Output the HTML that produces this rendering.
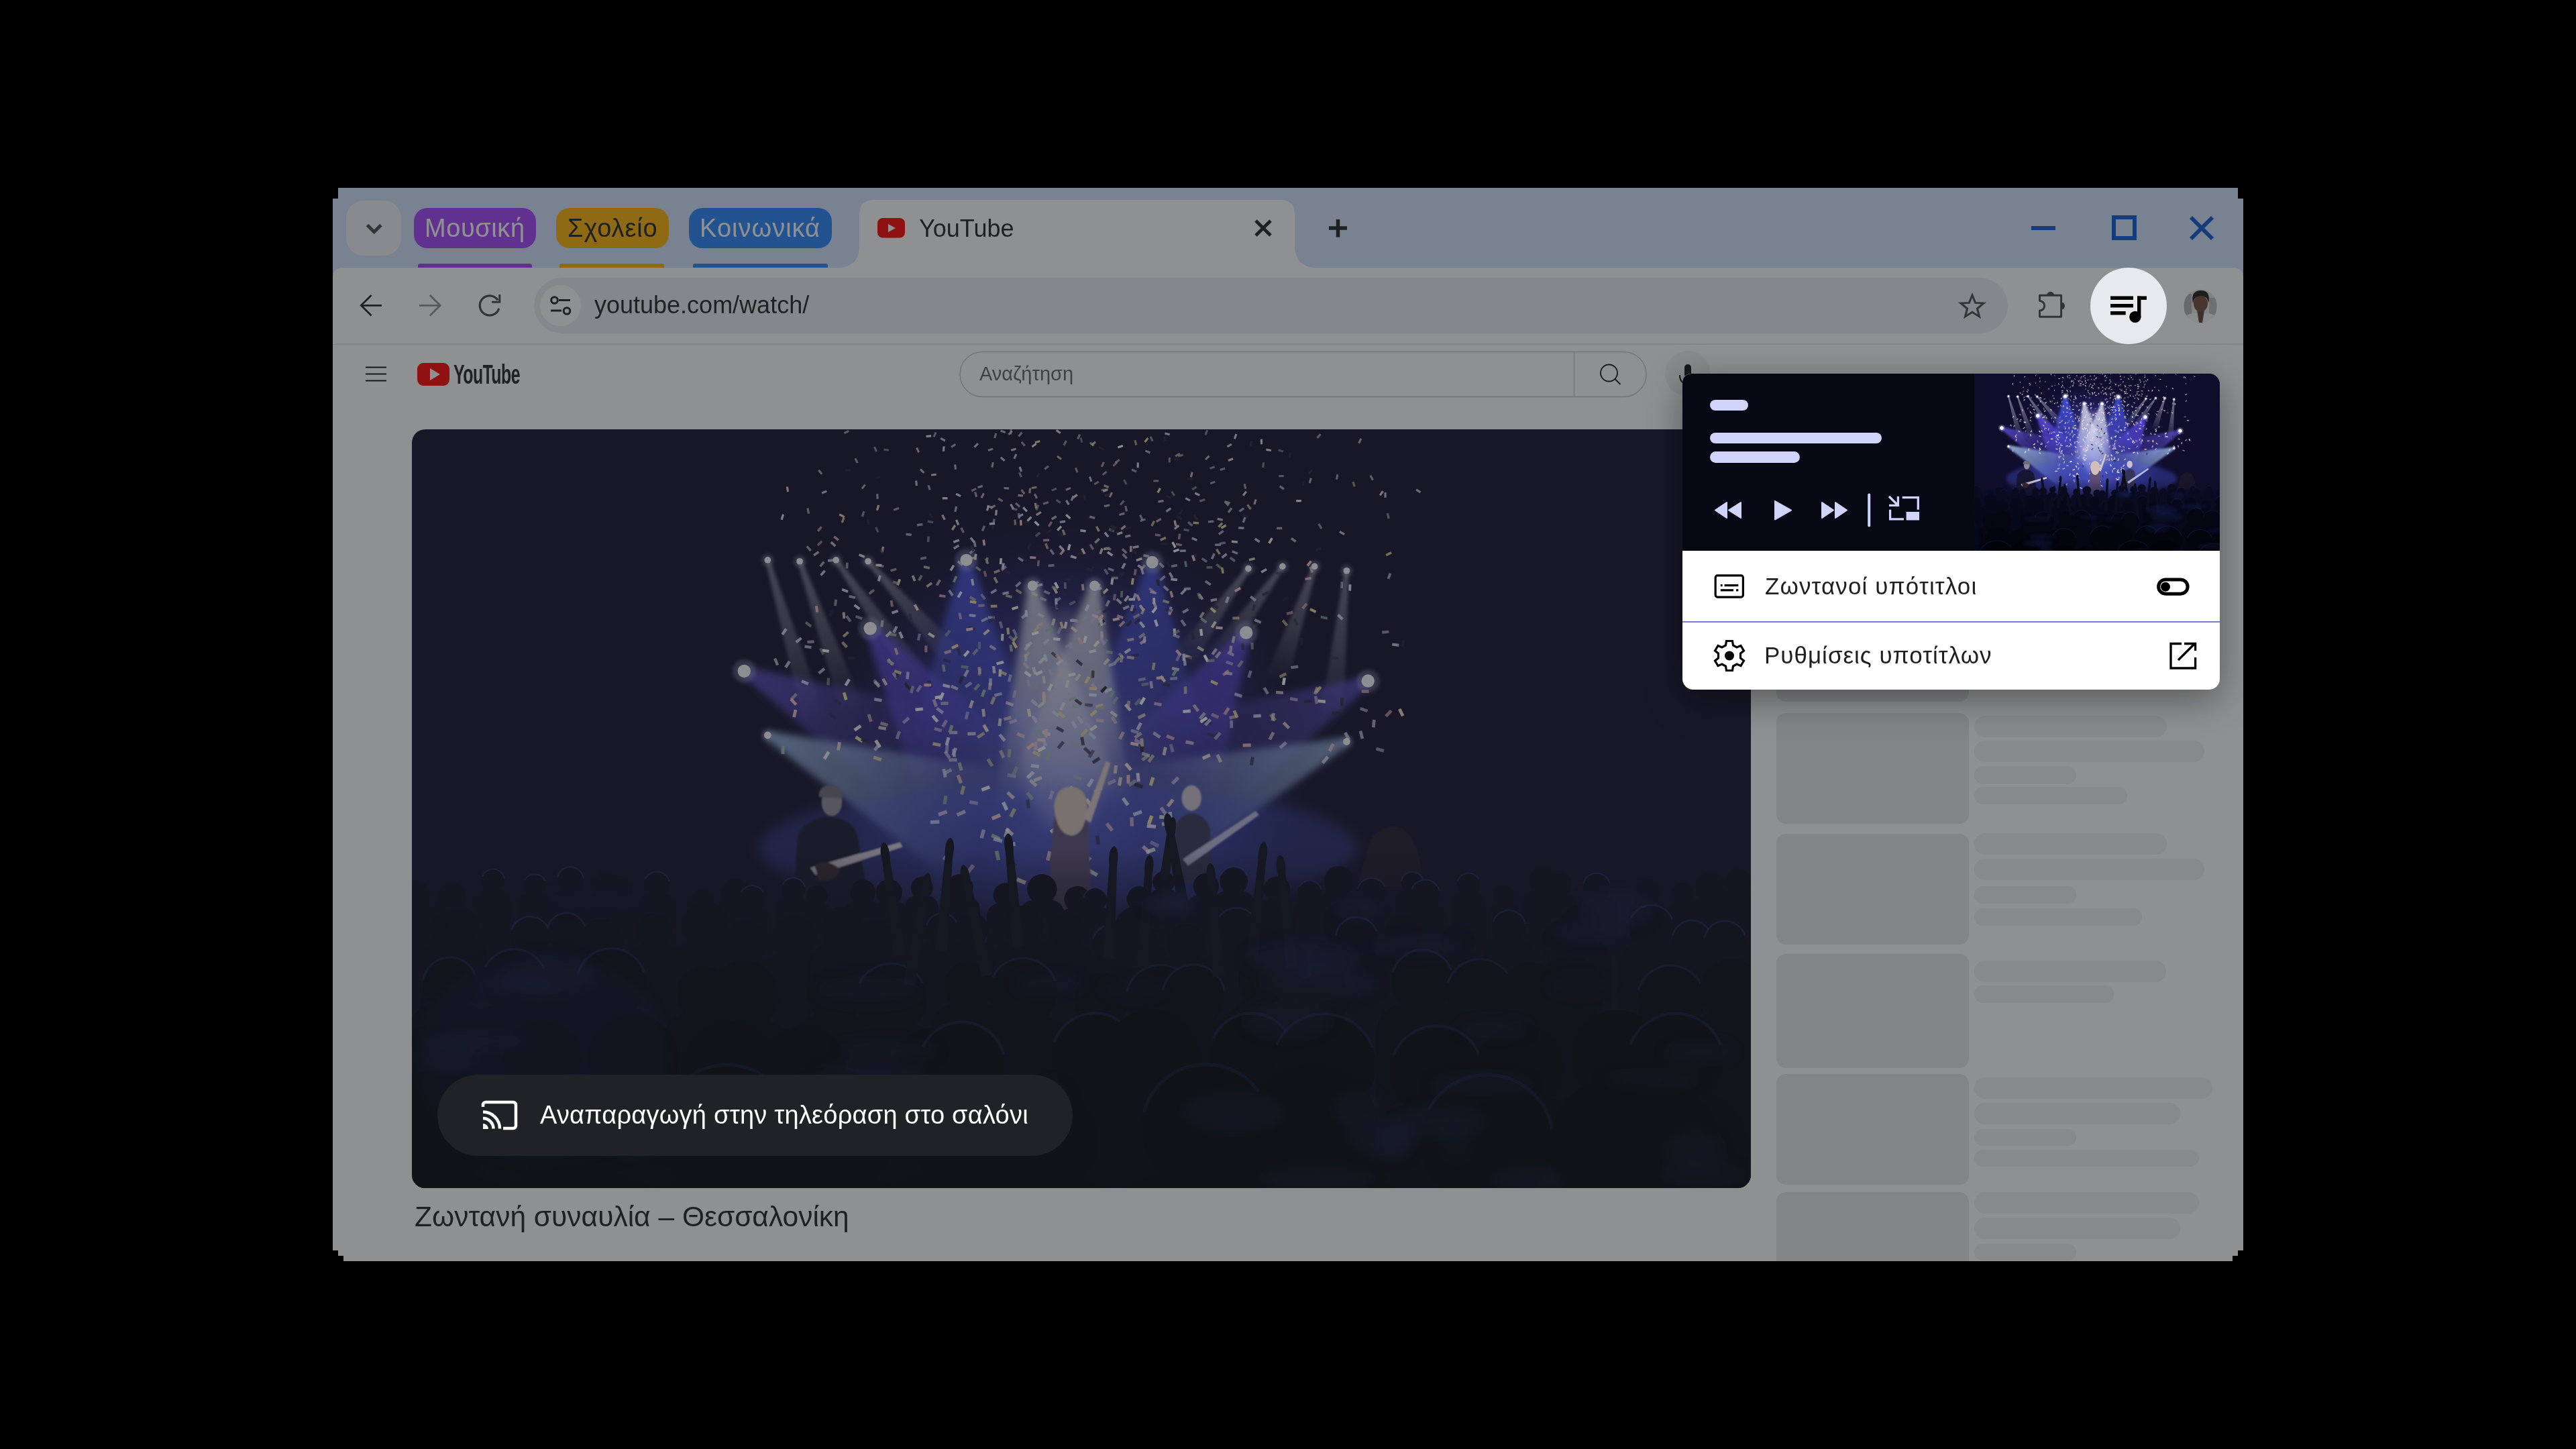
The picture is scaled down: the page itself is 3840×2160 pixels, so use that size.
<!DOCTYPE html>
<html><head><meta charset="utf-8">
<style>
html,body{margin:0;padding:0;}
body{width:3840px;height:2160px;background:#000;position:relative;overflow:hidden;font-family:"Liberation Sans", sans-serif;}
.a{position:absolute;}
.t{position:absolute;line-height:1;white-space:nowrap;font-family:"Liberation Sans", sans-serif;will-change:transform;}
svg{position:absolute;overflow:visible;}
</style></head><body>

<!-- window frame -->
<div class="a" style="left:496px;top:280px;width:2848px;height:1600px;background:#d3e3fd;"></div>

<!-- tab search button -->
<div class="a" style="left:516px;top:299px;width:82px;height:82px;border-radius:26px;background:#f0f2f7;"></div>
<svg style="left:0;top:0" width="3840" height="2160">
 <path d="M 547.5 335.5 L 557.7 345.7 L 567.9 335.5" fill="none" stroke="#474747" stroke-width="5"/>
</svg>

<!-- tab group chips -->
<div class="a" style="left:617px;top:310px;width:182px;height:60px;border-radius:20px;background:#a040fa;"></div>
<div class="a" style="left:623px;top:393px;width:170px;height:10px;border-radius:3px;background:#a040fa;"></div>
<div class="a" style="left:829px;top:310px;width:168px;height:60px;border-radius:20px;background:#ffb306;"></div>
<div class="a" style="left:834px;top:393px;width:156px;height:10px;border-radius:3px;background:#ffb306;"></div>
<div class="a" style="left:1027px;top:310px;width:213px;height:60px;border-radius:20px;background:#2683ff;"></div>
<div class="a" style="left:1033px;top:393px;width:201px;height:10px;border-radius:3px;background:#2683ff;"></div>
<div class="t" style="left:633px;top:320.8px;font-size:38px;color:#ffffff;letter-spacing:0.57px">Μουσική</div>
<div class="t" style="left:845.5px;top:320.8px;font-size:38px;color:#1f1f1f;letter-spacing:0.9px">Σχολείο</div>
<div class="t" style="left:1042.5px;top:320.8px;font-size:38px;color:#ffffff;letter-spacing:1.0px">Κοινωνικά</div>

<!-- active tab -->
<svg style="left:0;top:0" width="3840" height="2160">
 <path d="M 1248 399 Q 1281 399 1281 366 L 1281 320 Q 1281 298 1303 298 L 1908 298 Q 1930 298 1930 320 L 1930 366 Q 1930 399 1963 399 Z" fill="#ffffff"/>
 <rect x="1308" y="325" width="41" height="29.5" rx="8" fill="#ff0000"/>
 <path d="M 1324 334 L 1324 346 L 1335 340 Z" fill="#fff"/>
 <path d="M 1872 329 L 1894 351 M 1894 329 L 1872 351" stroke="#1f1f1f" stroke-width="5"/>
 <path d="M 1994.5 327 L 1994.5 353.5 M 1981 340 L 2008 340" stroke="#1f1f1f" stroke-width="5.5"/>
 <!-- window controls -->
 <rect x="3028" y="337" width="36" height="6" fill="#0b57d0"/>
 <rect x="3151" y="324" width="31" height="31" fill="none" stroke="#0b57d0" stroke-width="6"/>
 <path d="M 3266 324 L 3298 356 M 3298 324 L 3266 356" stroke="#0b57d0" stroke-width="6"/>
</svg>
<div class="t" style="left:1370.3px;top:322.5px;font-size:36px;color:#1f1f1f;">YouTube</div>

<!-- toolbar -->
<div class="a" style="left:496px;top:399px;width:2848px;height:114px;background:#ffffff;border-radius:14px 14px 0 0;"></div>
<div class="a" style="left:500px;top:512px;width:2844px;height:1.5px;background:#e6e6e8;"></div>
<div class="a" style="left:796px;top:414px;width:2197px;height:83px;border-radius:42px;background:#ebeef3;"></div>
<div class="a" style="left:805px;top:425px;width:61px;height:61px;border-radius:50%;background:#ffffff;"></div>
<svg style="left:0;top:0" width="3840" height="2160">
 <g fill="none" stroke="#474747" stroke-width="2.8" stroke-linecap="butt">
  <path d="M 569 455.3 L 538.5 455.3 M 553.6 440 L 538.3 455.3 L 553.6 470.5" stroke="#1f1f1f"/>
  <path d="M 625 455.3 L 655.7 455.3 M 640.9 440 L 656.2 455.3 L 640.9 470.5" stroke="#8f8f8f"/>
  <path d="M 743.8 459.7 A 14.6 14.6 0 1 1 742.0 447.4" stroke="#474747" stroke-width="3.2"/>
  <path d="M 744.8 439.1 L 744.8 450.3 L 733.1 450.3" stroke="#474747" stroke-width="3"/>
 </g>
 <g fill="none" stroke="#1f1f1f" stroke-width="3">
  <circle cx="826.5" cy="447.5" r="4.8"/><path d="M 833 447.5 L 850 447.5 M 821 463 L 837 463"/><circle cx="845" cy="463.5" r="4.8"/>
 </g>
 <path d="M 2940 440 L 2944.6 451.4 L 2957 452 L 2947.4 460 L 2950.6 472 L 2940 465.2 L 2929.4 472 L 2932.6 460 L 2923 452 L 2935.4 451.4 Z" fill="none" stroke="#474747" stroke-width="3" stroke-linejoin="miter"/>
 <path d="M 3040.5 440.3 L 3072.6 440.3 L 3072.6 472.2 L 3040.5 472.2 L 3040.5 463 A 7.25 7.25 0 0 0 3040.5 448.5 Z" fill="none" stroke="#474747" stroke-width="2.9" stroke-linejoin="round"/>
 <path d="M 3051.2 440.3 A 5.5 5.5 0 0 1 3062.2 440.3 Z M 3072.6 450.5 A 5.5 5.5 0 0 1 3072.6 461.5 Z" fill="#474747"/>
 <clipPath id="avc"><circle cx="3280" cy="456.5" r="25"/></clipPath>
 <g clip-path="url(#avc)">
  <rect x="3255" y="431" width="50" height="51" fill="#e2e2e4"/>
  <rect x="3256" y="438" width="11" height="34" fill="#b0b0b3"/>
  <rect x="3293" y="444" width="11" height="28" fill="#bcbcbe"/>
  <path d="M 3252 484 L 3256 472 Q 3266 466 3274 467 L 3287 467 Q 3295 466 3304 472 L 3308 484 Z" fill="#f4f4f4"/>
  <path d="M 3275 462 L 3286 462 L 3283 481 L 3278 481 Z" fill="#5e3e32"/>
  <ellipse cx="3280.5" cy="452.5" rx="10.5" ry="12.5" fill="#6e4838"/>
  <path d="M 3269 452 Q 3265 433 3281 433 Q 3296 433 3292 452 Q 3291 441 3281 441 Q 3271 441 3269 452 Z" fill="#1e1a1a"/>
 </g>
</svg>
<div class="t" style="left:885.5px;top:436.5px;font-size:36px;color:#1f1f1f;">youtube.com/watch/</div>

<!-- page -->
<div class="a" style="left:496px;top:514px;width:2848px;height:1366px;background:#ffffff;"></div>
<svg style="left:0;top:0" width="3840" height="2160">
 <path d="M 545 547.5 L 576 547.5 M 545 557.5 L 576 557.5 M 545 567.5 L 576 567.5" stroke="#0f0f0f" stroke-width="2.2"/>
 <rect x="622" y="541" width="48" height="34" rx="9" fill="#ff0000"/>
 <path d="M 641 549 L 641 567 L 656 558 Z" fill="#fff"/>
 <rect x="1431" y="524.5" width="1023" height="67" rx="33.5" fill="#ffffff" stroke="#c6c6c6" stroke-width="1.5"/>
 <path d="M 2346.5 525 L 2346.5 591" stroke="#c6c6c6" stroke-width="1.5"/>
 <circle cx="2398.5" cy="556" r="12.5" fill="none" stroke="#0f0f0f" stroke-width="1.8"/>
 <path d="M 2407.5 565 L 2415.5 573" stroke="#0f0f0f" stroke-width="1.8"/>
 <circle cx="2516" cy="557" r="34" fill="#f2f2f2"/>
 <rect x="2511" y="543" width="10" height="20" rx="5" fill="#0f0f0f"/>
 <path d="M 2504 559 Q 2504 572 2516 572 Q 2528 572 2528 559 M 2516 572 L 2516 579" fill="none" stroke="#0f0f0f" stroke-width="2"/>
</svg>
<div class="t" style="left:676px;top:538px;font-size:40px;font-weight:bold;color:#212121;transform-origin:0 0;transform:scaleX(0.625);letter-spacing:-1px;">YouTube</div>
<div class="t" style="left:1459.5px;top:543.0px;font-size:29px;color:#606060;">Αναζήτηση</div>

<!-- video -->
<svg style="left:614px;top:640px" width="1996" height="1131" viewBox="0 0 1996 1131">
 <defs><clipPath id="vclip"><rect x="0" y="0" width="1996" height="1131" rx="20"/></clipPath>
 <symbol id="scene" viewBox="0 0 1996 1131"><defs>
<radialGradient id="gA" cx="960" cy="640" r="900" gradientUnits="userSpaceOnUse">
 <stop offset="0" stop-color="#3c40c8" stop-opacity="0.7"/><stop offset="0.35" stop-color="#2a2288" stop-opacity="0.45"/><stop offset="0.65" stop-color="#150f40" stop-opacity="0.15"/><stop offset="1" stop-color="#0a0822" stop-opacity="0"/>
</radialGradient>
<radialGradient id="gB" cx="980" cy="700" r="560" gradientUnits="userSpaceOnUse">
 <stop offset="0" stop-color="#8fa0ff" stop-opacity="0.55"/><stop offset="0.5" stop-color="#5a66e0" stop-opacity="0.3"/><stop offset="1" stop-color="#4a4ad8" stop-opacity="0"/>
</radialGradient>
<linearGradient id="crowdFade" x1="0" y1="0" x2="0" y2="1">
 <stop offset="0" stop-color="#0a0b22" stop-opacity="0"/><stop offset="0.2" stop-color="#0a0b22" stop-opacity="0.6"/><stop offset="1" stop-color="#020308" stop-opacity="1"/>
</linearGradient>
<filter id="fb14" x="-50%" y="-50%" width="200%" height="200%"><feGaussianBlur stdDeviation="16"/></filter>
<filter id="fb8" x="-50%" y="-50%" width="200%" height="200%"><feGaussianBlur stdDeviation="8"/></filter>
<filter id="fb4" x="-50%" y="-50%" width="200%" height="200%"><feGaussianBlur stdDeviation="4"/></filter>
<filter id="fb2" x="-50%" y="-50%" width="200%" height="200%"><feGaussianBlur stdDeviation="2"/></filter>
</defs>
<g transform="translate(352 77) scale(0.63694)">
<rect x="-560" y="-130" width="3150" height="1800" fill="#100d2c"/>
<rect x="-560" y="-130" width="3150" height="1800" fill="url(#gA)"/>
<rect x="-560" y="-130" width="3150" height="1800" fill="url(#gB)"/>
<linearGradient id="bq0" gradientUnits="userSpaceOnUse" x1="280" y1="185" x2="390" y2="560"><stop offset="0" stop-color="#e4e8ff" stop-opacity="0.45"/><stop offset="0.55" stop-color="#e4e8ff" stop-opacity="0.25"/><stop offset="1" stop-color="#e4e8ff" stop-opacity="0"/></linearGradient>
<polygon points="275,186 364,568 416,552 285,184" fill="url(#bq0)" filter="url(#fb4)"/>
<linearGradient id="bq1" gradientUnits="userSpaceOnUse" x1="355" y1="188" x2="480" y2="540"><stop offset="0" stop-color="#e4e8ff" stop-opacity="0.45"/><stop offset="0.55" stop-color="#e4e8ff" stop-opacity="0.25"/><stop offset="1" stop-color="#e4e8ff" stop-opacity="0"/></linearGradient>
<polygon points="350,190 454,549 506,531 360,186" fill="url(#bq1)" filter="url(#fb4)"/>
<linearGradient id="bq2" gradientUnits="userSpaceOnUse" x1="440" y1="185" x2="640" y2="470"><stop offset="0" stop-color="#e4e8ff" stop-opacity="0.45"/><stop offset="0.55" stop-color="#e4e8ff" stop-opacity="0.25"/><stop offset="1" stop-color="#e4e8ff" stop-opacity="0"/></linearGradient>
<polygon points="436,188 617,486 663,454 444,182" fill="url(#bq2)" filter="url(#fb4)"/>
<linearGradient id="bq3" gradientUnits="userSpaceOnUse" x1="515" y1="188" x2="730" y2="430"><stop offset="0" stop-color="#e4e8ff" stop-opacity="0.45"/><stop offset="0.55" stop-color="#e4e8ff" stop-opacity="0.25"/><stop offset="1" stop-color="#e4e8ff" stop-opacity="0"/></linearGradient>
<polygon points="511,191 709,448 751,412 519,185" fill="url(#bq3)" filter="url(#fb4)"/>
<linearGradient id="bq4" gradientUnits="userSpaceOnUse" x1="1635" y1="210" x2="1600" y2="560"><stop offset="0" stop-color="#e4e8ff" stop-opacity="0.45"/><stop offset="0.55" stop-color="#e4e8ff" stop-opacity="0.25"/><stop offset="1" stop-color="#e4e8ff" stop-opacity="0"/></linearGradient>
<polygon points="1630,210 1573,557 1627,563 1640,210" fill="url(#bq4)" filter="url(#fb4)"/>
<linearGradient id="bq5" gradientUnits="userSpaceOnUse" x1="1560" y1="200" x2="1470" y2="470"><stop offset="0" stop-color="#e4e8ff" stop-opacity="0.45"/><stop offset="0.55" stop-color="#e4e8ff" stop-opacity="0.25"/><stop offset="1" stop-color="#e4e8ff" stop-opacity="0"/></linearGradient>
<polygon points="1555,198 1444,461 1496,479 1565,202" fill="url(#bq5)" filter="url(#fb4)"/>
<linearGradient id="bq6" gradientUnits="userSpaceOnUse" x1="1485" y1="200" x2="1320" y2="430"><stop offset="0" stop-color="#e4e8ff" stop-opacity="0.45"/><stop offset="0.55" stop-color="#e4e8ff" stop-opacity="0.25"/><stop offset="1" stop-color="#e4e8ff" stop-opacity="0"/></linearGradient>
<polygon points="1481,197 1298,414 1342,446 1489,203" fill="url(#bq6)" filter="url(#fb4)"/>
<linearGradient id="bq7" gradientUnits="userSpaceOnUse" x1="1405" y1="205" x2="1250" y2="420"><stop offset="0" stop-color="#e4e8ff" stop-opacity="0.45"/><stop offset="0.55" stop-color="#e4e8ff" stop-opacity="0.25"/><stop offset="1" stop-color="#e4e8ff" stop-opacity="0"/></linearGradient>
<polygon points="1401,202 1228,404 1272,436 1409,208" fill="url(#bq7)" filter="url(#fb4)"/>
<linearGradient id="bq8" gradientUnits="userSpaceOnUse" x1="745" y1="185" x2="760" y2="640"><stop offset="0" stop-color="#4c5cff" stop-opacity="0.8"/><stop offset="0.55" stop-color="#4c5cff" stop-opacity="0.44"/><stop offset="1" stop-color="#4c5cff" stop-opacity="0"/></linearGradient>
<polygon points="733,185 610,645 910,635 757,185" fill="url(#bq8)" filter="url(#fb8)"/>
<linearGradient id="bq9" gradientUnits="userSpaceOnUse" x1="1180" y1="190" x2="1160" y2="600"><stop offset="0" stop-color="#4c5cff" stop-opacity="0.75"/><stop offset="0.55" stop-color="#4c5cff" stop-opacity="0.41"/><stop offset="1" stop-color="#4c5cff" stop-opacity="0"/></linearGradient>
<polygon points="1168,189 1020,593 1300,607 1192,191" fill="url(#bq9)" filter="url(#fb8)"/>
<linearGradient id="bq10" gradientUnits="userSpaceOnUse" x1="520" y1="345" x2="760" y2="700"><stop offset="0" stop-color="#6650ff" stop-opacity="0.75"/><stop offset="0.55" stop-color="#6650ff" stop-opacity="0.41"/><stop offset="1" stop-color="#6650ff" stop-opacity="0"/></linearGradient>
<polygon points="510,352 644,778 876,622 530,338" fill="url(#bq10)" filter="url(#fb8)"/>
<linearGradient id="bq11" gradientUnits="userSpaceOnUse" x1="1400" y1="355" x2="1200" y2="700"><stop offset="0" stop-color="#6650ff" stop-opacity="0.75"/><stop offset="0.55" stop-color="#6650ff" stop-opacity="0.41"/><stop offset="1" stop-color="#6650ff" stop-opacity="0"/></linearGradient>
<polygon points="1390,349 1079,630 1321,770 1410,361" fill="url(#bq11)" filter="url(#fb8)"/>
<linearGradient id="bq12" gradientUnits="userSpaceOnUse" x1="225" y1="445" x2="620" y2="640"><stop offset="0" stop-color="#6a58f0" stop-opacity="0.7"/><stop offset="0.55" stop-color="#6a58f0" stop-opacity="0.39"/><stop offset="1" stop-color="#6a58f0" stop-opacity="0"/></linearGradient>
<polygon points="220,455 567,748 673,532 230,435" fill="url(#bq12)" filter="url(#fb8)"/>
<linearGradient id="bq13" gradientUnits="userSpaceOnUse" x1="1685" y1="468" x2="1320" y2="650"><stop offset="0" stop-color="#6a58f0" stop-opacity="0.65"/><stop offset="0.55" stop-color="#6a58f0" stop-opacity="0.36"/><stop offset="1" stop-color="#6a58f0" stop-opacity="0"/></linearGradient>
<polygon points="1680,458 1266,543 1374,757 1690,478" fill="url(#bq13)" filter="url(#fb8)"/>
<linearGradient id="bq14" gradientUnits="userSpaceOnUse" x1="900" y1="245" x2="960" y2="760"><stop offset="0" stop-color="#f0f3ff" stop-opacity="0.8"/><stop offset="0.5" stop-color="#f0f3ff" stop-opacity="0.44"/><stop offset="1" stop-color="#f0f3ff" stop-opacity="0"/></linearGradient>
<polygon points="889,246 811,777 1109,743 911,244" fill="url(#bq14)" filter="url(#fb8)"/>
<linearGradient id="bq15" gradientUnits="userSpaceOnUse" x1="1045" y1="245" x2="985" y2="760"><stop offset="0" stop-color="#f0f3ff" stop-opacity="0.8"/><stop offset="0.5" stop-color="#f0f3ff" stop-opacity="0.44"/><stop offset="1" stop-color="#f0f3ff" stop-opacity="0"/></linearGradient>
<polygon points="1034,244 836,743 1134,777 1056,246" fill="url(#bq15)" filter="url(#fb8)"/>
<linearGradient id="bq16" gradientUnits="userSpaceOnUse" x1="280" y1="595" x2="800" y2="820"><stop offset="0" stop-color="#a8ccff" stop-opacity="0.8"/><stop offset="0.55" stop-color="#a8ccff" stop-opacity="0.44"/><stop offset="1" stop-color="#a8ccff" stop-opacity="0"/></linearGradient>
<polygon points="276,604 740,958 860,682 284,586" fill="url(#bq16)" filter="url(#fb8)"/>
<linearGradient id="bq17" gradientUnits="userSpaceOnUse" x1="1635" y1="610" x2="1150" y2="800"><stop offset="0" stop-color="#a8ccff" stop-opacity="0.75"/><stop offset="0.55" stop-color="#a8ccff" stop-opacity="0.41"/><stop offset="1" stop-color="#a8ccff" stop-opacity="0"/></linearGradient>
<polygon points="1631,601 1099,670 1201,930 1639,619" fill="url(#bq17)" filter="url(#fb8)"/>
<ellipse cx="960" cy="860" rx="700" ry="150" fill="#4a5ae0" opacity="0.35" filter="url(#fb14)"/>
<ellipse cx="975" cy="560" rx="110" ry="260" fill="#eef0ff" opacity="0.22" filter="url(#fb14)"/>
<rect x="1044" y="700" width="20" height="8.1" fill="#d8e4ff" opacity="0.83" transform="rotate(121 1044 700)"/><rect x="1064" y="321" width="16" height="6.3" fill="#a0b8a8" opacity="0.64" transform="rotate(59 1064 321)"/><rect x="918" y="-91" width="12" height="4.9" fill="#f0e0a0" opacity="0.94" transform="rotate(163 918 -91)"/><rect x="1033" y="482" width="17" height="7.1" fill="#f0e0a0" opacity="0.85" transform="rotate(3 1033 482)"/><rect x="1568" y="511" width="18" height="7.2" fill="#fff4ea" opacity="0.92" transform="rotate(7 1568 511)"/><rect x="951" y="727" width="20" height="8.2" fill="#c8b8e8" opacity="0.73" transform="rotate(109 951 727)"/><rect x="1133" y="-29" width="12" height="4.9" fill="#ffffff" opacity="0.57" transform="rotate(24 1133 -29)"/><rect x="732" y="308" width="15" height="6.3" fill="#c8b8e8" opacity="0.74" transform="rotate(77 732 308)"/><rect x="1246" y="-62" width="12" height="4.9" fill="#f0e0a0" opacity="0.65" transform="rotate(149 1246 -62)"/><rect x="1297" y="346" width="16" height="6.5" fill="#ffffff" opacity="0.98" transform="rotate(83 1297 346)"/><rect x="1396" y="66" width="13" height="5.2" fill="#e0d8ff" opacity="0.67" transform="rotate(146 1396 66)"/><rect x="1303" y="559" width="18" height="7.4" fill="#2a2440" opacity="0.73" transform="rotate(17 1303 559)"/><rect x="1185" y="517" width="18" height="7.2" fill="#c8b8e8" opacity="0.82" transform="rotate(11 1185 517)"/><rect x="1036" y="-11" width="12" height="4.9" fill="#d8e4ff" opacity="0.78" transform="rotate(71 1036 -11)"/><rect x="1320" y="297" width="15" height="6.2" fill="#2a2440" opacity="0.56" transform="rotate(137 1320 297)"/><rect x="1130" y="610" width="19" height="7.7" fill="#f8c8c8" opacity="0.99" transform="rotate(10 1130 610)"/><rect x="828" y="556" width="18" height="7.4" fill="#ffffff" opacity="0.72" transform="rotate(96 828 556)"/><rect x="1253" y="69" width="13" height="5.2" fill="#2a2440" opacity="0.67" transform="rotate(129 1253 69)"/><rect x="631" y="-79" width="12" height="4.9" fill="#f8c8c8" opacity="0.78" transform="rotate(66 631 -79)"/><rect x="958" y="285" width="15" height="6.2" fill="#c8b8e8" opacity="0.56" transform="rotate(80 958 285)"/><rect x="630" y="-1" width="12" height="4.9" fill="#fff4ea" opacity="0.76" transform="rotate(85 630 -1)"/><rect x="866" y="31" width="12" height="5.0" fill="#f8c8c8" opacity="0.82" transform="rotate(5 866 31)"/><rect x="1082" y="281" width="15" height="6.2" fill="#d8e4ff" opacity="0.68" transform="rotate(116 1082 281)"/><rect x="829" y="181" width="14" height="5.7" fill="#ffffff" opacity="0.93" transform="rotate(94 829 181)"/><rect x="954" y="861" width="22" height="8.8" fill="#f0d8d0" opacity="0.99" transform="rotate(6 954 861)"/><rect x="933" y="145" width="14" height="5.5" fill="#f0e0a0" opacity="0.66" transform="rotate(68 933 145)"/><rect x="1158" y="616" width="19" height="7.7" fill="#2a2440" opacity="0.98" transform="rotate(82 1158 616)"/><rect x="893" y="97" width="13" height="5.3" fill="#2a2440" opacity="0.65" transform="rotate(166 893 97)"/><rect x="750" y="194" width="14" height="5.8" fill="#2a2440" opacity="0.69" transform="rotate(48 750 194)"/><rect x="1253" y="-59" width="12" height="4.9" fill="#f8c8c8" opacity="0.59" transform="rotate(164 1253 -59)"/><rect x="658" y="9" width="12" height="4.9" fill="#c8b8e8" opacity="0.76" transform="rotate(69 658 9)"/><rect x="812" y="102" width="13" height="5.3" fill="#2a2440" opacity="0.62" transform="rotate(105 812 102)"/><rect x="1239" y="200" width="14" height="5.8" fill="#a0b8a8" opacity="0.89" transform="rotate(169 1239 200)"/><rect x="1449" y="209" width="14" height="5.8" fill="#e0d8ff" opacity="0.99" transform="rotate(150 1449 209)"/><rect x="1207" y="464" width="17" height="7.0" fill="#fff4ea" opacity="0.78" transform="rotate(177 1207 464)"/><rect x="1248" y="929" width="22" height="9.1" fill="#c8b8e8" opacity="0.77" transform="rotate(3 1248 929)"/><rect x="1319" y="561" width="18" height="7.4" fill="#e0d8ff" opacity="0.79" transform="rotate(134 1319 561)"/><rect x="1762" y="532" width="18" height="7.3" fill="#f0d8d0" opacity="0.99" transform="rotate(64 1762 532)"/><rect x="374" y="151" width="14" height="5.6" fill="#fff4ea" opacity="0.60" transform="rotate(50 374 151)"/><rect x="1148" y="195" width="14" height="5.8" fill="#e0d8ff" opacity="0.92" transform="rotate(32 1148 195)"/><rect x="1516" y="321" width="16" height="6.3" fill="#2a2440" opacity="0.66" transform="rotate(69 1516 321)"/><rect x="689" y="38" width="12" height="5.0" fill="#fff4ea" opacity="0.94" transform="rotate(0 689 38)"/><rect x="1027" y="203" width="14" height="5.8" fill="#2a2440" opacity="0.93" transform="rotate(8 1027 203)"/><rect x="1374" y="495" width="18" height="7.1" fill="#d8e4ff" opacity="0.71" transform="rotate(18 1374 495)"/><rect x="721" y="-39" width="12" height="4.9" fill="#d8e4ff" opacity="0.74" transform="rotate(84 721 -39)"/><rect x="1031" y="319" width="16" height="6.3" fill="#c8b8e8" opacity="0.63" transform="rotate(145 1031 319)"/><rect x="667" y="611" width="19" height="7.7" fill="#f0e0a0" opacity="0.83" transform="rotate(11 667 611)"/><rect x="694" y="429" width="17" height="6.8" fill="#a0b8a8" opacity="0.74" transform="rotate(80 694 429)"/><rect x="872" y="-34" width="12" height="4.9" fill="#e0d8ff" opacity="0.86" transform="rotate(69 872 -34)"/><rect x="1351" y="446" width="17" height="6.9" fill="#c8b8e8" opacity="0.97" transform="rotate(7 1351 446)"/><rect x="1081" y="59" width="13" height="5.1" fill="#a0b8a8" opacity="0.93" transform="rotate(169 1081 59)"/><rect x="666" y="241" width="15" height="6.0" fill="#f0d8d0" opacity="0.79" transform="rotate(144 666 241)"/><rect x="750" y="339" width="16" height="6.4" fill="#2a2440" opacity="0.80" transform="rotate(23 750 339)"/><rect x="821" y="39" width="12" height="5.1" fill="#fff4ea" opacity="0.56" transform="rotate(31 821 39)"/><rect x="1320" y="543" width="18" height="7.3" fill="#f8c8c8" opacity="0.57" transform="rotate(22 1320 543)"/><rect x="1057" y="-81" width="12" height="4.9" fill="#2a2440" opacity="0.97" transform="rotate(25 1057 -81)"/><rect x="1305" y="406" width="17" height="6.7" fill="#ffffff" opacity="1.00" transform="rotate(61 1305 406)"/><rect x="769" y="20" width="12" height="5.0" fill="#c8b8e8" opacity="0.73" transform="rotate(153 769 20)"/><rect x="789" y="569" width="18" height="7.5" fill="#f0d8d0" opacity="0.99" transform="rotate(60 789 569)"/><rect x="500" y="576" width="18" height="7.5" fill="#ffffff" opacity="0.89" transform="rotate(145 500 576)"/><rect x="810" y="-43" width="12" height="4.9" fill="#a0b8a8" opacity="0.95" transform="rotate(102 810 -43)"/><rect x="1106" y="416" width="17" height="6.8" fill="#a0b8a8" opacity="0.98" transform="rotate(132 1106 416)"/><rect x="401" y="-27" width="12" height="4.9" fill="#ffffff" opacity="0.62" transform="rotate(50 401 -27)"/><rect x="1276" y="-20" width="12" height="4.9" fill="#f8c8c8" opacity="0.82" transform="rotate(105 1276 -20)"/><rect x="1247" y="124" width="13" height="5.4" fill="#f8c8c8" opacity="0.64" transform="rotate(97 1247 124)"/><rect x="769" y="199" width="14" height="5.8" fill="#a0b8a8" opacity="0.74" transform="rotate(36 769 199)"/><rect x="1140" y="706" width="20" height="8.1" fill="#2a2440" opacity="0.94" transform="rotate(18 1140 706)"/><rect x="536" y="605" width="19" height="7.6" fill="#fff4ea" opacity="0.95" transform="rotate(58 536 605)"/><rect x="1239" y="394" width="16" height="6.7" fill="#f8c8c8" opacity="0.90" transform="rotate(48 1239 394)"/><rect x="1336" y="639" width="19" height="7.8" fill="#fff4ea" opacity="0.63" transform="rotate(65 1336 639)"/><rect x="1230" y="357" width="16" height="6.5" fill="#f0d8d0" opacity="0.60" transform="rotate(21 1230 357)"/><rect x="1395" y="379" width="16" height="6.6" fill="#2a2440" opacity="0.70" transform="rotate(85 1395 379)"/><rect x="904" y="388" width="16" height="6.6" fill="#a0b8a8" opacity="0.69" transform="rotate(139 904 388)"/><rect x="1117" y="215" width="14" height="5.9" fill="#2a2440" opacity="0.96" transform="rotate(135 1117 215)"/><rect x="1024" y="32" width="12" height="5.0" fill="#2a2440" opacity="0.85" transform="rotate(86 1024 32)"/><rect x="838" y="265" width="15" height="6.1" fill="#a0b8a8" opacity="0.87" transform="rotate(15 838 265)"/><rect x="808" y="-73" width="12" height="4.9" fill="#ffffff" opacity="0.62" transform="rotate(161 808 -73)"/><rect x="845" y="343" width="16" height="6.4" fill="#f0e0a0" opacity="0.84" transform="rotate(84 845 343)"/><rect x="788" y="30" width="12" height="5.0" fill="#f8c8c8" opacity="0.77" transform="rotate(117 788 30)"/><rect x="1188" y="426" width="17" height="6.8" fill="#f0e0a0" opacity="0.71" transform="rotate(100 1188 426)"/><rect x="975" y="613" width="19" height="7.7" fill="#2a2440" opacity="0.67" transform="rotate(129 975 613)"/><rect x="864" y="-62" width="12" height="4.9" fill="#d8e4ff" opacity="0.79" transform="rotate(114 864 -62)"/><rect x="1056" y="4" width="12" height="4.9" fill="#f0d8d0" opacity="0.59" transform="rotate(151 1056 4)"/><rect x="977" y="97" width="13" height="5.3" fill="#e0d8ff" opacity="0.88" transform="rotate(171 977 97)"/><rect x="840" y="202" width="14" height="5.8" fill="#c8b8e8" opacity="0.79" transform="rotate(139 840 202)"/><rect x="790" y="210" width="14" height="5.8" fill="#f8c8c8" opacity="0.56" transform="rotate(75 790 210)"/><rect x="1346" y="202" width="14" height="5.8" fill="#f0e0a0" opacity="0.84" transform="rotate(79 1346 202)"/><rect x="1553" y="230" width="15" height="5.9" fill="#f8c8c8" opacity="0.77" transform="rotate(170 1553 230)"/><rect x="544" y="-7" width="12" height="4.9" fill="#2a2440" opacity="0.66" transform="rotate(169 544 -7)"/><rect x="1244" y="697" width="20" height="8.0" fill="#e0d8ff" opacity="0.65" transform="rotate(135 1244 697)"/><rect x="1175" y="249" width="15" height="6.0" fill="#f8c8c8" opacity="0.61" transform="rotate(39 1175 249)"/><rect x="1333" y="395" width="16" height="6.7" fill="#e0d8ff" opacity="0.79" transform="rotate(127 1333 395)"/><rect x="1298" y="179" width="14" height="5.7" fill="#d8e4ff" opacity="0.59" transform="rotate(34 1298 179)"/><rect x="1154" y="328" width="16" height="6.4" fill="#d8e4ff" opacity="0.97" transform="rotate(52 1154 328)"/><rect x="1259" y="38" width="12" height="5.0" fill="#e0d8ff" opacity="0.90" transform="rotate(27 1259 38)"/><rect x="426" y="636" width="19" height="7.8" fill="#ffffff" opacity="0.86" transform="rotate(121 426 636)"/><rect x="643" y="222" width="14" height="5.9" fill="#a0b8a8" opacity="0.76" transform="rotate(118 643 222)"/><rect x="871" y="-21" width="12" height="4.9" fill="#a0b8a8" opacity="0.72" transform="rotate(65 871 -21)"/><rect x="705" y="585" width="19" height="7.5" fill="#c8b8e8" opacity="0.91" transform="rotate(0 705 585)"/><rect x="991" y="607" width="19" height="7.6" fill="#a0b8a8" opacity="0.64" transform="rotate(40 991 607)"/><rect x="1185" y="586" width="19" height="7.5" fill="#ffffff" opacity="0.60" transform="rotate(35 1185 586)"/><rect x="1215" y="624" width="19" height="7.7" fill="#fff4ea" opacity="0.75" transform="rotate(103 1215 624)"/><rect x="540" y="573" width="18" height="7.5" fill="#fff4ea" opacity="0.73" transform="rotate(10 540 573)"/><rect x="1041" y="440" width="17" height="6.9" fill="#a0b8a8" opacity="0.83" transform="rotate(85 1041 440)"/><rect x="905" y="435" width="17" height="6.9" fill="#fff4ea" opacity="0.67" transform="rotate(74 905 435)"/><rect x="1105" y="-48" width="12" height="4.9" fill="#f8c8c8" opacity="0.67" transform="rotate(143 1105 -48)"/><rect x="1210" y="-114" width="12" height="4.9" fill="#d8e4ff" opacity="0.86" transform="rotate(14 1210 -114)"/><rect x="1483" y="218" width="14" height="5.9" fill="#2a2440" opacity="0.59" transform="rotate(174 1483 218)"/><rect x="1057" y="377" width="16" height="6.6" fill="#fff4ea" opacity="0.96" transform="rotate(130 1057 377)"/><rect x="367" y="384" width="16" height="6.6" fill="#d8e4ff" opacity="0.72" transform="rotate(8 367 384)"/><rect x="1159" y="602" width="19" height="7.6" fill="#f0e0a0" opacity="0.79" transform="rotate(85 1159 602)"/><rect x="1075" y="-20" width="12" height="4.9" fill="#c8b8e8" opacity="0.71" transform="rotate(141 1075 -20)"/><rect x="1271" y="827" width="21" height="8.6" fill="#a0b8a8" opacity="0.77" transform="rotate(179 1271 827)"/><rect x="983" y="494" width="18" height="7.1" fill="#c8b8e8" opacity="0.62" transform="rotate(10 983 494)"/><rect x="991" y="233" width="15" height="5.9" fill="#2a2440" opacity="0.85" transform="rotate(177 991 233)"/><rect x="1227" y="435" width="17" height="6.9" fill="#fff4ea" opacity="0.75" transform="rotate(12 1227 435)"/><rect x="1476" y="-14" width="12" height="4.9" fill="#d8e4ff" opacity="0.58" transform="rotate(0 1476 -14)"/><rect x="1379" y="554" width="18" height="7.4" fill="#f0d8d0" opacity="0.64" transform="rotate(166 1379 554)"/><rect x="1194" y="230" width="15" height="5.9" fill="#2a2440" opacity="0.99" transform="rotate(73 1194 230)"/><rect x="1096" y="704" width="20" height="8.1" fill="#c8b8e8" opacity="0.69" transform="rotate(154 1096 704)"/><rect x="1476" y="-75" width="12" height="4.9" fill="#a0b8a8" opacity="0.57" transform="rotate(20 1476 -75)"/><rect x="1178" y="-105" width="12" height="4.9" fill="#f0d8d0" opacity="0.59" transform="rotate(65 1178 -105)"/><rect x="761" y="349" width="16" height="6.5" fill="#f0d8d0" opacity="0.94" transform="rotate(171 761 349)"/><rect x="732" y="658" width="19" height="7.9" fill="#a0b8a8" opacity="0.93" transform="rotate(74 732 658)"/><rect x="462" y="-28" width="12" height="4.9" fill="#2a2440" opacity="0.76" transform="rotate(1 462 -28)"/><rect x="990" y="173" width="14" height="5.7" fill="#d8e4ff" opacity="0.97" transform="rotate(18 990 173)"/><rect x="876" y="19" width="12" height="5.0" fill="#f0d8d0" opacity="0.66" transform="rotate(54 876 19)"/><rect x="1078" y="202" width="14" height="5.8" fill="#e0d8ff" opacity="0.66" transform="rotate(21 1078 202)"/><rect x="744" y="777" width="21" height="8.4" fill="#e0d8ff" opacity="0.76" transform="rotate(156 744 777)"/><rect x="852" y="454" width="17" height="6.9" fill="#c8b8e8" opacity="0.76" transform="rotate(104 852 454)"/><rect x="928" y="255" width="15" height="6.0" fill="#fff4ea" opacity="0.56" transform="rotate(24 928 255)"/><rect x="1259" y="607" width="19" height="7.6" fill="#fff4ea" opacity="0.64" transform="rotate(10 1259 607)"/><rect x="1121" y="659" width="19" height="7.9" fill="#fff4ea" opacity="0.89" transform="rotate(50 1121 659)"/><rect x="971" y="445" width="17" height="6.9" fill="#f8c8c8" opacity="0.58" transform="rotate(113 971 445)"/><rect x="1740" y="217" width="14" height="5.9" fill="#d8e4ff" opacity="0.69" transform="rotate(110 1740 217)"/><rect x="582" y="390" width="16" height="6.6" fill="#f0e0a0" opacity="0.68" transform="rotate(73 582 390)"/><rect x="1116" y="48" width="13" height="5.1" fill="#e0d8ff" opacity="0.55" transform="rotate(133 1116 48)"/><rect x="1310" y="589" width="19" height="7.6" fill="#2a2440" opacity="0.55" transform="rotate(12 1310 589)"/><rect x="1646" y="242" width="15" height="6.0" fill="#d8e4ff" opacity="0.99" transform="rotate(92 1646 242)"/><rect x="1235" y="345" width="16" height="6.4" fill="#fff4ea" opacity="0.93" transform="rotate(86 1235 345)"/><rect x="487" y="-54" width="12" height="4.9" fill="#a0b8a8" opacity="0.85" transform="rotate(63 487 -54)"/><rect x="433" y="304" width="15" height="6.3" fill="#2a2440" opacity="0.57" transform="rotate(109 433 304)"/><rect x="1227" y="295" width="15" height="6.2" fill="#e0d8ff" opacity="0.78" transform="rotate(105 1227 295)"/><rect x="1232" y="-54" width="12" height="4.9" fill="#2a2440" opacity="0.56" transform="rotate(11 1232 -54)"/><rect x="1346" y="100" width="13" height="5.3" fill="#f0e0a0" opacity="0.83" transform="rotate(132 1346 100)"/><rect x="972" y="421" width="17" height="6.8" fill="#ffffff" opacity="0.60" transform="rotate(140 972 421)"/><rect x="1069" y="-43" width="12" height="4.9" fill="#f8c8c8" opacity="0.68" transform="rotate(115 1069 -43)"/><rect x="546" y="222" width="14" height="5.9" fill="#ffffff" opacity="0.77" transform="rotate(105 546 222)"/><rect x="1059" y="652" width="19" height="7.8" fill="#2a2440" opacity="0.82" transform="rotate(147 1059 652)"/><rect x="1149" y="410" width="17" height="6.7" fill="#2a2440" opacity="0.58" transform="rotate(171 1149 410)"/><rect x="1417" y="378" width="16" height="6.6" fill="#a0b8a8" opacity="0.63" transform="rotate(88 1417 378)"/><rect x="894" y="533" width="18" height="7.3" fill="#fff4ea" opacity="0.82" transform="rotate(81 894 533)"/><rect x="919" y="271" width="15" height="6.1" fill="#c8b8e8" opacity="0.77" transform="rotate(20 919 271)"/><rect x="1577" y="160" width="14" height="5.6" fill="#2a2440" opacity="0.93" transform="rotate(161 1577 160)"/><rect x="1303" y="309" width="15" height="6.3" fill="#f0d8d0" opacity="0.76" transform="rotate(123 1303 309)"/><rect x="897" y="697" width="20" height="8.0" fill="#ffffff" opacity="0.61" transform="rotate(43 897 697)"/><rect x="1197" y="188" width="14" height="5.7" fill="#a0b8a8" opacity="0.55" transform="rotate(165 1197 188)"/><rect x="833" y="427" width="17" height="6.8" fill="#ffffff" opacity="0.92" transform="rotate(166 833 427)"/><rect x="1090" y="228" width="15" height="5.9" fill="#ffffff" opacity="0.90" transform="rotate(97 1090 228)"/><rect x="802" y="383" width="16" height="6.6" fill="#fff4ea" opacity="0.60" transform="rotate(33 802 383)"/><rect x="911" y="602" width="19" height="7.6" fill="#f0d8d0" opacity="0.97" transform="rotate(1 911 602)"/><rect x="1019" y="599" width="19" height="7.6" fill="#2a2440" opacity="0.76" transform="rotate(80 1019 599)"/><rect x="981" y="-93" width="12" height="4.9" fill="#a0b8a8" opacity="0.79" transform="rotate(118 981 -93)"/><rect x="940" y="471" width="17" height="7.0" fill="#a0b8a8" opacity="0.89" transform="rotate(51 940 471)"/><rect x="841" y="811" width="21" height="8.6" fill="#ffffff" opacity="0.69" transform="rotate(42 841 811)"/><rect x="1112" y="157" width="14" height="5.6" fill="#fff4ea" opacity="0.60" transform="rotate(45 1112 157)"/><rect x="1734" y="356" width="16" height="6.5" fill="#c8b8e8" opacity="0.72" transform="rotate(175 1734 356)"/><rect x="916" y="57" width="13" height="5.1" fill="#a0b8a8" opacity="0.70" transform="rotate(112 916 57)"/><rect x="797" y="179" width="14" height="5.7" fill="#a0b8a8" opacity="0.84" transform="rotate(95 797 179)"/><rect x="539" y="30" width="12" height="5.0" fill="#d8e4ff" opacity="0.68" transform="rotate(87 539 30)"/><rect x="1292" y="263" width="15" height="6.1" fill="#f0d8d0" opacity="0.88" transform="rotate(56 1292 263)"/><rect x="729" y="687" width="20" height="8.0" fill="#f8c8c8" opacity="0.75" transform="rotate(68 729 687)"/><rect x="571" y="355" width="16" height="6.5" fill="#ffffff" opacity="0.78" transform="rotate(135 571 355)"/><rect x="1127" y="296" width="15" height="6.2" fill="#c8b8e8" opacity="0.90" transform="rotate(156 1127 296)"/><rect x="1668" y="529" width="18" height="7.3" fill="#c8b8e8" opacity="0.71" transform="rotate(19 1668 529)"/><rect x="1110" y="694" width="20" height="8.0" fill="#f0d8d0" opacity="0.87" transform="rotate(99 1110 694)"/><rect x="814" y="507" width="18" height="7.2" fill="#f0e0a0" opacity="0.72" transform="rotate(112 814 507)"/><rect x="835" y="209" width="14" height="5.8" fill="#2a2440" opacity="0.83" transform="rotate(16 835 209)"/><rect x="1105" y="401" width="16" height="6.7" fill="#d8e4ff" opacity="0.56" transform="rotate(50 1105 401)"/><rect x="435" y="188" width="14" height="5.7" fill="#e0d8ff" opacity="0.81" transform="rotate(174 435 188)"/><rect x="1041" y="473" width="17" height="7.0" fill="#f8c8c8" opacity="0.60" transform="rotate(48 1041 473)"/><rect x="428" y="541" width="18" height="7.3" fill="#2a2440" opacity="0.76" transform="rotate(47 428 541)"/><rect x="1165" y="466" width="17" height="7.0" fill="#c8b8e8" opacity="0.68" transform="rotate(168 1165 466)"/><rect x="892" y="745" width="20" height="8.3" fill="#2a2440" opacity="0.58" transform="rotate(82 892 745)"/><rect x="1421" y="322" width="16" height="6.3" fill="#c8b8e8" opacity="0.92" transform="rotate(24 1421 322)"/><rect x="826" y="591" width="19" height="7.6" fill="#e0d8ff" opacity="0.84" transform="rotate(51 826 591)"/><rect x="1123" y="273" width="15" height="6.1" fill="#2a2440" opacity="0.79" transform="rotate(130 1123 273)"/><rect x="874" y="239" width="15" height="6.0" fill="#e0d8ff" opacity="0.73" transform="rotate(137 874 239)"/><rect x="789" y="593" width="19" height="7.6" fill="#f0e0a0" opacity="0.68" transform="rotate(146 789 593)"/><rect x="1165" y="199" width="14" height="5.8" fill="#f0e0a0" opacity="0.71" transform="rotate(132 1165 199)"/><rect x="1379" y="-109" width="12" height="4.9" fill="#e0d8ff" opacity="0.94" transform="rotate(110 1379 -109)"/><rect x="722" y="28" width="12" height="5.0" fill="#e0d8ff" opacity="0.97" transform="rotate(26 722 28)"/><rect x="812" y="433" width="17" height="6.8" fill="#ffffff" opacity="0.77" transform="rotate(83 812 433)"/><rect x="1071" y="205" width="14" height="5.8" fill="#c8b8e8" opacity="0.63" transform="rotate(57 1071 205)"/><rect x="1009" y="550" width="18" height="7.4" fill="#d8e4ff" opacity="0.65" transform="rotate(53 1009 550)"/><rect x="576" y="447" width="17" height="6.9" fill="#e0d8ff" opacity="0.65" transform="rotate(53 576 447)"/><rect x="774" y="-86" width="12" height="4.9" fill="#ffffff" opacity="0.73" transform="rotate(135 774 -86)"/><rect x="539" y="194" width="14" height="5.8" fill="#f8c8c8" opacity="0.59" transform="rotate(14 539 194)"/><rect x="622" y="220" width="14" height="5.9" fill="#fff4ea" opacity="0.78" transform="rotate(68 622 220)"/><rect x="642" y="481" width="17" height="7.1" fill="#c8b8e8" opacity="0.71" transform="rotate(124 642 481)"/><rect x="1423" y="290" width="15" height="6.2" fill="#2a2440" opacity="0.70" transform="rotate(107 1423 290)"/><rect x="957" y="-121" width="12" height="4.9" fill="#f0d8d0" opacity="0.93" transform="rotate(37 957 -121)"/><rect x="566" y="355" width="16" height="6.5" fill="#a0b8a8" opacity="0.81" transform="rotate(10 566 355)"/><rect x="1119" y="107" width="13" height="5.4" fill="#f0d8d0" opacity="0.82" transform="rotate(141 1119 107)"/><rect x="542" y="57" width="13" height="5.1" fill="#f8c8c8" opacity="0.93" transform="rotate(105 542 57)"/><rect x="1006" y="34" width="12" height="5.0" fill="#fff4ea" opacity="0.88" transform="rotate(143 1006 34)"/><rect x="767" y="595" width="19" height="7.6" fill="#ffffff" opacity="0.64" transform="rotate(178 767 595)"/><rect x="914" y="470" width="17" height="7.0" fill="#a0b8a8" opacity="0.76" transform="rotate(100 914 470)"/><rect x="1393" y="78" width="13" height="5.2" fill="#2a2440" opacity="0.82" transform="rotate(14 1393 78)"/><rect x="945" y="116" width="13" height="5.4" fill="#2a2440" opacity="0.79" transform="rotate(141 945 116)"/><rect x="1652" y="1" width="12" height="4.9" fill="#f0e0a0" opacity="0.58" transform="rotate(70 1652 1)"/><rect x="958" y="574" width="18" height="7.5" fill="#2a2440" opacity="0.76" transform="rotate(28 958 574)"/><rect x="753" y="400" width="16" height="6.7" fill="#ffffff" opacity="0.98" transform="rotate(130 753 400)"/><rect x="875" y="91" width="13" height="5.3" fill="#f8c8c8" opacity="0.96" transform="rotate(87 875 91)"/><rect x="1467" y="590" width="19" height="7.6" fill="#f0d8d0" opacity="0.70" transform="rotate(117 1467 590)"/><rect x="1077" y="373" width="16" height="6.6" fill="#a0b8a8" opacity="0.61" transform="rotate(130 1077 373)"/><rect x="1324" y="97" width="13" height="5.3" fill="#c8b8e8" opacity="0.81" transform="rotate(175 1324 97)"/><rect x="1388" y="253" width="15" height="6.0" fill="#f8c8c8" opacity="0.96" transform="rotate(149 1388 253)"/><rect x="1062" y="367" width="16" height="6.5" fill="#c8b8e8" opacity="0.91" transform="rotate(54 1062 367)"/><rect x="1157" y="778" width="21" height="8.4" fill="#d8e4ff" opacity="0.80" transform="rotate(160 1157 778)"/><rect x="1072" y="480" width="17" height="7.1" fill="#f0d8d0" opacity="0.62" transform="rotate(73 1072 480)"/><rect x="495" y="170" width="14" height="5.6" fill="#ffffff" opacity="0.83" transform="rotate(22 495 170)"/><rect x="1157" y="184" width="14" height="5.7" fill="#fff4ea" opacity="0.90" transform="rotate(161 1157 184)"/><rect x="703" y="524" width="18" height="7.3" fill="#a0b8a8" opacity="0.92" transform="rotate(179 703 524)"/><rect x="1503" y="506" width="18" height="7.2" fill="#c8b8e8" opacity="0.70" transform="rotate(8 1503 506)"/><rect x="940" y="373" width="16" height="6.6" fill="#e0d8ff" opacity="0.75" transform="rotate(137 940 373)"/><rect x="851" y="53" width="13" height="5.1" fill="#e0d8ff" opacity="0.91" transform="rotate(60 851 53)"/><rect x="863" y="491" width="17" height="7.1" fill="#c8b8e8" opacity="0.69" transform="rotate(101 863 491)"/><rect x="604" y="122" width="13" height="5.4" fill="#e0d8ff" opacity="0.73" transform="rotate(6 604 122)"/><rect x="793" y="180" width="14" height="5.7" fill="#a0b8a8" opacity="0.84" transform="rotate(67 793 180)"/><rect x="1361" y="272" width="15" height="6.1" fill="#e0d8ff" opacity="0.84" transform="rotate(109 1361 272)"/><rect x="1080" y="110" width="13" height="5.4" fill="#a0b8a8" opacity="0.68" transform="rotate(25 1080 110)"/><rect x="1799" y="18" width="12" height="5.0" fill="#ffffff" opacity="0.69" transform="rotate(32 1799 18)"/><rect x="755" y="269" width="15" height="6.1" fill="#f0e0a0" opacity="0.58" transform="rotate(31 755 269)"/><rect x="1600" y="539" width="18" height="7.3" fill="#2a2440" opacity="0.76" transform="rotate(5 1600 539)"/><rect x="1575" y="315" width="16" height="6.3" fill="#a0b8a8" opacity="0.70" transform="rotate(12 1575 315)"/><rect x="820" y="865" width="22" height="8.8" fill="#a0b8a8" opacity="0.91" transform="rotate(78 820 865)"/><rect x="842" y="684" width="20" height="8.0" fill="#c8b8e8" opacity="0.60" transform="rotate(11 842 684)"/><rect x="899" y="86" width="13" height="5.3" fill="#ffffff" opacity="0.89" transform="rotate(135 899 86)"/><rect x="976" y="128" width="13" height="5.5" fill="#2a2440" opacity="0.69" transform="rotate(172 976 128)"/><rect x="1273" y="-3" width="12" height="4.9" fill="#2a2440" opacity="0.77" transform="rotate(173 1273 -3)"/><rect x="1468" y="544" width="18" height="7.3" fill="#d8e4ff" opacity="0.75" transform="rotate(100 1468 544)"/><rect x="828" y="629" width="19" height="7.7" fill="#f8c8c8" opacity="0.64" transform="rotate(65 828 629)"/><rect x="1240" y="443" width="17" height="6.9" fill="#a0b8a8" opacity="0.89" transform="rotate(122 1240 443)"/><rect x="1358" y="398" width="16" height="6.7" fill="#c8b8e8" opacity="0.84" transform="rotate(25 1358 398)"/><rect x="1348" y="119" width="13" height="5.4" fill="#c8b8e8" opacity="0.81" transform="rotate(144 1348 119)"/><rect x="669" y="547" width="18" height="7.4" fill="#ffffff" opacity="0.89" transform="rotate(50 669 547)"/><rect x="1375" y="364" width="16" height="6.5" fill="#f0d8d0" opacity="0.77" transform="rotate(102 1375 364)"/><rect x="702" y="562" width="18" height="7.4" fill="#c8b8e8" opacity="0.73" transform="rotate(121 702 562)"/><rect x="663" y="-103" width="12" height="4.9" fill="#fff4ea" opacity="0.91" transform="rotate(175 663 -103)"/><rect x="1158" y="204" width="14" height="5.8" fill="#e0d8ff" opacity="0.80" transform="rotate(75 1158 204)"/><rect x="1270" y="542" width="18" height="7.3" fill="#ffffff" opacity="0.92" transform="rotate(176 1270 542)"/><rect x="733" y="431" width="17" height="6.8" fill="#a0b8a8" opacity="0.66" transform="rotate(7 733 431)"/><rect x="865" y="588" width="19" height="7.6" fill="#f0d8d0" opacity="0.64" transform="rotate(21 865 588)"/><rect x="1235" y="92" width="13" height="5.3" fill="#f0d8d0" opacity="0.90" transform="rotate(77 1235 92)"/><rect x="1132" y="111" width="13" height="5.4" fill="#2a2440" opacity="0.68" transform="rotate(164 1132 111)"/><rect x="1257" y="404" width="17" height="6.7" fill="#e0d8ff" opacity="0.99" transform="rotate(88 1257 404)"/><rect x="1671" y="-98" width="12" height="4.9" fill="#f0e0a0" opacity="0.74" transform="rotate(116 1671 -98)"/><rect x="1742" y="540" width="18" height="7.3" fill="#f8c8c8" opacity="0.64" transform="rotate(134 1742 540)"/><rect x="1285" y="171" width="14" height="5.7" fill="#2a2440" opacity="0.87" transform="rotate(102 1285 171)"/><rect x="1055" y="829" width="21" height="8.6" fill="#2a2440" opacity="0.70" transform="rotate(81 1055 829)"/><rect x="1165" y="550" width="18" height="7.4" fill="#f0d8d0" opacity="0.79" transform="rotate(155 1165 550)"/><rect x="739" y="459" width="17" height="7.0" fill="#2a2440" opacity="0.90" transform="rotate(113 739 459)"/><rect x="441" y="509" width="18" height="7.2" fill="#2a2440" opacity="0.72" transform="rotate(43 441 509)"/><rect x="1187" y="95" width="13" height="5.3" fill="#f0e0a0" opacity="0.72" transform="rotate(117 1187 95)"/><rect x="788" y="533" width="18" height="7.3" fill="#fff4ea" opacity="0.77" transform="rotate(84 788 533)"/><rect x="616" y="309" width="15" height="6.3" fill="#2a2440" opacity="0.63" transform="rotate(78 616 309)"/><rect x="1186" y="282" width="15" height="6.2" fill="#ffffff" opacity="0.69" transform="rotate(66 1186 282)"/><rect x="988" y="323" width="16" height="6.3" fill="#e0d8ff" opacity="0.99" transform="rotate(3 988 323)"/><rect x="1342" y="402" width="17" height="6.7" fill="#f0d8d0" opacity="0.75" transform="rotate(128 1342 402)"/><rect x="1551" y="297" width="15" height="6.2" fill="#f0e0a0" opacity="0.95" transform="rotate(27 1551 297)"/><rect x="1138" y="373" width="16" height="6.6" fill="#f0d8d0" opacity="0.70" transform="rotate(169 1138 373)"/><rect x="1045" y="203" width="14" height="5.8" fill="#2a2440" opacity="0.95" transform="rotate(130 1045 203)"/><rect x="957" y="20" width="12" height="5.0" fill="#a0b8a8" opacity="0.69" transform="rotate(158 957 20)"/><rect x="1367" y="-84" width="12" height="4.9" fill="#fff4ea" opacity="0.75" transform="rotate(150 1367 -84)"/><rect x="910" y="17" width="12" height="5.0" fill="#f0e0a0" opacity="0.76" transform="rotate(171 910 17)"/><rect x="844" y="726" width="20" height="8.2" fill="#f0d8d0" opacity="0.80" transform="rotate(42 844 726)"/><rect x="682" y="802" width="21" height="8.5" fill="#e0d8ff" opacity="0.79" transform="rotate(178 682 802)"/><rect x="924" y="584" width="19" height="7.5" fill="#ffffff" opacity="0.63" transform="rotate(18 924 584)"/><rect x="778" y="478" width="17" height="7.0" fill="#a0b8a8" opacity="0.74" transform="rotate(130 778 478)"/><rect x="1045" y="444" width="17" height="6.9" fill="#2a2440" opacity="0.75" transform="rotate(93 1045 444)"/><rect x="1495" y="454" width="17" height="6.9" fill="#f0e0a0" opacity="0.66" transform="rotate(154 1495 454)"/><rect x="1352" y="46" width="13" height="5.1" fill="#a0b8a8" opacity="0.93" transform="rotate(49 1352 46)"/><rect x="1164" y="299" width="15" height="6.2" fill="#f0d8d0" opacity="0.73" transform="rotate(113 1164 299)"/><rect x="1244" y="163" width="14" height="5.6" fill="#ffffff" opacity="0.98" transform="rotate(160 1244 163)"/><rect x="564" y="415" width="17" height="6.8" fill="#f8c8c8" opacity="0.92" transform="rotate(49 564 415)"/><rect x="1001" y="285" width="15" height="6.2" fill="#a0b8a8" opacity="0.57" transform="rotate(153 1001 285)"/><rect x="1088" y="28" width="12" height="5.0" fill="#f8c8c8" opacity="0.81" transform="rotate(117 1088 28)"/><rect x="682" y="265" width="15" height="6.1" fill="#f0d8d0" opacity="0.71" transform="rotate(9 682 265)"/><rect x="686" y="233" width="15" height="5.9" fill="#fff4ea" opacity="0.62" transform="rotate(121 686 233)"/><rect x="1594" y="648" width="19" height="7.8" fill="#e0d8ff" opacity="0.84" transform="rotate(130 1594 648)"/><rect x="1566" y="503" width="18" height="7.2" fill="#e0d8ff" opacity="0.61" transform="rotate(81 1566 503)"/><rect x="949" y="536" width="18" height="7.3" fill="#d8e4ff" opacity="0.75" transform="rotate(38 949 536)"/><rect x="833" y="14" width="12" height="4.9" fill="#a0b8a8" opacity="0.97" transform="rotate(5 833 14)"/><rect x="852" y="-121" width="12" height="4.9" fill="#f8c8c8" opacity="0.61" transform="rotate(93 852 -121)"/><rect x="1283" y="819" width="21" height="8.6" fill="#f0d8d0" opacity="0.73" transform="rotate(11 1283 819)"/><rect x="1447" y="-76" width="12" height="4.9" fill="#f0d8d0" opacity="0.98" transform="rotate(10 1447 -76)"/><rect x="1224" y="227" width="15" height="5.9" fill="#d8e4ff" opacity="0.97" transform="rotate(5 1224 227)"/><rect x="897" y="17" width="12" height="5.0" fill="#f0e0a0" opacity="0.72" transform="rotate(98 897 17)"/><rect x="704" y="649" width="19" height="7.8" fill="#e0d8ff" opacity="0.66" transform="rotate(0 704 649)"/><rect x="1165" y="509" width="18" height="7.2" fill="#ffffff" opacity="0.99" transform="rotate(121 1165 509)"/><rect x="1036" y="-92" width="12" height="4.9" fill="#a0b8a8" opacity="0.89" transform="rotate(42 1036 -92)"/><rect x="781" y="439" width="17" height="6.9" fill="#c8b8e8" opacity="0.59" transform="rotate(100 781 439)"/><rect x="888" y="405" width="17" height="6.7" fill="#d8e4ff" opacity="0.67" transform="rotate(91 888 405)"/><rect x="1311" y="-118" width="12" height="4.9" fill="#c8b8e8" opacity="0.62" transform="rotate(111 1311 -118)"/><rect x="931" y="405" width="17" height="6.7" fill="#d8e4ff" opacity="0.88" transform="rotate(71 931 405)"/><rect x="1204" y="762" width="21" height="8.3" fill="#c8b8e8" opacity="0.84" transform="rotate(54 1204 762)"/><rect x="1066" y="528" width="18" height="7.3" fill="#f8c8c8" opacity="0.96" transform="rotate(166 1066 528)"/><rect x="1742" y="379" width="16" height="6.6" fill="#c8b8e8" opacity="0.98" transform="rotate(8 1742 379)"/><rect x="1223" y="-55" width="12" height="4.9" fill="#f8c8c8" opacity="0.61" transform="rotate(91 1223 -55)"/><rect x="736" y="261" width="15" height="6.1" fill="#ffffff" opacity="0.90" transform="rotate(121 736 261)"/><rect x="879" y="80" width="13" height="5.2" fill="#e0d8ff" opacity="0.89" transform="rotate(150 879 80)"/><rect x="1019" y="167" width="14" height="5.6" fill="#2a2440" opacity="0.85" transform="rotate(144 1019 167)"/><rect x="1328" y="4" width="12" height="4.9" fill="#c8b8e8" opacity="0.73" transform="rotate(159 1328 4)"/><rect x="752" y="444" width="17" height="6.9" fill="#c8b8e8" opacity="0.99" transform="rotate(118 752 444)"/><rect x="1258" y="406" width="17" height="6.7" fill="#f0d8d0" opacity="0.94" transform="rotate(17 1258 406)"/><rect x="729" y="141" width="14" height="5.5" fill="#e0d8ff" opacity="0.96" transform="rotate(160 729 141)"/><rect x="1085" y="224" width="15" height="5.9" fill="#f0d8d0" opacity="0.62" transform="rotate(0 1085 224)"/><rect x="639" y="-29" width="12" height="4.9" fill="#f0d8d0" opacity="0.79" transform="rotate(43 639 -29)"/><rect x="1319" y="465" width="17" height="7.0" fill="#f0e0a0" opacity="0.92" transform="rotate(26 1319 465)"/><rect x="1178" y="841" width="21" height="8.7" fill="#c8b8e8" opacity="0.57" transform="rotate(27 1178 841)"/><rect x="876" y="-93" width="12" height="4.9" fill="#f8c8c8" opacity="0.63" transform="rotate(50 876 -93)"/><rect x="1232" y="748" width="20" height="8.3" fill="#f0d8d0" opacity="0.85" transform="rotate(128 1232 748)"/><rect x="1172" y="478" width="17" height="7.0" fill="#a0b8a8" opacity="0.58" transform="rotate(172 1172 478)"/><rect x="1351" y="-27" width="12" height="4.9" fill="#d8e4ff" opacity="0.63" transform="rotate(163 1351 -27)"/><rect x="952" y="248" width="15" height="6.0" fill="#f0d8d0" opacity="0.95" transform="rotate(60 952 248)"/><rect x="319" y="79" width="13" height="5.2" fill="#e0d8ff" opacity="0.97" transform="rotate(108 319 79)"/><rect x="903" y="630" width="19" height="7.7" fill="#f0e0a0" opacity="0.73" transform="rotate(30 903 630)"/><rect x="1315" y="-57" width="12" height="4.9" fill="#ffffff" opacity="0.67" transform="rotate(135 1315 -57)"/><rect x="1506" y="-66" width="12" height="4.9" fill="#2a2440" opacity="0.60" transform="rotate(98 1506 -66)"/><rect x="1046" y="632" width="19" height="7.7" fill="#2a2440" opacity="0.56" transform="rotate(121 1046 632)"/><rect x="1270" y="255" width="15" height="6.0" fill="#d8e4ff" opacity="0.76" transform="rotate(178 1270 255)"/><rect x="1705" y="623" width="19" height="7.7" fill="#d8e4ff" opacity="0.56" transform="rotate(15 1705 623)"/><rect x="949" y="366" width="16" height="6.5" fill="#ffffff" opacity="0.94" transform="rotate(6 949 366)"/><rect x="817" y="-111" width="12" height="4.9" fill="#a0b8a8" opacity="0.87" transform="rotate(107 817 -111)"/><rect x="805" y="462" width="17" height="7.0" fill="#ffffff" opacity="0.64" transform="rotate(90 805 462)"/><rect x="990" y="19" width="12" height="5.0" fill="#f8c8c8" opacity="0.72" transform="rotate(160 990 19)"/><rect x="895" y="385" width="16" height="6.6" fill="#e0d8ff" opacity="0.98" transform="rotate(130 895 385)"/><rect x="416" y="212" width="14" height="5.8" fill="#e0d8ff" opacity="0.88" transform="rotate(132 416 212)"/><rect x="812" y="102" width="13" height="5.3" fill="#ffffff" opacity="0.83" transform="rotate(175 812 102)"/><rect x="1034" y="291" width="15" height="6.2" fill="#ffffff" opacity="0.72" transform="rotate(116 1034 291)"/><rect x="877" y="-112" width="12" height="4.9" fill="#c8b8e8" opacity="0.80" transform="rotate(131 877 -112)"/><rect x="1453" y="263" width="15" height="6.1" fill="#2a2440" opacity="0.83" transform="rotate(154 1453 263)"/><rect x="942" y="439" width="17" height="6.9" fill="#c8b8e8" opacity="0.87" transform="rotate(66 942 439)"/><rect x="562" y="418" width="17" height="6.8" fill="#a0b8a8" opacity="0.81" transform="rotate(27 562 418)"/><rect x="957" y="85" width="13" height="5.3" fill="#a0b8a8" opacity="0.99" transform="rotate(149 957 85)"/><rect x="880" y="60" width="13" height="5.1" fill="#ffffff" opacity="0.88" transform="rotate(48 880 60)"/><rect x="1368" y="386" width="16" height="6.6" fill="#c8b8e8" opacity="0.94" transform="rotate(96 1368 386)"/><rect x="954" y="323" width="16" height="6.3" fill="#fff4ea" opacity="0.75" transform="rotate(105 954 323)"/><rect x="1034" y="908" width="22" height="9.0" fill="#ffffff" opacity="0.85" transform="rotate(28 1034 908)"/><rect x="696" y="673" width="20" height="7.9" fill="#d8e4ff" opacity="0.71" transform="rotate(79 696 673)"/><rect x="1670" y="489" width="17" height="7.1" fill="#f8c8c8" opacity="0.64" transform="rotate(0 1670 489)"/><rect x="1277" y="355" width="16" height="6.5" fill="#2a2440" opacity="0.81" transform="rotate(82 1277 355)"/><rect x="1470" y="491" width="17" height="7.1" fill="#fff4ea" opacity="0.69" transform="rotate(4 1470 491)"/><rect x="1693" y="-14" width="12" height="4.9" fill="#ffffff" opacity="0.62" transform="rotate(63 1693 -14)"/><rect x="1018" y="157" width="14" height="5.6" fill="#f0d8d0" opacity="0.94" transform="rotate(63 1018 157)"/><rect x="1016" y="583" width="19" height="7.5" fill="#a0b8a8" opacity="0.74" transform="rotate(11 1016 583)"/><rect x="1321" y="205" width="14" height="5.8" fill="#a0b8a8" opacity="0.66" transform="rotate(179 1321 205)"/><rect x="704" y="918" width="22" height="9.1" fill="#d8e4ff" opacity="0.95" transform="rotate(85 704 918)"/><rect x="1199" y="190" width="14" height="5.7" fill="#f0d8d0" opacity="0.71" transform="rotate(45 1199 190)"/><rect x="709" y="352" width="16" height="6.5" fill="#a0b8a8" opacity="0.59" transform="rotate(128 709 352)"/><rect x="1164" y="360" width="16" height="6.5" fill="#f0d8d0" opacity="0.66" transform="rotate(144 1164 360)"/><rect x="801" y="720" width="20" height="8.2" fill="#ffffff" opacity="0.88" transform="rotate(160 801 720)"/><rect x="1112" y="-80" width="12" height="4.9" fill="#ffffff" opacity="0.99" transform="rotate(162 1112 -80)"/><rect x="1635" y="587" width="19" height="7.5" fill="#c8b8e8" opacity="0.91" transform="rotate(62 1635 587)"/><rect x="1112" y="258" width="15" height="6.0" fill="#a0b8a8" opacity="0.70" transform="rotate(94 1112 258)"/><rect x="806" y="825" width="21" height="8.6" fill="#a0b8a8" opacity="0.94" transform="rotate(25 806 825)"/><rect x="947" y="97" width="13" height="5.3" fill="#f8c8c8" opacity="0.65" transform="rotate(123 947 97)"/><rect x="474" y="466" width="17" height="7.0" fill="#d8e4ff" opacity="0.99" transform="rotate(121 474 466)"/><rect x="471" y="267" width="15" height="6.1" fill="#d8e4ff" opacity="0.70" transform="rotate(12 471 267)"/><rect x="1154" y="78" width="13" height="5.2" fill="#e0d8ff" opacity="0.63" transform="rotate(66 1154 78)"/><rect x="833" y="358" width="16" height="6.5" fill="#ffffff" opacity="0.82" transform="rotate(93 833 358)"/><rect x="455" y="251" width="15" height="6.0" fill="#d8e4ff" opacity="0.91" transform="rotate(20 455 251)"/><rect x="1342" y="592" width="19" height="7.6" fill="#f0d8d0" opacity="0.56" transform="rotate(131 1342 592)"/><rect x="349" y="536" width="18" height="7.3" fill="#f8c8c8" opacity="0.91" transform="rotate(102 349 536)"/><rect x="1070" y="328" width="16" height="6.4" fill="#2a2440" opacity="0.98" transform="rotate(135 1070 328)"/><rect x="973" y="113" width="13" height="5.4" fill="#f0e0a0" opacity="0.70" transform="rotate(69 973 113)"/><rect x="969" y="329" width="16" height="6.4" fill="#f0e0a0" opacity="0.85" transform="rotate(72 969 329)"/><rect x="983" y="994" width="23" height="9.4" fill="#2a2440" opacity="0.63" transform="rotate(20 983 994)"/><rect x="1052" y="319" width="16" height="6.3" fill="#c8b8e8" opacity="0.89" transform="rotate(133 1052 319)"/><rect x="1030" y="584" width="19" height="7.5" fill="#f0e0a0" opacity="0.71" transform="rotate(131 1030 584)"/><rect x="1072" y="531" width="18" height="7.3" fill="#a0b8a8" opacity="0.83" transform="rotate(165 1072 531)"/><rect x="979" y="237" width="15" height="6.0" fill="#a0b8a8" opacity="0.63" transform="rotate(87 979 237)"/><rect x="930" y="417" width="17" height="6.8" fill="#fff4ea" opacity="0.75" transform="rotate(136 930 417)"/><rect x="895" y="403" width="17" height="6.7" fill="#f0e0a0" opacity="0.59" transform="rotate(135 895 403)"/><rect x="728" y="391" width="16" height="6.7" fill="#2a2440" opacity="0.68" transform="rotate(71 728 391)"/><rect x="829" y="501" width="18" height="7.2" fill="#e0d8ff" opacity="0.70" transform="rotate(166 829 501)"/><rect x="1304" y="46" width="13" height="5.1" fill="#f0e0a0" opacity="0.56" transform="rotate(163 1304 46)"/><rect x="553" y="154" width="14" height="5.6" fill="#f8c8c8" opacity="0.86" transform="rotate(101 553 154)"/><rect x="763" y="515" width="18" height="7.2" fill="#fff4ea" opacity="0.78" transform="rotate(108 763 515)"/><rect x="1120" y="521" width="18" height="7.2" fill="#d8e4ff" opacity="1.00" transform="rotate(49 1120 521)"/><rect x="397" y="292" width="15" height="6.2" fill="#f8c8c8" opacity="0.87" transform="rotate(82 397 292)"/><rect x="1079" y="303" width="15" height="6.3" fill="#2a2440" opacity="0.84" transform="rotate(151 1079 303)"/><rect x="1195" y="2" width="12" height="4.9" fill="#f0d8d0" opacity="0.61" transform="rotate(178 1195 2)"/><rect x="1111" y="123" width="13" height="5.4" fill="#ffffff" opacity="0.81" transform="rotate(162 1111 123)"/><rect x="1094" y="493" width="18" height="7.1" fill="#a0b8a8" opacity="0.69" transform="rotate(124 1094 493)"/><rect x="1128" y="688" width="20" height="8.0" fill="#f8c8c8" opacity="0.86" transform="rotate(90 1128 688)"/><rect x="469" y="191" width="14" height="5.7" fill="#e0d8ff" opacity="0.61" transform="rotate(92 469 191)"/><rect x="1425" y="44" width="12" height="5.1" fill="#f8c8c8" opacity="0.82" transform="rotate(107 1425 44)"/><rect x="468" y="411" width="17" height="6.7" fill="#2a2440" opacity="0.74" transform="rotate(3 468 411)"/><rect x="462" y="494" width="18" height="7.1" fill="#f0e0a0" opacity="0.97" transform="rotate(74 462 494)"/><rect x="1117" y="331" width="16" height="6.4" fill="#f8c8c8" opacity="0.76" transform="rotate(135 1117 331)"/><rect x="1517" y="44" width="12" height="5.1" fill="#fff4ea" opacity="0.94" transform="rotate(0 1517 44)"/><rect x="1144" y="704" width="20" height="8.1" fill="#a0b8a8" opacity="0.72" transform="rotate(144 1144 704)"/><rect x="757" y="131" width="13" height="5.5" fill="#d8e4ff" opacity="0.84" transform="rotate(51 757 131)"/><rect x="467" y="314" width="16" height="6.3" fill="#e0d8ff" opacity="0.61" transform="rotate(54 467 314)"/><rect x="957" y="855" width="22" height="8.8" fill="#f8c8c8" opacity="0.78" transform="rotate(34 957 855)"/><rect x="827" y="328" width="16" height="6.4" fill="#c8b8e8" opacity="0.66" transform="rotate(74 827 328)"/><rect x="1247" y="407" width="17" height="6.7" fill="#c8b8e8" opacity="0.61" transform="rotate(113 1247 407)"/><rect x="925" y="336" width="16" height="6.4" fill="#f8c8c8" opacity="0.67" transform="rotate(155 925 336)"/><rect x="766" y="163" width="14" height="5.6" fill="#e0d8ff" opacity="0.71" transform="rotate(143 766 163)"/><rect x="531" y="257" width="15" height="6.0" fill="#f0d8d0" opacity="0.58" transform="rotate(141 531 257)"/><rect x="1471" y="108" width="13" height="5.4" fill="#f0d8d0" opacity="0.69" transform="rotate(0 1471 108)"/><rect x="694" y="877" width="22" height="8.9" fill="#d8e4ff" opacity="0.69" transform="rotate(35 694 877)"/><rect x="963" y="539" width="18" height="7.3" fill="#f0e0a0" opacity="0.78" transform="rotate(39 963 539)"/><rect x="1116" y="78" width="13" height="5.2" fill="#f0d8d0" opacity="0.71" transform="rotate(163 1116 78)"/><rect x="1168" y="803" width="21" height="8.5" fill="#e0d8ff" opacity="0.98" transform="rotate(5 1168 803)"/><rect x="1049" y="-90" width="12" height="4.9" fill="#f0e0a0" opacity="0.82" transform="rotate(138 1049 -90)"/><rect x="1127" y="271" width="15" height="6.1" fill="#e0d8ff" opacity="0.93" transform="rotate(126 1127 271)"/><rect x="814" y="59" width="13" height="5.1" fill="#e0d8ff" opacity="0.73" transform="rotate(146 814 59)"/><rect x="828" y="441" width="17" height="6.9" fill="#fff4ea" opacity="0.89" transform="rotate(94 828 441)"/><rect x="1134" y="330" width="16" height="6.4" fill="#2a2440" opacity="0.88" transform="rotate(134 1134 330)"/><rect x="1186" y="695" width="20" height="8.0" fill="#f0e0a0" opacity="0.93" transform="rotate(108 1186 695)"/><rect x="612" y="447" width="17" height="6.9" fill="#c8b8e8" opacity="0.98" transform="rotate(96 612 447)"/><rect x="1015" y="-102" width="12" height="4.9" fill="#a0b8a8" opacity="0.56" transform="rotate(75 1015 -102)"/><rect x="588" y="446" width="17" height="6.9" fill="#2a2440" opacity="0.77" transform="rotate(95 588 446)"/><rect x="989" y="728" width="20" height="8.2" fill="#e0d8ff" opacity="0.99" transform="rotate(24 989 728)"/><rect x="1172" y="-99" width="12" height="4.9" fill="#f0e0a0" opacity="0.93" transform="rotate(128 1172 -99)"/><rect x="849" y="882" width="22" height="8.9" fill="#2a2440" opacity="0.66" transform="rotate(48 849 882)"/><rect x="1332" y="193" width="14" height="5.8" fill="#a0b8a8" opacity="0.69" transform="rotate(38 1332 193)"/><rect x="927" y="601" width="19" height="7.6" fill="#e0d8ff" opacity="0.55" transform="rotate(67 927 601)"/><rect x="452" y="612" width="19" height="7.7" fill="#f0d8d0" opacity="0.88" transform="rotate(99 452 612)"/><rect x="753" y="747" width="20" height="8.3" fill="#c8b8e8" opacity="0.67" transform="rotate(10 753 747)"/><rect x="921" y="75" width="13" height="5.2" fill="#fff4ea" opacity="0.80" transform="rotate(147 921 75)"/><rect x="1239" y="465" width="17" height="7.0" fill="#d8e4ff" opacity="0.60" transform="rotate(175 1239 465)"/><rect x="1236" y="145" width="14" height="5.5" fill="#f0d8d0" opacity="0.62" transform="rotate(10 1236 145)"/><rect x="582" y="209" width="14" height="5.8" fill="#f0d8d0" opacity="0.60" transform="rotate(164 582 209)"/><rect x="947" y="349" width="16" height="6.5" fill="#a0b8a8" opacity="0.97" transform="rotate(163 947 349)"/><rect x="710" y="401" width="16" height="6.7" fill="#f8c8c8" opacity="0.72" transform="rotate(163 710 401)"/><rect x="711" y="477" width="17" height="7.0" fill="#c8b8e8" opacity="0.93" transform="rotate(24 711 477)"/><rect x="882" y="423" width="17" height="6.8" fill="#f8c8c8" opacity="0.63" transform="rotate(51 882 423)"/><rect x="1230" y="142" width="14" height="5.5" fill="#ffffff" opacity="0.99" transform="rotate(62 1230 142)"/><rect x="588" y="66" width="13" height="5.2" fill="#f0d8d0" opacity="0.63" transform="rotate(160 588 66)"/><rect x="1210" y="-105" width="12" height="4.9" fill="#2a2440" opacity="0.77" transform="rotate(75 1210 -105)"/><rect x="1216" y="188" width="14" height="5.7" fill="#2a2440" opacity="0.67" transform="rotate(50 1216 188)"/><rect x="916" y="580" width="18" height="7.5" fill="#a0b8a8" opacity="0.88" transform="rotate(55 916 580)"/><rect x="1202" y="454" width="17" height="6.9" fill="#f0d8d0" opacity="0.98" transform="rotate(52 1202 454)"/><rect x="627" y="288" width="15" height="6.2" fill="#f0d8d0" opacity="1.00" transform="rotate(61 627 288)"/><rect x="727" y="186" width="14" height="5.7" fill="#ffffff" opacity="0.75" transform="rotate(38 727 186)"/><rect x="1226" y="774" width="21" height="8.4" fill="#d8e4ff" opacity="0.79" transform="rotate(86 1226 774)"/><rect x="1081" y="35" width="12" height="5.0" fill="#2a2440" opacity="0.93" transform="rotate(173 1081 35)"/><rect x="993" y="321" width="16" height="6.3" fill="#c8b8e8" opacity="0.63" transform="rotate(21 993 321)"/><rect x="875" y="178" width="14" height="5.7" fill="#2a2440" opacity="0.63" transform="rotate(26 875 178)"/><rect x="1245" y="353" width="16" height="6.5" fill="#a0b8a8" opacity="0.68" transform="rotate(151 1245 353)"/><rect x="924" y="245" width="15" height="6.0" fill="#e0d8ff" opacity="0.87" transform="rotate(166 924 245)"/><rect x="415" y="442" width="17" height="6.9" fill="#ffffff" opacity="0.63" transform="rotate(141 415 442)"/><rect x="1141" y="602" width="19" height="7.6" fill="#c8b8e8" opacity="0.78" transform="rotate(29 1141 602)"/><rect x="707" y="254" width="15" height="6.0" fill="#ffffff" opacity="0.65" transform="rotate(56 707 254)"/><rect x="1354" y="106" width="13" height="5.4" fill="#f0e0a0" opacity="0.94" transform="rotate(149 1354 106)"/><rect x="1049" y="556" width="18" height="7.4" fill="#f8c8c8" opacity="0.68" transform="rotate(6 1049 556)"/><rect x="905" y="684" width="20" height="8.0" fill="#d8e4ff" opacity="0.97" transform="rotate(136 905 684)"/><rect x="1328" y="171" width="14" height="5.7" fill="#d8e4ff" opacity="0.73" transform="rotate(115 1328 171)"/><rect x="1224" y="804" width="21" height="8.5" fill="#ffffff" opacity="0.68" transform="rotate(170 1224 804)"/><rect x="1115" y="740" width="20" height="8.2" fill="#d8e4ff" opacity="0.88" transform="rotate(55 1115 740)"/><rect x="813" y="89" width="13" height="5.3" fill="#e0d8ff" opacity="0.62" transform="rotate(99 813 89)"/><rect x="818" y="68" width="13" height="5.2" fill="#ffffff" opacity="0.78" transform="rotate(95 818 68)"/><rect x="907" y="93" width="13" height="5.3" fill="#ffffff" opacity="0.98" transform="rotate(44 907 93)"/><rect x="724" y="626" width="19" height="7.7" fill="#d8e4ff" opacity="0.75" transform="rotate(111 724 626)"/><rect x="892" y="463" width="17" height="7.0" fill="#c8b8e8" opacity="0.72" transform="rotate(77 892 463)"/><rect x="919" y="123" width="13" height="5.4" fill="#a0b8a8" opacity="0.57" transform="rotate(140 919 123)"/><rect x="1226" y="257" width="15" height="6.0" fill="#f8c8c8" opacity="0.89" transform="rotate(74 1226 257)"/><rect x="930" y="493" width="18" height="7.1" fill="#f8c8c8" opacity="0.91" transform="rotate(92 930 493)"/><rect x="1140" y="280" width="15" height="6.1" fill="#ffffff" opacity="0.93" transform="rotate(179 1140 280)"/><rect x="993" y="384" width="16" height="6.6" fill="#c8b8e8" opacity="0.76" transform="rotate(151 993 384)"/><rect x="990" y="149" width="14" height="5.6" fill="#ffffff" opacity="0.98" transform="rotate(105 990 149)"/><rect x="1227" y="615" width="19" height="7.7" fill="#c8b8e8" opacity="0.60" transform="rotate(75 1227 615)"/><rect x="1419" y="647" width="19" height="7.8" fill="#2a2440" opacity="0.74" transform="rotate(100 1419 647)"/><rect x="1741" y="170" width="14" height="5.6" fill="#f0e0a0" opacity="0.83" transform="rotate(153 1741 170)"/><rect x="1350" y="46" width="13" height="5.1" fill="#a0b8a8" opacity="0.94" transform="rotate(14 1350 46)"/><rect x="817" y="257" width="15" height="6.0" fill="#c8b8e8" opacity="0.92" transform="rotate(148 817 257)"/><rect x="909" y="51" width="13" height="5.1" fill="#f8c8c8" opacity="0.86" transform="rotate(81 909 51)"/><rect x="1052" y="540" width="18" height="7.3" fill="#f0e0a0" opacity="0.91" transform="rotate(139 1052 540)"/><rect x="897" y="147" width="14" height="5.5" fill="#2a2440" opacity="0.86" transform="rotate(110 897 147)"/><rect x="1435" y="553" width="18" height="7.4" fill="#e0d8ff" opacity="0.85" transform="rotate(176 1435 553)"/><rect x="960" y="283" width="15" height="6.2" fill="#2a2440" opacity="0.75" transform="rotate(81 960 283)"/><rect x="1129" y="515" width="18" height="7.2" fill="#f8c8c8" opacity="0.68" transform="rotate(96 1129 515)"/><rect x="817" y="296" width="15" height="6.2" fill="#f0e0a0" opacity="0.87" transform="rotate(179 817 296)"/><rect x="1176" y="256" width="15" height="6.0" fill="#e0d8ff" opacity="0.77" transform="rotate(16 1176 256)"/><rect x="1121" y="409" width="17" height="6.7" fill="#f8c8c8" opacity="0.80" transform="rotate(6 1121 409)"/><rect x="1522" y="438" width="17" height="6.9" fill="#e0d8ff" opacity="0.67" transform="rotate(173 1522 438)"/><rect x="1402" y="26" width="12" height="5.0" fill="#f0d8d0" opacity="0.95" transform="rotate(126 1402 26)"/><rect x="553" y="461" width="17" height="7.0" fill="#f0d8d0" opacity="0.85" transform="rotate(62 553 461)"/><rect x="915" y="357" width="16" height="6.5" fill="#ffffff" opacity="0.96" transform="rotate(164 915 357)"/><rect x="300" y="414" width="17" height="6.8" fill="#ffffff" opacity="0.66" transform="rotate(68 300 414)"/><rect x="860" y="854" width="22" height="8.8" fill="#d8e4ff" opacity="0.86" transform="rotate(174 860 854)"/><rect x="461" y="86" width="13" height="5.3" fill="#f0e0a0" opacity="0.76" transform="rotate(109 461 86)"/><rect x="643" y="104" width="13" height="5.3" fill="#a0b8a8" opacity="0.94" transform="rotate(172 643 104)"/><rect x="724" y="90" width="13" height="5.3" fill="#ffffff" opacity="0.80" transform="rotate(68 724 90)"/><rect x="692" y="415" width="17" height="6.8" fill="#2a2440" opacity="0.64" transform="rotate(16 692 415)"/><rect x="546" y="158" width="14" height="5.6" fill="#2a2440" opacity="0.62" transform="rotate(62 546 158)"/><rect x="894" y="176" width="14" height="5.7" fill="#f8c8c8" opacity="0.93" transform="rotate(4 894 176)"/><rect x="1014" y="455" width="17" height="6.9" fill="#fff4ea" opacity="0.66" transform="rotate(129 1014 455)"/><rect x="1032" y="497" width="18" height="7.1" fill="#d8e4ff" opacity="0.97" transform="rotate(2 1032 497)"/><rect x="976" y="163" width="14" height="5.6" fill="#f8c8c8" opacity="0.87" transform="rotate(129 976 163)"/><rect x="531" y="463" width="17" height="7.0" fill="#c8b8e8" opacity="0.58" transform="rotate(45 531 463)"/><rect x="471" y="356" width="16" height="6.5" fill="#f0e0a0" opacity="0.75" transform="rotate(138 471 356)"/><rect x="1490" y="563" width="18" height="7.4" fill="#fff4ea" opacity="0.74" transform="rotate(45 1490 563)"/><rect x="1415" y="-93" width="12" height="4.9" fill="#2a2440" opacity="0.93" transform="rotate(102 1415 -93)"/><rect x="719" y="627" width="19" height="7.7" fill="#e0d8ff" opacity="0.70" transform="rotate(84 719 627)"/><rect x="1046" y="320" width="16" height="6.3" fill="#c8b8e8" opacity="0.60" transform="rotate(113 1046 320)"/><rect x="529" y="643" width="19" height="7.8" fill="#f0e0a0" opacity="0.76" transform="rotate(18 529 643)"/><rect x="1277" y="173" width="14" height="5.7" fill="#f8c8c8" opacity="0.95" transform="rotate(71 1277 173)"/><rect x="998" y="36" width="12" height="5.0" fill="#c8b8e8" opacity="0.98" transform="rotate(115 998 36)"/><rect x="858" y="346" width="16" height="6.4" fill="#d8e4ff" opacity="0.55" transform="rotate(65 858 346)"/><rect x="977" y="521" width="18" height="7.2" fill="#fff4ea" opacity="0.67" transform="rotate(116 977 521)"/><rect x="1496" y="615" width="19" height="7.7" fill="#e0d8ff" opacity="0.68" transform="rotate(139 1496 615)"/><rect x="1190" y="324" width="16" height="6.4" fill="#ffffff" opacity="0.95" transform="rotate(72 1190 324)"/><rect x="1096" y="112" width="13" height="5.4" fill="#2a2440" opacity="0.72" transform="rotate(151 1096 112)"/><rect x="862" y="-73" width="12" height="4.9" fill="#f0d8d0" opacity="0.84" transform="rotate(163 862 -73)"/><rect x="1104" y="325" width="16" height="6.4" fill="#f8c8c8" opacity="0.99" transform="rotate(168 1104 325)"/><rect x="337" y="508" width="18" height="7.2" fill="#f8c8c8" opacity="0.93" transform="rotate(47 337 508)"/><rect x="585" y="342" width="16" height="6.4" fill="#e0d8ff" opacity="0.84" transform="rotate(117 585 342)"/><rect x="1607" y="617" width="19" height="7.7" fill="#f8c8c8" opacity="0.76" transform="rotate(117 1607 617)"/><rect x="1013" y="-108" width="12" height="4.9" fill="#a0b8a8" opacity="0.82" transform="rotate(116 1013 -108)"/><rect x="698" y="631" width="19" height="7.7" fill="#e0d8ff" opacity="0.64" transform="rotate(54 698 631)"/><rect x="457" y="375" width="16" height="6.6" fill="#f0e0a0" opacity="0.69" transform="rotate(47 457 375)"/><rect x="1384" y="324" width="16" height="6.3" fill="#f0e0a0" opacity="0.71" transform="rotate(179 1384 324)"/><rect x="1025" y="562" width="18" height="7.4" fill="#c8b8e8" opacity="0.78" transform="rotate(43 1025 562)"/><rect x="981" y="44" width="12" height="5.1" fill="#fff4ea" opacity="0.74" transform="rotate(59 981 44)"/><rect x="946" y="245" width="15" height="6.0" fill="#a0b8a8" opacity="0.73" transform="rotate(16 946 245)"/><rect x="915" y="237" width="15" height="6.0" fill="#ffffff" opacity="0.70" transform="rotate(125 915 237)"/><rect x="1628" y="508" width="18" height="7.2" fill="#2a2440" opacity="0.90" transform="rotate(93 1628 508)"/><rect x="1010" y="366" width="16" height="6.5" fill="#f8c8c8" opacity="0.67" transform="rotate(61 1010 366)"/><rect x="982" y="330" width="16" height="6.4" fill="#fff4ea" opacity="0.90" transform="rotate(101 982 330)"/><rect x="1029" y="742" width="20" height="8.3" fill="#fff4ea" opacity="0.83" transform="rotate(54 1029 742)"/><rect x="939" y="-33" width="12" height="4.9" fill="#c8b8e8" opacity="0.69" transform="rotate(141 939 -33)"/><rect x="1167" y="374" width="16" height="6.6" fill="#f8c8c8" opacity="0.78" transform="rotate(144 1167 374)"/><rect x="1414" y="445" width="17" height="6.9" fill="#e0d8ff" opacity="0.58" transform="rotate(107 1414 445)"/><rect x="1144" y="300" width="15" height="6.2" fill="#2a2440" opacity="0.80" transform="rotate(127 1144 300)"/><rect x="1153" y="325" width="16" height="6.4" fill="#2a2440" opacity="0.81" transform="rotate(133 1153 325)"/><rect x="1081" y="160" width="14" height="5.6" fill="#fff4ea" opacity="0.83" transform="rotate(172 1081 160)"/><rect x="939" y="141" width="14" height="5.5" fill="#f8c8c8" opacity="0.74" transform="rotate(177 939 141)"/><rect x="1073" y="23" width="12" height="5.0" fill="#a0b8a8" opacity="0.66" transform="rotate(177 1073 23)"/><rect x="1280" y="522" width="18" height="7.2" fill="#f0d8d0" opacity="0.72" transform="rotate(54 1280 522)"/><rect x="955" y="236" width="15" height="5.9" fill="#ffffff" opacity="0.99" transform="rotate(61 955 236)"/><rect x="938" y="52" width="13" height="5.1" fill="#f0d8d0" opacity="0.63" transform="rotate(161 938 52)"/><rect x="852" y="383" width="16" height="6.6" fill="#a0b8a8" opacity="0.84" transform="rotate(83 852 383)"/><rect x="1412" y="268" width="15" height="6.1" fill="#d8e4ff" opacity="0.75" transform="rotate(38 1412 268)"/><rect x="1554" y="518" width="18" height="7.2" fill="#2a2440" opacity="0.93" transform="rotate(173 1554 518)"/><rect x="487" y="314" width="16" height="6.3" fill="#e0d8ff" opacity="0.57" transform="rotate(18 487 314)"/><rect x="1099" y="312" width="15" height="6.3" fill="#f8c8c8" opacity="0.74" transform="rotate(21 1099 312)"/><rect x="765" y="902" width="22" height="9.0" fill="#c8b8e8" opacity="0.79" transform="rotate(127 765 902)"/><rect x="409" y="143" width="14" height="5.5" fill="#f8c8c8" opacity="0.57" transform="rotate(136 409 143)"/><rect x="931" y="626" width="19" height="7.7" fill="#ffffff" opacity="0.89" transform="rotate(151 931 626)"/><rect x="847" y="815" width="21" height="8.6" fill="#ffffff" opacity="0.71" transform="rotate(109 847 815)"/><rect x="1310" y="557" width="18" height="7.4" fill="#ffffff" opacity="0.99" transform="rotate(145 1310 557)"/><rect x="1049" y="294" width="15" height="6.2" fill="#a0b8a8" opacity="0.86" transform="rotate(54 1049 294)"/><rect x="661" y="466" width="17" height="7.0" fill="#2a2440" opacity="0.78" transform="rotate(73 661 466)"/><rect x="1620" y="116" width="13" height="5.4" fill="#fff4ea" opacity="0.76" transform="rotate(31 1620 116)"/><rect x="1671" y="584" width="19" height="7.5" fill="#d8e4ff" opacity="0.71" transform="rotate(76 1671 584)"/><rect x="604" y="471" width="17" height="7.0" fill="#2a2440" opacity="0.99" transform="rotate(49 604 471)"/><rect x="957" y="42" width="12" height="5.1" fill="#c8b8e8" opacity="0.58" transform="rotate(36 957 42)"/><rect x="947" y="399" width="16" height="6.7" fill="#2a2440" opacity="0.67" transform="rotate(40 947 399)"/><rect x="759" y="475" width="17" height="7.0" fill="#d8e4ff" opacity="0.60" transform="rotate(145 759 475)"/><rect x="994" y="378" width="16" height="6.6" fill="#c8b8e8" opacity="0.87" transform="rotate(96 994 378)"/><rect x="644" y="537" width="18" height="7.3" fill="#ffffff" opacity="0.90" transform="rotate(174 644 537)"/><rect x="911" y="611" width="19" height="7.7" fill="#f8c8c8" opacity="0.67" transform="rotate(89 911 611)"/><rect x="646" y="474" width="17" height="7.0" fill="#f8c8c8" opacity="0.89" transform="rotate(1 646 474)"/><rect x="1142" y="-96" width="12" height="4.9" fill="#f0e0a0" opacity="0.64" transform="rotate(76 1142 -96)"/><rect x="794" y="56" width="13" height="5.1" fill="#f0e0a0" opacity="0.67" transform="rotate(15 794 56)"/><rect x="1443" y="-43" width="12" height="4.9" fill="#a0b8a8" opacity="0.67" transform="rotate(96 1443 -43)"/><rect x="752" y="541" width="18" height="7.3" fill="#c8b8e8" opacity="0.65" transform="rotate(104 752 541)"/><rect x="1259" y="804" width="21" height="8.5" fill="#f0e0a0" opacity="0.79" transform="rotate(34 1259 804)"/><rect x="1099" y="666" width="19" height="7.9" fill="#f0d8d0" opacity="0.81" transform="rotate(96 1099 666)"/><rect x="485" y="288" width="15" height="6.2" fill="#e0d8ff" opacity="0.99" transform="rotate(37 485 288)"/><rect x="1364" y="177" width="14" height="5.7" fill="#d8e4ff" opacity="0.56" transform="rotate(36 1364 177)"/><rect x="788" y="137" width="14" height="5.5" fill="#f0d8d0" opacity="0.93" transform="rotate(82 788 137)"/><rect x="1537" y="0" width="12" height="4.9" fill="#2a2440" opacity="0.67" transform="rotate(99 1537 0)"/><rect x="1206" y="277" width="15" height="6.1" fill="#a0b8a8" opacity="1.00" transform="rotate(18 1206 277)"/><rect x="1116" y="-4" width="12" height="4.9" fill="#a0b8a8" opacity="0.62" transform="rotate(61 1116 -4)"/><rect x="1150" y="683" width="20" height="8.0" fill="#e0d8ff" opacity="0.94" transform="rotate(84 1150 683)"/><rect x="852" y="62" width="13" height="5.2" fill="#f8c8c8" opacity="0.55" transform="rotate(12 852 62)"/><rect x="864" y="563" width="18" height="7.4" fill="#e0d8ff" opacity="0.58" transform="rotate(159 864 563)"/><rect x="1398" y="6" width="12" height="4.9" fill="#d8e4ff" opacity="0.61" transform="rotate(74 1398 6)"/><rect x="1772" y="373" width="16" height="6.6" fill="#2a2440" opacity="0.68" transform="rotate(101 1772 373)"/><rect x="707" y="601" width="19" height="7.6" fill="#e0d8ff" opacity="0.99" transform="rotate(104 707 601)"/><rect x="1327" y="-31" width="12" height="4.9" fill="#c8b8e8" opacity="0.65" transform="rotate(160 1327 -31)"/><rect x="997" y="687" width="20" height="8.0" fill="#a0b8a8" opacity="0.65" transform="rotate(21 997 687)"/><rect x="958" y="274" width="15" height="6.1" fill="#d8e4ff" opacity="0.90" transform="rotate(88 958 274)"/><rect x="1463" y="135" width="14" height="5.5" fill="#fff4ea" opacity="0.97" transform="rotate(121 1463 135)"/><rect x="1116" y="589" width="19" height="7.6" fill="#f0d8d0" opacity="0.66" transform="rotate(117 1116 589)"/><rect x="1326" y="423" width="17" height="6.8" fill="#a0b8a8" opacity="0.65" transform="rotate(174 1326 423)"/><rect x="839" y="515" width="18" height="7.2" fill="#ffffff" opacity="0.65" transform="rotate(20 839 515)"/><rect x="1276" y="95" width="13" height="5.3" fill="#f0e0a0" opacity="0.82" transform="rotate(4 1276 95)"/><rect x="994" y="522" width="18" height="7.2" fill="#a0b8a8" opacity="0.55" transform="rotate(9 994 522)"/><rect x="770" y="171" width="14" height="5.7" fill="#ffffff" opacity="0.90" transform="rotate(97 770 171)"/><rect x="1460" y="544" width="18" height="7.4" fill="#f0e0a0" opacity="0.64" transform="rotate(52 1460 544)"/><rect x="639" y="358" width="16" height="6.5" fill="#c8b8e8" opacity="0.65" transform="rotate(102 639 358)"/><rect x="1134" y="159" width="14" height="5.6" fill="#2a2440" opacity="0.76" transform="rotate(38 1134 159)"/><rect x="1180" y="468" width="17" height="7.0" fill="#c8b8e8" opacity="0.93" transform="rotate(81 1180 468)"/><rect x="826" y="-120" width="12" height="4.9" fill="#ffffff" opacity="0.67" transform="rotate(20 826 -120)"/><rect x="419" y="26" width="12" height="5.0" fill="#d8e4ff" opacity="0.84" transform="rotate(157 419 26)"/><rect x="1228" y="23" width="12" height="5.0" fill="#a0b8a8" opacity="0.63" transform="rotate(60 1228 23)"/><rect x="1119" y="194" width="14" height="5.8" fill="#ffffff" opacity="0.76" transform="rotate(119 1119 194)"/><rect x="1003" y="-32" width="12" height="4.9" fill="#f0d8d0" opacity="0.60" transform="rotate(69 1003 -32)"/><rect x="1212" y="225" width="15" height="5.9" fill="#d8e4ff" opacity="0.65" transform="rotate(139 1212 225)"/><rect x="917" y="186" width="14" height="5.7" fill="#f0d8d0" opacity="0.56" transform="rotate(95 917 186)"/><rect x="754" y="279" width="15" height="6.1" fill="#f0e0a0" opacity="0.99" transform="rotate(10 754 279)"/><rect x="790" y="817" width="21" height="8.6" fill="#ffffff" opacity="0.57" transform="rotate(105 790 817)"/><rect x="686" y="-102" width="12" height="4.9" fill="#e0d8ff" opacity="0.80" transform="rotate(28 686 -102)"/><rect x="1259" y="415" width="17" height="6.8" fill="#e0d8ff" opacity="0.82" transform="rotate(85 1259 415)"/><rect x="1274" y="131" width="13" height="5.5" fill="#ffffff" opacity="0.71" transform="rotate(24 1274 131)"/><rect x="334" y="424" width="17" height="6.8" fill="#ffffff" opacity="0.68" transform="rotate(123 334 424)"/><rect x="1113" y="169" width="14" height="5.6" fill="#d8e4ff" opacity="0.69" transform="rotate(47 1113 169)"/><rect x="691" y="474" width="17" height="7.0" fill="#e0d8ff" opacity="0.99" transform="rotate(15 691 474)"/><rect x="408" y="393" width="16" height="6.7" fill="#ffffff" opacity="0.98" transform="rotate(8 408 393)"/><rect x="1133" y="152" width="14" height="5.6" fill="#fff4ea" opacity="0.73" transform="rotate(91 1133 152)"/><rect x="1400" y="86" width="13" height="5.3" fill="#e0d8ff" opacity="0.76" transform="rotate(112 1400 86)"/><rect x="1060" y="323" width="16" height="6.3" fill="#e0d8ff" opacity="0.65" transform="rotate(79 1060 323)"/><rect x="800" y="58" width="13" height="5.1" fill="#d8e4ff" opacity="0.93" transform="rotate(109 800 58)"/><rect x="508" y="72" width="13" height="5.2" fill="#e0d8ff" opacity="0.56" transform="rotate(109 508 72)"/><rect x="1251" y="324" width="16" height="6.3" fill="#e0d8ff" opacity="0.71" transform="rotate(56 1251 324)"/><rect x="888" y="302" width="15" height="6.2" fill="#d8e4ff" opacity="0.95" transform="rotate(86 888 302)"/><rect x="1422" y="133" width="13" height="5.5" fill="#d8e4ff" opacity="0.86" transform="rotate(34 1422 133)"/><rect x="769" y="183" width="14" height="5.7" fill="#f0e0a0" opacity="0.87" transform="rotate(178 769 183)"/><rect x="1087" y="490" width="17" height="7.1" fill="#d8e4ff" opacity="0.87" transform="rotate(162 1087 490)"/><rect x="1058" y="137" width="14" height="5.5" fill="#a0b8a8" opacity="0.99" transform="rotate(135 1058 137)"/><rect x="1028" y="364" width="16" height="6.5" fill="#ffffff" opacity="0.90" transform="rotate(104 1028 364)"/><rect x="1213" y="135" width="14" height="5.5" fill="#f0e0a0" opacity="0.81" transform="rotate(155 1213 135)"/><rect x="1202" y="91" width="13" height="5.3" fill="#f0d8d0" opacity="0.69" transform="rotate(149 1202 91)"/><rect x="1161" y="852" width="22" height="8.8" fill="#fff4ea" opacity="0.61" transform="rotate(42 1161 852)"/><rect x="826" y="786" width="21" height="8.5" fill="#f8c8c8" opacity="0.92" transform="rotate(158 826 786)"/><rect x="1197" y="782" width="21" height="8.4" fill="#fff4ea" opacity="0.79" transform="rotate(4 1197 782)"/><rect x="1068" y="8" width="12" height="4.9" fill="#f0e0a0" opacity="0.75" transform="rotate(23 1068 8)"/><rect x="592" y="231" width="15" height="5.9" fill="#f0e0a0" opacity="0.97" transform="rotate(110 592 231)"/><rect x="461" y="307" width="15" height="6.3" fill="#f0d8d0" opacity="0.83" transform="rotate(86 461 307)"/><rect x="1061" y="307" width="15" height="6.3" fill="#c8b8e8" opacity="0.57" transform="rotate(158 1061 307)"/><rect x="1188" y="866" width="22" height="8.8" fill="#ffffff" opacity="0.76" transform="rotate(161 1188 866)"/><rect x="389" y="379" width="16" height="6.6" fill="#c8b8e8" opacity="0.74" transform="rotate(175 389 379)"/><rect x="958" y="404" width="17" height="6.7" fill="#f8c8c8" opacity="0.73" transform="rotate(53 958 404)"/><rect x="701" y="737" width="20" height="8.2" fill="#a0b8a8" opacity="0.68" transform="rotate(98 701 737)"/><rect x="945" y="868" width="22" height="8.8" fill="#f0d8d0" opacity="0.76" transform="rotate(104 945 868)"/><rect x="488" y="596" width="19" height="7.6" fill="#f0e0a0" opacity="0.92" transform="rotate(33 488 596)"/><rect x="1213" y="33" width="12" height="5.0" fill="#2a2440" opacity="0.93" transform="rotate(17 1213 33)"/><rect x="1333" y="86" width="13" height="5.3" fill="#d8e4ff" opacity="0.81" transform="rotate(12 1333 86)"/><rect x="552" y="-76" width="12" height="4.9" fill="#a0b8a8" opacity="0.62" transform="rotate(7 552 -76)"/><rect x="827" y="-57" width="12" height="4.9" fill="#e0d8ff" opacity="0.84" transform="rotate(40 827 -57)"/><rect x="586" y="307" width="15" height="6.3" fill="#e0d8ff" opacity="0.93" transform="rotate(162 586 307)"/><rect x="862" y="50" width="13" height="5.1" fill="#ffffff" opacity="0.56" transform="rotate(41 862 50)"/><rect x="361" y="465" width="17" height="7.0" fill="#e0d8ff" opacity="0.87" transform="rotate(24 361 465)"/><rect x="1375" y="536" width="18" height="7.3" fill="#f0e0a0" opacity="0.85" transform="rotate(66 1375 536)"/><rect x="1052" y="576" width="18" height="7.5" fill="#fff4ea" opacity="0.84" transform="rotate(145 1052 576)"/><rect x="701" y="778" width="21" height="8.4" fill="#c8b8e8" opacity="0.92" transform="rotate(161 701 778)"/><rect x="1002" y="509" width="18" height="7.2" fill="#2a2440" opacity="0.79" transform="rotate(37 1002 509)"/><rect x="1319" y="295" width="15" height="6.2" fill="#f0e0a0" opacity="0.98" transform="rotate(42 1319 295)"/><rect x="1138" y="291" width="15" height="6.2" fill="#c8b8e8" opacity="0.93" transform="rotate(107 1138 291)"/><rect x="1239" y="80" width="13" height="5.2" fill="#2a2440" opacity="0.73" transform="rotate(32 1239 80)"/><rect x="578" y="441" width="17" height="6.9" fill="#f0e0a0" opacity="0.78" transform="rotate(21 578 441)"/><rect x="1362" y="533" width="18" height="7.3" fill="#f8c8c8" opacity="0.73" transform="rotate(122 1362 533)"/><rect x="761" y="229" width="15" height="5.9" fill="#ffffff" opacity="0.80" transform="rotate(79 761 229)"/><rect x="948" y="477" width="17" height="7.0" fill="#ffffff" opacity="0.84" transform="rotate(116 948 477)"/><rect x="1599" y="410" width="17" height="6.7" fill="#2a2440" opacity="0.63" transform="rotate(4 1599 410)"/><rect x="443" y="278" width="15" height="6.1" fill="#a0b8a8" opacity="0.76" transform="rotate(98 443 278)"/><rect x="1149" y="-43" width="12" height="4.9" fill="#d8e4ff" opacity="0.96" transform="rotate(91 1149 -43)"/><rect x="810" y="833" width="21" height="8.7" fill="#d8e4ff" opacity="0.76" transform="rotate(16 810 833)"/><rect x="1368" y="65" width="13" height="5.2" fill="#d8e4ff" opacity="0.68" transform="rotate(128 1368 65)"/><rect x="1138" y="228" width="15" height="5.9" fill="#f0e0a0" opacity="0.95" transform="rotate(98 1138 228)"/><rect x="1260" y="256" width="15" height="6.0" fill="#ffffff" opacity="0.77" transform="rotate(133 1260 256)"/><rect x="900" y="510" width="18" height="7.2" fill="#d8e4ff" opacity="0.69" transform="rotate(42 900 510)"/><rect x="1085" y="103" width="13" height="5.3" fill="#2a2440" opacity="0.83" transform="rotate(20 1085 103)"/><rect x="782" y="263" width="15" height="6.1" fill="#c8b8e8" opacity="0.61" transform="rotate(52 782 263)"/><rect x="660" y="74" width="13" height="5.2" fill="#2a2440" opacity="0.67" transform="rotate(54 660 74)"/><rect x="861" y="90" width="13" height="5.3" fill="#f0e0a0" opacity="0.59" transform="rotate(84 861 90)"/><rect x="1003" y="511" width="18" height="7.2" fill="#a0b8a8" opacity="0.73" transform="rotate(163 1003 511)"/><rect x="1078" y="255" width="15" height="6.0" fill="#f0d8d0" opacity="0.96" transform="rotate(137 1078 255)"/><rect x="1037" y="147" width="14" height="5.5" fill="#f0d8d0" opacity="0.59" transform="rotate(58 1037 147)"/><rect x="1165" y="92" width="13" height="5.3" fill="#d8e4ff" opacity="0.61" transform="rotate(162 1165 92)"/><rect x="510" y="10" width="12" height="4.9" fill="#a0b8a8" opacity="0.90" transform="rotate(128 510 10)"/><rect x="910" y="-85" width="12" height="4.9" fill="#ffffff" opacity="0.87" transform="rotate(145 910 -85)"/><rect x="1405" y="54" width="13" height="5.1" fill="#f0e0a0" opacity="0.72" transform="rotate(54 1405 54)"/><rect x="721" y="-84" width="12" height="4.9" fill="#e0d8ff" opacity="0.70" transform="rotate(146 721 -84)"/><rect x="1215" y="593" width="19" height="7.6" fill="#f8c8c8" opacity="0.68" transform="rotate(22 1215 593)"/><rect x="1023" y="520" width="18" height="7.2" fill="#2a2440" opacity="0.58" transform="rotate(5 1023 520)"/><rect x="1616" y="-15" width="12" height="4.9" fill="#e0d8ff" opacity="0.66" transform="rotate(100 1616 -15)"/><rect x="835" y="193" width="14" height="5.8" fill="#e0d8ff" opacity="0.96" transform="rotate(100 835 193)"/><rect x="695" y="-81" width="12" height="4.9" fill="#d8e4ff" opacity="0.90" transform="rotate(95 695 -81)"/><rect x="1264" y="850" width="22" height="8.7" fill="#2a2440" opacity="0.59" transform="rotate(113 1264 850)"/><rect x="796" y="324" width="16" height="6.3" fill="#fff4ea" opacity="0.62" transform="rotate(154 796 324)"/><rect x="517" y="90" width="13" height="5.3" fill="#2a2440" opacity="0.81" transform="rotate(82 517 90)"/><rect x="851" y="557" width="18" height="7.4" fill="#f8c8c8" opacity="0.71" transform="rotate(166 851 557)"/><rect x="1421" y="184" width="14" height="5.7" fill="#fff4ea" opacity="0.79" transform="rotate(165 1421 184)"/><rect x="1154" y="289" width="15" height="6.2" fill="#f0d8d0" opacity="0.96" transform="rotate(56 1154 289)"/><rect x="1052" y="105" width="13" height="5.4" fill="#f0e0a0" opacity="0.80" transform="rotate(63 1052 105)"/><rect x="1733" y="75" width="13" height="5.2" fill="#a0b8a8" opacity="0.74" transform="rotate(76 1733 75)"/><rect x="1020" y="241" width="15" height="6.0" fill="#f0d8d0" opacity="0.76" transform="rotate(85 1020 241)"/><rect x="592" y="352" width="16" height="6.5" fill="#d8e4ff" opacity="0.92" transform="rotate(67 592 352)"/><rect x="1001" y="455" width="17" height="6.9" fill="#fff4ea" opacity="0.87" transform="rotate(169 1001 455)"/><rect x="791" y="490" width="17" height="7.1" fill="#a0b8a8" opacity="0.90" transform="rotate(110 791 490)"/><rect x="867" y="671" width="20" height="7.9" fill="#a0b8a8" opacity="0.62" transform="rotate(115 867 671)"/><rect x="1223" y="213" width="14" height="5.8" fill="#c8b8e8" opacity="0.97" transform="rotate(60 1223 213)"/><rect x="743" y="715" width="20" height="8.1" fill="#f0e0a0" opacity="0.63" transform="rotate(105 743 715)"/><rect x="1077" y="164" width="14" height="5.6" fill="#fff4ea" opacity="0.92" transform="rotate(35 1077 164)"/><rect x="1576" y="-108" width="12" height="4.9" fill="#f0d8d0" opacity="0.64" transform="rotate(132 1576 -108)"/><rect x="1279" y="837" width="21" height="8.7" fill="#f0e0a0" opacity="0.72" transform="rotate(135 1279 837)"/><rect x="914" y="308" width="15" height="6.3" fill="#f0d8d0" opacity="0.76" transform="rotate(29 914 308)"/><rect x="959" y="-60" width="12" height="4.9" fill="#f0e0a0" opacity="0.73" transform="rotate(36 959 -60)"/><rect x="671" y="576" width="18" height="7.5" fill="#c8b8e8" opacity="0.70" transform="rotate(15 671 576)"/><rect x="1245" y="884" width="22" height="8.9" fill="#d8e4ff" opacity="0.61" transform="rotate(25 1245 884)"/><rect x="572" y="279" width="15" height="6.1" fill="#f8c8c8" opacity="0.66" transform="rotate(80 572 279)"/><rect x="1059" y="241" width="15" height="6.0" fill="#e0d8ff" opacity="0.88" transform="rotate(96 1059 241)"/><rect x="449" y="76" width="13" height="5.2" fill="#f8c8c8" opacity="0.98" transform="rotate(27 449 76)"/><rect x="845" y="264" width="15" height="6.1" fill="#c8b8e8" opacity="0.95" transform="rotate(169 845 264)"/><rect x="1500" y="276" width="15" height="6.1" fill="#2a2440" opacity="0.65" transform="rotate(159 1500 276)"/><rect x="796" y="316" width="16" height="6.3" fill="#e0d8ff" opacity="0.72" transform="rotate(6 796 316)"/><rect x="1207" y="49" width="13" height="5.1" fill="#c8b8e8" opacity="0.88" transform="rotate(171 1207 49)"/><rect x="1192" y="298" width="15" height="6.2" fill="#ffffff" opacity="0.99" transform="rotate(127 1192 298)"/><rect x="935" y="581" width="19" height="7.5" fill="#f8c8c8" opacity="0.94" transform="rotate(89 935 581)"/><rect x="1369" y="560" width="18" height="7.4" fill="#e0d8ff" opacity="0.62" transform="rotate(89 1369 560)"/><rect x="676" y="-113" width="12" height="4.9" fill="#e0d8ff" opacity="0.60" transform="rotate(115 676 -113)"/><rect x="1288" y="386" width="16" height="6.6" fill="#f0d8d0" opacity="0.86" transform="rotate(30 1288 386)"/><rect x="1260" y="187" width="14" height="5.7" fill="#a0b8a8" opacity="0.75" transform="rotate(80 1260 187)"/><rect x="1352" y="147" width="14" height="5.5" fill="#c8b8e8" opacity="0.62" transform="rotate(171 1352 147)"/><rect x="903" y="548" width="18" height="7.4" fill="#e0d8ff" opacity="0.73" transform="rotate(57 903 548)"/><rect x="1323" y="287" width="15" height="6.2" fill="#2a2440" opacity="0.77" transform="rotate(31 1323 287)"/><rect x="917" y="343" width="16" height="6.4" fill="#f0e0a0" opacity="0.64" transform="rotate(132 917 343)"/><rect x="835" y="750" width="20" height="8.3" fill="#d8e4ff" opacity="0.96" transform="rotate(65 835 750)"/><rect x="1035" y="587" width="19" height="7.5" fill="#d8e4ff" opacity="0.57" transform="rotate(41 1035 587)"/><rect x="724" y="224" width="15" height="5.9" fill="#a0b8a8" opacity="0.88" transform="rotate(112 724 224)"/><rect x="924" y="449" width="17" height="6.9" fill="#ffffff" opacity="0.85" transform="rotate(156 924 449)"/><rect x="923" y="698" width="20" height="8.1" fill="#fff4ea" opacity="0.63" transform="rotate(160 923 698)"/><rect x="1075" y="484" width="17" height="7.1" fill="#2a2440" opacity="0.98" transform="rotate(133 1075 484)"/><rect x="1063" y="322" width="16" height="6.3" fill="#ffffff" opacity="0.76" transform="rotate(81 1063 322)"/><rect x="784" y="14" width="12" height="4.9" fill="#a0b8a8" opacity="0.94" transform="rotate(164 784 14)"/><rect x="812" y="322" width="16" height="6.3" fill="#2a2440" opacity="0.56" transform="rotate(136 812 322)"/><rect x="1209" y="244" width="15" height="6.0" fill="#c8b8e8" opacity="0.87" transform="rotate(44 1209 244)"/><rect x="987" y="847" width="21" height="8.7" fill="#2a2440" opacity="0.88" transform="rotate(173 987 847)"/><rect x="1072" y="396" width="16" height="6.7" fill="#a0b8a8" opacity="0.76" transform="rotate(10 1072 396)"/><rect x="1255" y="896" width="22" height="9.0" fill="#d8e4ff" opacity="0.95" transform="rotate(115 1255 896)"/><rect x="1332" y="280" width="15" height="6.1" fill="#f0d8d0" opacity="0.81" transform="rotate(169 1332 280)"/><rect x="1024" y="622" width="19" height="7.7" fill="#2a2440" opacity="0.74" transform="rotate(44 1024 622)"/><rect x="530" y="507" width="18" height="7.2" fill="#d8e4ff" opacity="0.77" transform="rotate(10 530 507)"/><rect x="1187" y="123" width="13" height="5.4" fill="#f8c8c8" opacity="0.62" transform="rotate(8 1187 123)"/><rect x="1306" y="232" width="15" height="5.9" fill="#e0d8ff" opacity="0.76" transform="rotate(35 1306 232)"/><rect x="986" y="467" width="17" height="7.0" fill="#fff4ea" opacity="0.69" transform="rotate(101 986 467)"/><rect x="406" y="390" width="16" height="6.6" fill="#a0b8a8" opacity="0.55" transform="rotate(62 406 390)"/><rect x="1120" y="58" width="13" height="5.1" fill="#fff4ea" opacity="0.56" transform="rotate(78 1120 58)"/><rect x="1021" y="805" width="21" height="8.5" fill="#ffffff" opacity="0.94" transform="rotate(125 1021 805)"/><rect x="900" y="381" width="16" height="6.6" fill="#fff4ea" opacity="0.60" transform="rotate(151 900 381)"/><rect x="401" y="168" width="14" height="5.6" fill="#fff4ea" opacity="0.73" transform="rotate(143 401 168)"/><rect x="951" y="200" width="14" height="5.8" fill="#d8e4ff" opacity="0.62" transform="rotate(175 951 200)"/><rect x="1225" y="66" width="13" height="5.2" fill="#d8e4ff" opacity="0.79" transform="rotate(144 1225 66)"/><rect x="1071" y="154" width="14" height="5.6" fill="#a0b8a8" opacity="0.81" transform="rotate(15 1071 154)"/><rect x="1341" y="152" width="14" height="5.6" fill="#e0d8ff" opacity="0.73" transform="rotate(179 1341 152)"/><rect x="1259" y="166" width="14" height="5.6" fill="#ffffff" opacity="0.70" transform="rotate(178 1259 166)"/><rect x="865" y="928" width="22" height="9.1" fill="#fff4ea" opacity="0.93" transform="rotate(22 865 928)"/><rect x="897" y="662" width="19" height="7.9" fill="#d8e4ff" opacity="0.92" transform="rotate(8 897 662)"/><rect x="1354" y="420" width="17" height="6.8" fill="#c8b8e8" opacity="0.67" transform="rotate(20 1354 420)"/><rect x="788" y="294" width="15" height="6.2" fill="#f8c8c8" opacity="0.58" transform="rotate(176 788 294)"/><rect x="813" y="224" width="15" height="5.9" fill="#f0e0a0" opacity="0.76" transform="rotate(62 813 224)"/><rect x="862" y="769" width="21" height="8.4" fill="#f0e0a0" opacity="0.65" transform="rotate(116 862 769)"/><rect x="646" y="198" width="14" height="5.8" fill="#a0b8a8" opacity="0.97" transform="rotate(12 646 198)"/><rect x="328" y="13" width="12" height="4.9" fill="#f8c8c8" opacity="0.97" transform="rotate(81 328 13)"/><rect x="944" y="159" width="14" height="5.6" fill="#e0d8ff" opacity="0.68" transform="rotate(55 944 159)"/><rect x="1131" y="396" width="16" height="6.7" fill="#fff4ea" opacity="0.80" transform="rotate(146 1131 396)"/><rect x="752" y="311" width="15" height="6.3" fill="#e0d8ff" opacity="0.86" transform="rotate(6 752 311)"/><rect x="1012" y="113" width="13" height="5.4" fill="#ffffff" opacity="0.87" transform="rotate(7 1012 113)"/><rect x="533" y="194" width="14" height="5.8" fill="#fff4ea" opacity="0.89" transform="rotate(1 533 194)"/><rect x="996" y="561" width="18" height="7.4" fill="#e0d8ff" opacity="0.80" transform="rotate(59 996 561)"/><rect x="1005" y="417" width="17" height="6.8" fill="#2a2440" opacity="0.80" transform="rotate(40 1005 417)"/><rect x="320" y="620" width="19" height="7.7" fill="#a0b8a8" opacity="0.95" transform="rotate(92 320 620)"/><rect x="991" y="713" width="20" height="8.1" fill="#fff4ea" opacity="0.99" transform="rotate(51 991 713)"/><rect x="545" y="618" width="19" height="7.7" fill="#d8e4ff" opacity="0.73" transform="rotate(129 545 618)"/><rect x="1244" y="106" width="13" height="5.4" fill="#fff4ea" opacity="0.81" transform="rotate(140 1244 106)"/><rect x="691" y="78" width="13" height="5.2" fill="#f8c8c8" opacity="0.89" transform="rotate(63 691 78)"/><rect x="675" y="-13" width="12" height="4.9" fill="#f0d8d0" opacity="0.90" transform="rotate(172 675 -13)"/><rect x="1064" y="254" width="15" height="6.0" fill="#2a2440" opacity="0.61" transform="rotate(77 1064 254)"/><rect x="1275" y="809" width="21" height="8.6" fill="#f0d8d0" opacity="0.59" transform="rotate(45 1275 809)"/><rect x="1617" y="311" width="15" height="6.3" fill="#d8e4ff" opacity="0.88" transform="rotate(45 1617 311)"/><rect x="1000" y="933" width="22" height="9.1" fill="#ffffff" opacity="0.94" transform="rotate(134 1000 933)"/><rect x="905" y="618" width="19" height="7.7" fill="#f8c8c8" opacity="0.92" transform="rotate(142 905 618)"/><rect x="694" y="497" width="18" height="7.1" fill="#ffffff" opacity="0.95" transform="rotate(113 694 497)"/><rect x="969" y="108" width="13" height="5.4" fill="#ffffff" opacity="0.93" transform="rotate(133 969 108)"/><rect x="1544" y="289" width="15" height="6.2" fill="#f8c8c8" opacity="0.63" transform="rotate(130 1544 289)"/><rect x="804" y="472" width="17" height="7.0" fill="#f0d8d0" opacity="0.72" transform="rotate(93 804 472)"/><rect x="1071" y="119" width="13" height="5.4" fill="#e0d8ff" opacity="0.92" transform="rotate(50 1071 119)"/><rect x="900" y="258" width="15" height="6.1" fill="#f0d8d0" opacity="0.94" transform="rotate(33 900 258)"/><rect x="768" y="25" width="12" height="5.0" fill="#c8b8e8" opacity="0.77" transform="rotate(75 768 25)"/><rect x="1432" y="336" width="16" height="6.4" fill="#2a2440" opacity="0.86" transform="rotate(151 1432 336)"/><rect x="790" y="106" width="13" height="5.4" fill="#fff4ea" opacity="0.57" transform="rotate(113 790 106)"/><rect x="729" y="153" width="14" height="5.6" fill="#e0d8ff" opacity="0.82" transform="rotate(148 729 153)"/><rect x="1290" y="261" width="15" height="6.1" fill="#a0b8a8" opacity="0.62" transform="rotate(70 1290 261)"/><rect x="1089" y="550" width="18" height="7.4" fill="#f8c8c8" opacity="0.60" transform="rotate(58 1089 550)"/><rect x="1065" y="352" width="16" height="6.5" fill="#fff4ea" opacity="0.64" transform="rotate(88 1065 352)"/><rect x="1049" y="400" width="16" height="6.7" fill="#ffffff" opacity="0.74" transform="rotate(167 1049 400)"/><rect x="1157" y="593" width="19" height="7.6" fill="#f0d8d0" opacity="0.65" transform="rotate(145 1157 593)"/><rect x="1728" y="27" width="12" height="5.0" fill="#e0d8ff" opacity="0.84" transform="rotate(90 1728 27)"/><rect x="350" y="501" width="18" height="7.2" fill="#f0d8d0" opacity="0.60" transform="rotate(134 350 501)"/><rect x="1554" y="-6" width="12" height="4.9" fill="#a0b8a8" opacity="0.93" transform="rotate(106 1554 -6)"/><rect x="1507" y="132" width="13" height="5.5" fill="#a0b8a8" opacity="0.98" transform="rotate(35 1507 132)"/><rect x="1266" y="303" width="15" height="6.3" fill="#d8e4ff" opacity="0.73" transform="rotate(150 1266 303)"/><rect x="1480" y="10" width="12" height="4.9" fill="#e0d8ff" opacity="0.71" transform="rotate(36 1480 10)"/><rect x="867" y="298" width="15" height="6.2" fill="#fff4ea" opacity="0.98" transform="rotate(162 867 298)"/><rect x="1281" y="26" width="12" height="5.0" fill="#fff4ea" opacity="0.81" transform="rotate(25 1281 26)"/><rect x="1394" y="423" width="17" height="6.8" fill="#a0b8a8" opacity="0.75" transform="rotate(126 1394 423)"/><rect x="1144" y="264" width="15" height="6.1" fill="#d8e4ff" opacity="0.79" transform="rotate(108 1144 264)"/><rect x="870" y="75" width="13" height="5.2" fill="#c8b8e8" opacity="0.70" transform="rotate(84 870 75)"/><rect x="1570" y="484" width="17" height="7.1" fill="#fff4ea" opacity="0.65" transform="rotate(111 1570 484)"/><rect x="520" y="545" width="18" height="7.4" fill="#f8c8c8" opacity="0.66" transform="rotate(72 520 545)"/><rect x="552" y="326" width="16" height="6.4" fill="#d8e4ff" opacity="0.67" transform="rotate(97 552 326)"/><rect x="1229" y="301" width="15" height="6.2" fill="#f8c8c8" opacity="0.90" transform="rotate(116 1229 301)"/><rect x="715" y="573" width="18" height="7.5" fill="#a0b8a8" opacity="0.95" transform="rotate(108 715 573)"/><rect x="613" y="557" width="18" height="7.4" fill="#e0d8ff" opacity="0.61" transform="rotate(138 613 557)"/><rect x="1099" y="-42" width="12" height="4.9" fill="#f8c8c8" opacity="0.64" transform="rotate(134 1099 -42)"/><rect x="1261" y="481" width="17" height="7.1" fill="#f0e0a0" opacity="0.66" transform="rotate(89 1261 481)"/><rect x="1554" y="189" width="14" height="5.7" fill="#f8c8c8" opacity="0.96" transform="rotate(127 1554 189)"/><rect x="1553" y="200" width="14" height="5.8" fill="#f0d8d0" opacity="0.73" transform="rotate(71 1553 200)"/><rect x="824" y="212" width="14" height="5.8" fill="#f0e0a0" opacity="0.73" transform="rotate(159 824 212)"/><rect x="655" y="92" width="13" height="5.3" fill="#a0b8a8" opacity="0.58" transform="rotate(10 655 92)"/><rect x="1102" y="508" width="18" height="7.2" fill="#a0b8a8" opacity="0.66" transform="rotate(126 1102 508)"/><rect x="624" y="481" width="17" height="7.1" fill="#a0b8a8" opacity="0.75" transform="rotate(107 624 481)"/><rect x="918" y="-18" width="12" height="4.9" fill="#2a2440" opacity="0.93" transform="rotate(116 918 -18)"/><rect x="672" y="510" width="18" height="7.2" fill="#f0d8d0" opacity="0.67" transform="rotate(70 672 510)"/><rect x="1577" y="484" width="17" height="7.1" fill="#f0e0a0" opacity="0.83" transform="rotate(129 1577 484)"/><rect x="678" y="529" width="18" height="7.3" fill="#e0d8ff" opacity="0.77" transform="rotate(36 678 529)"/><rect x="884" y="444" width="17" height="6.9" fill="#ffffff" opacity="0.88" transform="rotate(36 884 444)"/><rect x="1067" y="316" width="16" height="6.3" fill="#f8c8c8" opacity="1.00" transform="rotate(131 1067 316)"/><rect x="1157" y="634" width="19" height="7.8" fill="#d8e4ff" opacity="0.65" transform="rotate(16 1157 634)"/><rect x="968" y="785" width="21" height="8.4" fill="#a0b8a8" opacity="0.57" transform="rotate(98 968 785)"/><rect x="1062" y="253" width="15" height="6.0" fill="#e0d8ff" opacity="0.92" transform="rotate(164 1062 253)"/><rect x="1149" y="156" width="14" height="5.6" fill="#f0d8d0" opacity="0.86" transform="rotate(170 1149 156)"/><rect x="652" y="182" width="14" height="5.7" fill="#c8b8e8" opacity="0.72" transform="rotate(168 652 182)"/><rect x="1445" y="482" width="17" height="7.1" fill="#ffffff" opacity="0.57" transform="rotate(59 1445 482)"/><rect x="1317" y="645" width="19" height="7.8" fill="#fff4ea" opacity="0.85" transform="rotate(156 1317 645)"/><rect x="712" y="679" width="20" height="8.0" fill="#e0d8ff" opacity="0.59" transform="rotate(151 712 679)"/><rect x="863" y="252" width="15" height="6.0" fill="#f0e0a0" opacity="0.62" transform="rotate(33 863 252)"/><rect x="1035" y="460" width="17" height="7.0" fill="#f0e0a0" opacity="0.96" transform="rotate(118 1035 460)"/><rect x="361" y="370" width="16" height="6.6" fill="#e0d8ff" opacity="0.87" transform="rotate(141 361 370)"/><rect x="1275" y="416" width="17" height="6.8" fill="#2a2440" opacity="0.59" transform="rotate(166 1275 416)"/><rect x="1510" y="310" width="15" height="6.3" fill="#f8c8c8" opacity="0.59" transform="rotate(164 1510 310)"/><rect x="690" y="508" width="18" height="7.2" fill="#ffffff" opacity="0.98" transform="rotate(171 690 508)"/><rect x="850" y="628" width="19" height="7.7" fill="#a0b8a8" opacity="0.80" transform="rotate(95 850 628)"/><rect x="1130" y="130" width="13" height="5.5" fill="#f0d8d0" opacity="0.77" transform="rotate(165 1130 130)"/><rect x="536" y="107" width="13" height="5.4" fill="#a0b8a8" opacity="0.56" transform="rotate(69 536 107)"/><rect x="1333" y="158" width="14" height="5.6" fill="#f0e0a0" opacity="0.76" transform="rotate(58 1333 158)"/><rect x="778" y="435" width="17" height="6.9" fill="#f0d8d0" opacity="0.71" transform="rotate(83 778 435)"/><rect x="889" y="313" width="16" height="6.3" fill="#d8e4ff" opacity="0.70" transform="rotate(140 889 313)"/><rect x="1205" y="472" width="17" height="7.0" fill="#2a2440" opacity="0.64" transform="rotate(9 1205 472)"/><rect x="1211" y="298" width="15" height="6.2" fill="#2a2440" opacity="0.55" transform="rotate(12 1211 298)"/><rect x="1160" y="171" width="14" height="5.7" fill="#fff4ea" opacity="0.70" transform="rotate(12 1160 171)"/><rect x="1306" y="545" width="18" height="7.4" fill="#ffffff" opacity="0.59" transform="rotate(129 1306 545)"/><rect x="471" y="-115" width="12" height="4.9" fill="#f0d8d0" opacity="0.65" transform="rotate(155 471 -115)"/><rect x="1722" y="25" width="12" height="5.0" fill="#f8c8c8" opacity="0.97" transform="rotate(124 1722 25)"/><rect x="1201" y="18" width="12" height="5.0" fill="#f0e0a0" opacity="0.98" transform="rotate(119 1201 18)"/><rect x="1081" y="419" width="17" height="6.8" fill="#f0d8d0" opacity="0.93" transform="rotate(132 1081 419)"/><rect x="1066" y="159" width="14" height="5.6" fill="#f8c8c8" opacity="0.94" transform="rotate(113 1066 159)"/><rect x="980" y="77" width="13" height="5.2" fill="#ffffff" opacity="0.94" transform="rotate(42 980 77)"/><rect x="1329" y="340" width="16" height="6.4" fill="#f0d8d0" opacity="0.94" transform="rotate(4 1329 340)"/><rect x="371" y="328" width="16" height="6.4" fill="#a0b8a8" opacity="0.71" transform="rotate(38 371 328)"/><rect x="1703" y="559" width="18" height="7.4" fill="#c8b8e8" opacity="0.84" transform="rotate(95 1703 559)"/><rect x="1186" y="644" width="19" height="7.8" fill="#f0e0a0" opacity="0.66" transform="rotate(126 1186 644)"/><rect x="658" y="354" width="16" height="6.5" fill="#ffffff" opacity="0.88" transform="rotate(31 658 354)"/><rect x="659" y="130" width="13" height="5.5" fill="#c8b8e8" opacity="0.58" transform="rotate(92 659 130)"/><rect x="376" y="63" width="13" height="5.2" fill="#a0b8a8" opacity="0.86" transform="rotate(78 376 63)"/><rect x="1077" y="22" width="12" height="5.0" fill="#fff4ea" opacity="0.79" transform="rotate(157 1077 22)"/><rect x="929" y="521" width="18" height="7.2" fill="#fff4ea" opacity="0.63" transform="rotate(141 929 521)"/><rect x="500" y="601" width="19" height="7.6" fill="#2a2440" opacity="0.93" transform="rotate(16 500 601)"/><rect x="532" y="-81" width="12" height="4.9" fill="#a0b8a8" opacity="0.74" transform="rotate(66 532 -81)"/><rect x="1064" y="721" width="20" height="8.2" fill="#f0e0a0" opacity="0.73" transform="rotate(148 1064 721)"/><rect x="1438" y="-98" width="12" height="4.9" fill="#fff4ea" opacity="0.89" transform="rotate(89 1438 -98)"/><rect x="1174" y="645" width="19" height="7.8" fill="#f0e0a0" opacity="0.58" transform="rotate(144 1174 645)"/><rect x="574" y="233" width="15" height="5.9" fill="#a0b8a8" opacity="0.72" transform="rotate(17 574 233)"/><rect x="1155" y="513" width="18" height="7.2" fill="#a0b8a8" opacity="0.61" transform="rotate(133 1155 513)"/><rect x="1627" y="236" width="15" height="5.9" fill="#d8e4ff" opacity="0.57" transform="rotate(92 1627 236)"/><rect x="962" y="813" width="21" height="8.6" fill="#fff4ea" opacity="0.97" transform="rotate(144 962 813)"/><rect x="545" y="563" width="18" height="7.4" fill="#f0d8d0" opacity="0.63" transform="rotate(16 545 563)"/><rect x="799" y="649" width="19" height="7.8" fill="#f0e0a0" opacity="0.58" transform="rotate(59 799 649)"/><rect x="1382" y="107" width="13" height="5.4" fill="#e0d8ff" opacity="0.83" transform="rotate(2 1382 107)"/><rect x="1085" y="537" width="18" height="7.3" fill="#fff4ea" opacity="0.73" transform="rotate(36 1085 537)"/><rect x="760" y="151" width="14" height="5.6" fill="#2a2440" opacity="0.97" transform="rotate(71 760 151)"/><rect x="1166" y="364" width="16" height="6.5" fill="#e0d8ff" opacity="0.86" transform="rotate(97 1166 364)"/><rect x="1556" y="-24" width="12" height="4.9" fill="#2a2440" opacity="0.96" transform="rotate(133 1556 -24)"/><rect x="970" y="255" width="15" height="6.0" fill="#2a2440" opacity="0.75" transform="rotate(49 970 255)"/><rect x="1572" y="99" width="13" height="5.3" fill="#a0b8a8" opacity="0.76" transform="rotate(59 1572 99)"/><rect x="718" y="199" width="14" height="5.8" fill="#ffffff" opacity="0.84" transform="rotate(121 718 199)"/><rect x="1077" y="799" width="21" height="8.5" fill="#f8c8c8" opacity="0.68" transform="rotate(52 1077 799)"/><rect x="414" y="191" width="14" height="5.7" fill="#ffffff" opacity="0.58" transform="rotate(129 414 191)"/><rect x="1112" y="408" width="17" height="6.7" fill="#f0e0a0" opacity="0.62" transform="rotate(95 1112 408)"/><rect x="907" y="29" width="12" height="5.0" fill="#ffffff" opacity="0.58" transform="rotate(63 907 29)"/><rect x="1152" y="315" width="16" height="6.3" fill="#f0e0a0" opacity="0.55" transform="rotate(151 1152 315)"/><rect x="1095" y="430" width="17" height="6.8" fill="#d8e4ff" opacity="0.61" transform="rotate(161 1095 430)"/><rect x="704" y="618" width="19" height="7.7" fill="#d8e4ff" opacity="0.59" transform="rotate(94 704 618)"/><rect x="1038" y="883" width="22" height="8.9" fill="#d8e4ff" opacity="0.88" transform="rotate(128 1038 883)"/><rect x="1356" y="173" width="14" height="5.7" fill="#c8b8e8" opacity="0.97" transform="rotate(141 1356 173)"/><rect x="326" y="348" width="16" height="6.5" fill="#d8e4ff" opacity="0.91" transform="rotate(124 326 348)"/><rect x="857" y="375" width="16" height="6.6" fill="#f0e0a0" opacity="0.99" transform="rotate(59 857 375)"/><rect x="1370" y="-50" width="12" height="4.9" fill="#f8c8c8" opacity="0.99" transform="rotate(159 1370 -50)"/><rect x="654" y="385" width="16" height="6.6" fill="#f8c8c8" opacity="0.65" transform="rotate(91 654 385)"/><rect x="1368" y="162" width="14" height="5.6" fill="#fff4ea" opacity="0.67" transform="rotate(22 1368 162)"/><rect x="800" y="351" width="16" height="6.5" fill="#f0d8d0" opacity="0.96" transform="rotate(139 800 351)"/><rect x="1187" y="273" width="15" height="6.1" fill="#fff4ea" opacity="0.98" transform="rotate(88 1187 273)"/><rect x="1183" y="785" width="21" height="8.4" fill="#f0e0a0" opacity="0.96" transform="rotate(110 1183 785)"/><rect x="437" y="128" width="13" height="5.5" fill="#f8c8c8" opacity="0.78" transform="rotate(38 437 128)"/><rect x="1488" y="324" width="16" height="6.3" fill="#f0e0a0" opacity="0.66" transform="rotate(51 1488 324)"/><rect x="1266" y="94" width="13" height="5.3" fill="#a0b8a8" opacity="0.75" transform="rotate(42 1266 94)"/><rect x="1361" y="446" width="17" height="6.9" fill="#f8c8c8" opacity="0.69" transform="rotate(140 1361 446)"/><rect x="1131" y="580" width="19" height="7.5" fill="#d8e4ff" opacity="0.57" transform="rotate(17 1131 580)"/><rect x="724" y="60" width="13" height="5.1" fill="#d8e4ff" opacity="0.72" transform="rotate(102 724 60)"/><rect x="1144" y="207" width="14" height="5.8" fill="#f8c8c8" opacity="0.61" transform="rotate(98 1144 207)"/><rect x="1411" y="622" width="19" height="7.7" fill="#f8c8c8" opacity="0.86" transform="rotate(179 1411 622)"/><rect x="1366" y="139" width="14" height="5.5" fill="#fff4ea" opacity="0.90" transform="rotate(4 1366 139)"/><rect x="1165" y="-73" width="12" height="4.9" fill="#e0d8ff" opacity="0.72" transform="rotate(24 1165 -73)"/><rect x="868" y="177" width="14" height="5.7" fill="#e0d8ff" opacity="0.69" transform="rotate(35 868 177)"/><rect x="825" y="443" width="17" height="6.9" fill="#f0e0a0" opacity="0.74" transform="rotate(24 825 443)"/><rect x="735" y="108" width="13" height="5.4" fill="#f0d8d0" opacity="0.59" transform="rotate(62 735 108)"/><rect x="1136" y="787" width="21" height="8.5" fill="#f0d8d0" opacity="0.63" transform="rotate(88 1136 787)"/><rect x="944" y="636" width="19" height="7.8" fill="#a0b8a8" opacity="0.85" transform="rotate(107 944 636)"/><rect x="1040" y="311" width="15" height="6.3" fill="#fff4ea" opacity="0.56" transform="rotate(17 1040 311)"/><rect x="727" y="387" width="16" height="6.6" fill="#f0e0a0" opacity="0.96" transform="rotate(154 727 387)"/><rect x="847" y="361" width="16" height="6.5" fill="#c8b8e8" opacity="0.56" transform="rotate(35 847 361)"/><rect x="766" y="140" width="14" height="5.5" fill="#e0d8ff" opacity="0.76" transform="rotate(78 766 140)"/><rect x="430" y="141" width="14" height="5.5" fill="#d8e4ff" opacity="0.81" transform="rotate(42 430 141)"/><rect x="1533" y="367" width="16" height="6.5" fill="#2a2440" opacity="0.74" transform="rotate(90 1533 367)"/><rect x="969" y="344" width="16" height="6.4" fill="#c8b8e8" opacity="0.59" transform="rotate(115 969 344)"/><rect x="965" y="150" width="14" height="5.6" fill="#ffffff" opacity="0.78" transform="rotate(47 965 150)"/><rect x="993" y="340" width="16" height="6.4" fill="#f0d8d0" opacity="0.96" transform="rotate(38 993 340)"/><rect x="1200" y="144" width="14" height="5.5" fill="#2a2440" opacity="0.67" transform="rotate(0 1200 144)"/><rect x="1099" y="274" width="15" height="6.1" fill="#f0d8d0" opacity="0.83" transform="rotate(44 1099 274)"/><rect x="408" y="109" width="13" height="5.4" fill="#f8c8c8" opacity="0.68" transform="rotate(130 408 109)"/><rect x="1285" y="16" width="12" height="4.9" fill="#a0b8a8" opacity="0.61" transform="rotate(150 1285 16)"/><rect x="779" y="377" width="16" height="6.6" fill="#a0b8a8" opacity="0.58" transform="rotate(91 779 377)"/><rect x="967" y="276" width="15" height="6.1" fill="#c8b8e8" opacity="0.71" transform="rotate(143 967 276)"/><rect x="533" y="467" width="17" height="7.0" fill="#ffffff" opacity="0.67" transform="rotate(49 533 467)"/><rect x="1254" y="111" width="13" height="5.4" fill="#a0b8a8" opacity="0.66" transform="rotate(10 1254 111)"/><rect x="1280" y="78" width="13" height="5.2" fill="#2a2440" opacity="0.97" transform="rotate(55 1280 78)"/><rect x="891" y="727" width="20" height="8.2" fill="#a0b8a8" opacity="0.74" transform="rotate(53 891 727)"/><rect x="1331" y="331" width="16" height="6.4" fill="#fff4ea" opacity="0.90" transform="rotate(122 1331 331)"/><rect x="1493" y="461" width="17" height="7.0" fill="#ffffff" opacity="0.99" transform="rotate(99 1493 461)"/><rect x="592" y="587" width="19" height="7.5" fill="#f0d8d0" opacity="0.57" transform="rotate(109 592 587)"/><rect x="1096" y="265" width="15" height="6.1" fill="#c8b8e8" opacity="0.60" transform="rotate(99 1096 265)"/><rect x="929" y="456" width="17" height="6.9" fill="#fff4ea" opacity="0.60" transform="rotate(84 929 456)"/><rect x="1034" y="81" width="13" height="5.2" fill="#c8b8e8" opacity="0.82" transform="rotate(16 1034 81)"/><rect x="854" y="-115" width="12" height="4.9" fill="#d8e4ff" opacity="0.66" transform="rotate(136 854 -115)"/><rect x="931" y="501" width="18" height="7.2" fill="#f0d8d0" opacity="0.90" transform="rotate(92 931 501)"/><rect x="866" y="365" width="16" height="6.5" fill="#f0e0a0" opacity="0.65" transform="rotate(129 866 365)"/><rect x="426" y="461" width="17" height="7.0" fill="#a0b8a8" opacity="0.57" transform="rotate(94 426 461)"/><rect x="1296" y="319" width="16" height="6.3" fill="#a0b8a8" opacity="0.84" transform="rotate(36 1296 319)"/><rect x="774" y="396" width="16" height="6.7" fill="#a0b8a8" opacity="0.73" transform="rotate(130 774 396)"/><rect x="1147" y="265" width="15" height="6.1" fill="#f8c8c8" opacity="0.90" transform="rotate(65 1147 265)"/><rect x="1157" y="568" width="18" height="7.5" fill="#e0d8ff" opacity="0.86" transform="rotate(118 1157 568)"/><rect x="721" y="105" width="13" height="5.4" fill="#f0d8d0" opacity="0.88" transform="rotate(122 721 105)"/>
<circle cx="280" cy="185" r="14" fill="#c8d2ff" opacity="0.3" filter="url(#fb4)"/><circle cx="280" cy="185" r="7.6" fill="#f6f8ff"/>
<circle cx="355" cy="188" r="14" fill="#c8d2ff" opacity="0.3" filter="url(#fb4)"/><circle cx="355" cy="188" r="7.6" fill="#f6f8ff"/>
<circle cx="440" cy="185" r="14" fill="#c8d2ff" opacity="0.3" filter="url(#fb4)"/><circle cx="440" cy="185" r="7.6" fill="#f6f8ff"/>
<circle cx="515" cy="188" r="14" fill="#c8d2ff" opacity="0.3" filter="url(#fb4)"/><circle cx="515" cy="188" r="7.6" fill="#f6f8ff"/>
<circle cx="745" cy="185" r="26" fill="#c8d2ff" opacity="0.3" filter="url(#fb4)"/><circle cx="745" cy="185" r="14.4" fill="#f6f8ff"/>
<circle cx="900" cy="245" r="21" fill="#c8d2ff" opacity="0.3" filter="url(#fb4)"/><circle cx="900" cy="245" r="11.9" fill="#f6f8ff"/>
<circle cx="1045" cy="245" r="21" fill="#c8d2ff" opacity="0.3" filter="url(#fb4)"/><circle cx="1045" cy="245" r="11.9" fill="#f6f8ff"/>
<circle cx="1180" cy="190" r="26" fill="#c8d2ff" opacity="0.3" filter="url(#fb4)"/><circle cx="1180" cy="190" r="14.4" fill="#f6f8ff"/>
<circle cx="1405" cy="205" r="14" fill="#c8d2ff" opacity="0.3" filter="url(#fb4)"/><circle cx="1405" cy="205" r="7.6" fill="#f6f8ff"/>
<circle cx="1485" cy="200" r="14" fill="#c8d2ff" opacity="0.3" filter="url(#fb4)"/><circle cx="1485" cy="200" r="7.6" fill="#f6f8ff"/>
<circle cx="1560" cy="200" r="14" fill="#c8d2ff" opacity="0.3" filter="url(#fb4)"/><circle cx="1560" cy="200" r="7.6" fill="#f6f8ff"/>
<circle cx="1635" cy="210" r="14" fill="#c8d2ff" opacity="0.3" filter="url(#fb4)"/><circle cx="1635" cy="210" r="7.6" fill="#f6f8ff"/>
<circle cx="520" cy="345" r="27" fill="#c8d2ff" opacity="0.3" filter="url(#fb4)"/><circle cx="520" cy="345" r="15.3" fill="#f6f8ff"/>
<circle cx="1400" cy="355" r="27" fill="#c8d2ff" opacity="0.3" filter="url(#fb4)"/><circle cx="1400" cy="355" r="15.3" fill="#f6f8ff"/>
<circle cx="225" cy="445" r="27" fill="#c8d2ff" opacity="0.3" filter="url(#fb4)"/><circle cx="225" cy="445" r="15.3" fill="#f6f8ff"/>
<circle cx="1685" cy="468" r="27" fill="#c8d2ff" opacity="0.3" filter="url(#fb4)"/><circle cx="1685" cy="468" r="15.3" fill="#f6f8ff"/>
<circle cx="280" cy="595" r="15" fill="#c8d2ff" opacity="0.3" filter="url(#fb4)"/><circle cx="280" cy="595" r="8.5" fill="#f6f8ff"/>
<circle cx="1635" cy="610" r="15" fill="#c8d2ff" opacity="0.3" filter="url(#fb4)"/><circle cx="1635" cy="610" r="8.5" fill="#f6f8ff"/>

<g filter="url(#fb2)">
<path d="M 340 1000 L 350 830 Q 370 790 420 785 Q 480 790 490 830 L 520 1000 Z" fill="#181630"/>
<ellipse cx="430" cy="752" rx="24" ry="32" fill="#8e8a9c"/>
<path d="M 400 740 Q 398 712 428 712 Q 458 714 455 742 Z" fill="#6a6a78"/>
<path d="M 380 905 L 590 845 L 596 857 L 392 922 Z" fill="#d0c8dc"/>
<path d="M 390 900 Q 420 880 450 910 Q 440 940 400 935 Z" fill="#3a2a30"/>
<path d="M 935 1010 L 948 800 Q 962 755 992 758 Q 1022 762 1030 805 L 1040 1010 Z" fill="#5c5078"/>
<path d="M 950 760 Q 955 715 990 715 Q 1030 718 1028 770 Q 1020 830 990 830 Q 955 825 950 760 Z" fill="#d0c0b8"/>
<path d="M 1020 790 L 1055 700 L 1072 655 L 1082 660 L 1068 705 L 1036 800 Z" fill="#d8c8c8"/>
<path d="M 1225 940 L 1235 805 Q 1250 778 1275 778 Q 1305 782 1315 812 L 1322 940 Z" fill="#34365a"/>
<ellipse cx="1272" cy="742" rx="23" ry="30" fill="#c8c0d0"/>
<path d="M 1252 885 L 1422 772 L 1430 782 L 1264 900 Z" fill="#b8b8e0"/>
<path d="M 1660 950 L 1690 840 Q 1720 800 1760 810 Q 1800 830 1810 910 L 1820 950 Z" fill="#1c182c"/>
</g>
<rect x="-560" y="860" width="3150" height="820" fill="url(#crowdFade)"/><circle cx="-542" cy="967" r="32" fill="#0a0b20"/><rect x="-590" y="989" width="97" height="733" rx="32" fill="#0a0b20"/><circle cx="-460" cy="975" r="34" fill="#0a0b20"/><rect x="-510" y="999" width="101" height="725" rx="34" fill="#0a0b20"/><circle cx="-363" cy="935" r="27" fill="#0a0b20"/><rect x="-403" y="954" width="80" height="765" rx="27" fill="#0a0b20"/><path d="M -388 926 A 27 27 0 0 1 -336 931" fill="none" stroke="#4a5ad0" stroke-width="3.0" opacity="0.28"/><circle cx="-266" cy="947" r="27" fill="#0a0b20"/><rect x="-306" y="965" width="80" height="753" rx="27" fill="#0a0b20"/><path d="M -289 934 A 27 27 0 0 1 -241 936" fill="none" stroke="#4a5ad0" stroke-width="3.0" opacity="0.28"/><circle cx="-182" cy="937" r="31" fill="#0a0b20"/><rect x="-229" y="959" width="94" height="763" rx="31" fill="#0a0b20"/><path d="M -212 927 A 31 31 0 0 1 -151 931" fill="none" stroke="#4a5ad0" stroke-width="3.0" opacity="0.28"/><circle cx="-98" cy="943" r="28" fill="#0a0b20"/><rect x="-141" y="963" width="85" height="757" rx="28" fill="#0a0b20"/><circle cx="-72" cy="958" r="35" fill="#0a0b20"/><rect x="-124" y="982" width="105" height="742" rx="35" fill="#0a0b20"/><circle cx="21" cy="944" r="30" fill="#0a0b20"/><rect x="-24" y="965" width="89" height="756" rx="30" fill="#0a0b20"/><path d="M -6 931 A 30 30 0 0 1 50 937" fill="none" stroke="#4a5ad0" stroke-width="3.0" opacity="0.28"/><circle cx="127" cy="983" r="27" fill="#0a0b20"/><rect x="87" y="1002" width="80" height="717" rx="27" fill="#0a0b20"/><circle cx="204" cy="964" r="33" fill="#0a0b20"/><rect x="154" y="987" width="99" height="736" rx="33" fill="#0a0b20"/><circle cx="243" cy="976" r="30" fill="#0a0b20"/><rect x="199" y="997" width="89" height="724" rx="30" fill="#0a0b20"/><path d="M 217 963 A 30 30 0 0 1 270 963" fill="none" stroke="#4a5ad0" stroke-width="3.0" opacity="0.28"/><circle cx="340" cy="958" r="28" fill="#0a0b20"/><rect x="297" y="977" width="85" height="742" rx="28" fill="#0a0b20"/><path d="M 315 944 A 28 28 0 0 1 367 950" fill="none" stroke="#4a5ad0" stroke-width="3.0" opacity="0.28"/><circle cx="395" cy="971" r="25" fill="#0a0b20"/><rect x="357" y="988" width="75" height="729" rx="25" fill="#0a0b20"/><circle cx="503" cy="963" r="30" fill="#0a0b20"/><rect x="458" y="983" width="90" height="737" rx="30" fill="#0a0b20"/><circle cx="564" cy="963" r="31" fill="#0a0b20"/><rect x="517" y="985" width="94" height="737" rx="31" fill="#0a0b20"/><circle cx="641" cy="952" r="26" fill="#0a0b20"/><rect x="601" y="971" width="78" height="748" rx="26" fill="#0a0b20"/><circle cx="730" cy="950" r="31" fill="#0a0b20"/><rect x="683" y="972" width="94" height="750" rx="31" fill="#0a0b20"/><path d="M 699 945 A 31 31 0 0 1 758 937" fill="none" stroke="#4a5ad0" stroke-width="3.0" opacity="0.28"/><circle cx="836" cy="969" r="28" fill="#0a0b20"/><rect x="793" y="989" width="85" height="731" rx="28" fill="#0a0b20"/><circle cx="922" cy="955" r="35" fill="#0a0b20"/><rect x="869" y="980" width="106" height="745" rx="35" fill="#0a0b20"/><circle cx="1005" cy="979" r="31" fill="#0a0b20"/><rect x="958" y="1001" width="93" height="721" rx="31" fill="#0a0b20"/><circle cx="1047" cy="979" r="27" fill="#0a0b20"/><rect x="1006" y="998" width="81" height="721" rx="27" fill="#0a0b20"/><path d="M 1020 974 A 27 27 0 0 1 1071 968" fill="none" stroke="#4a5ad0" stroke-width="3.0" opacity="0.28"/><circle cx="1150" cy="977" r="30" fill="#0a0b20"/><rect x="1106" y="998" width="89" height="723" rx="30" fill="#0a0b20"/><path d="M 1121 970 A 30 30 0 0 1 1179 969" fill="none" stroke="#4a5ad0" stroke-width="3.0" opacity="0.28"/><circle cx="1207" cy="938" r="26" fill="#0a0b20"/><rect x="1168" y="957" width="78" height="762" rx="26" fill="#0a0b20"/><path d="M 1184 927 A 26 26 0 0 1 1230 926" fill="none" stroke="#4a5ad0" stroke-width="3.0" opacity="0.28"/><circle cx="1306" cy="948" r="30" fill="#0a0b20"/><rect x="1261" y="968" width="89" height="752" rx="30" fill="#0a0b20"/><circle cx="1371" cy="936" r="33" fill="#0a0b20"/><rect x="1322" y="959" width="98" height="764" rx="33" fill="#0a0b20"/><path d="M 1341 922 A 33 33 0 0 1 1401 923" fill="none" stroke="#4a5ad0" stroke-width="3.0" opacity="0.28"/><circle cx="1472" cy="956" r="31" fill="#0a0b20"/><rect x="1425" y="978" width="94" height="744" rx="31" fill="#0a0b20"/><circle cx="1549" cy="962" r="28" fill="#0a0b20"/><rect x="1507" y="981" width="83" height="738" rx="28" fill="#0a0b20"/><path d="M 1524 950 A 28 28 0 0 1 1576 957" fill="none" stroke="#4a5ad0" stroke-width="3.0" opacity="0.28"/><circle cx="1617" cy="936" r="35" fill="#0a0b20"/><rect x="1564" y="961" width="106" height="764" rx="35" fill="#0a0b20"/><circle cx="1693" cy="964" r="34" fill="#0a0b20"/><rect x="1642" y="988" width="103" height="736" rx="34" fill="#0a0b20"/><path d="M 1661 954 A 34 34 0 0 1 1724 948" fill="none" stroke="#4a5ad0" stroke-width="3.0" opacity="0.28"/><circle cx="1789" cy="940" r="26" fill="#0a0b20"/><rect x="1750" y="958" width="77" height="760" rx="26" fill="#0a0b20"/><path d="M 1763 936 A 26 26 0 0 1 1813 932" fill="none" stroke="#4a5ad0" stroke-width="3.0" opacity="0.28"/><circle cx="1819" cy="968" r="34" fill="#0a0b20"/><rect x="1768" y="992" width="103" height="732" rx="34" fill="#0a0b20"/><path d="M 1787 956 A 34 34 0 0 1 1852 959" fill="none" stroke="#4a5ad0" stroke-width="3.0" opacity="0.28"/><circle cx="1920" cy="943" r="27" fill="#0a0b20"/><rect x="1880" y="962" width="80" height="757" rx="27" fill="#0a0b20"/><path d="M 1895 936 A 27 27 0 0 1 1945 933" fill="none" stroke="#4a5ad0" stroke-width="3.0" opacity="0.28"/><circle cx="2003" cy="971" r="25" fill="#0a0b20"/><rect x="1966" y="988" width="74" height="729" rx="25" fill="#0a0b20"/><circle cx="2095" cy="935" r="33" fill="#0a0b20"/><rect x="2045" y="959" width="100" height="765" rx="33" fill="#0a0b20"/><circle cx="2129" cy="944" r="33" fill="#0a0b20"/><rect x="2080" y="967" width="100" height="756" rx="33" fill="#0a0b20"/><circle cx="2220" cy="951" r="32" fill="#0a0b20"/><rect x="2172" y="973" width="97" height="749" rx="32" fill="#0a0b20"/><path d="M 2189 942 A 32 32 0 0 1 2251 942" fill="none" stroke="#4a5ad0" stroke-width="3.0" opacity="0.28"/><circle cx="2340" cy="960" r="28" fill="#0a0b20"/><rect x="2298" y="979" width="83" height="740" rx="28" fill="#0a0b20"/><circle cx="2421" cy="965" r="25" fill="#0a0b20"/><rect x="2384" y="983" width="76" height="735" rx="25" fill="#0a0b20"/><circle cx="2487" cy="951" r="36" fill="#0a0b20"/><rect x="2433" y="975" width="107" height="749" rx="36" fill="#0a0b20"/><circle cx="2552" cy="938" r="31" fill="#0a0b20"/><rect x="2506" y="960" width="92" height="762" rx="31" fill="#0a0b20"/><circle cx="-467" cy="1051" r="44" fill="#07081a"/><rect x="-534" y="1082" width="133" height="649" rx="44" fill="#07081a"/><circle cx="-435" cy="1039" r="39" fill="#07081a"/><rect x="-495" y="1066" width="118" height="661" rx="39" fill="#07081a"/><circle cx="-276" cy="1066" r="46" fill="#07081a"/><rect x="-345" y="1098" width="138" height="634" rx="46" fill="#07081a"/><path d="M -319 1049 A 46 46 0 0 1 -232 1052" fill="none" stroke="#3a50c0" stroke-width="4.2" opacity="0.28"/><circle cx="-191" cy="1055" r="45" fill="#07081a"/><rect x="-259" y="1087" width="135" height="645" rx="45" fill="#07081a"/><path d="M -235 1048 A 45 45 0 0 1 -148 1042" fill="none" stroke="#3a50c0" stroke-width="4.2" opacity="0.28"/><circle cx="-109" cy="1076" r="51" fill="#07081a"/><rect x="-185" y="1111" width="152" height="624" rx="51" fill="#07081a"/><circle cx="14" cy="1054" r="42" fill="#07081a"/><rect x="-50" y="1084" width="127" height="646" rx="42" fill="#07081a"/><circle cx="134" cy="1039" r="55" fill="#07081a"/><rect x="51" y="1078" width="166" height="661" rx="55" fill="#07081a"/><circle cx="227" cy="1080" r="51" fill="#07081a"/><rect x="150" y="1115" width="153" height="620" rx="51" fill="#07081a"/><circle cx="343" cy="1068" r="52" fill="#07081a"/><rect x="266" y="1105" width="155" height="632" rx="52" fill="#07081a"/><circle cx="454" cy="1047" r="50" fill="#07081a"/><rect x="379" y="1082" width="151" height="653" rx="50" fill="#07081a"/><circle cx="533" cy="1076" r="49" fill="#07081a"/><rect x="459" y="1111" width="147" height="624" rx="49" fill="#07081a"/><circle cx="689" cy="1051" r="38" fill="#07081a"/><rect x="631" y="1077" width="114" height="649" rx="38" fill="#07081a"/><path d="M 652 1040 A 38 38 0 0 1 726 1043" fill="none" stroke="#3a50c0" stroke-width="4.2" opacity="0.28"/><circle cx="757" cy="1050" r="39" fill="#07081a"/><rect x="698" y="1078" width="118" height="650" rx="39" fill="#07081a"/><circle cx="878" cy="1040" r="46" fill="#07081a"/><rect x="808" y="1073" width="139" height="660" rx="46" fill="#07081a"/><circle cx="980" cy="1052" r="42" fill="#07081a"/><rect x="917" y="1081" width="125" height="648" rx="42" fill="#07081a"/><circle cx="1083" cy="1083" r="43" fill="#07081a"/><rect x="1019" y="1112" width="128" height="617" rx="43" fill="#07081a"/><path d="M 1041 1072 A 43 43 0 0 1 1121 1064" fill="none" stroke="#3a50c0" stroke-width="4.2" opacity="0.28"/><circle cx="1143" cy="1045" r="50" fill="#07081a"/><rect x="1068" y="1080" width="151" height="655" rx="50" fill="#07081a"/><circle cx="1259" cy="1082" r="45" fill="#07081a"/><rect x="1192" y="1113" width="134" height="618" rx="45" fill="#07081a"/><circle cx="1377" cy="1049" r="49" fill="#07081a"/><rect x="1304" y="1083" width="147" height="651" rx="49" fill="#07081a"/><path d="M 1330 1035 A 49 49 0 0 1 1425 1037" fill="none" stroke="#3a50c0" stroke-width="4.2" opacity="0.28"/><circle cx="1461" cy="1037" r="55" fill="#07081a"/><rect x="1378" y="1075" width="166" height="663" rx="55" fill="#07081a"/><circle cx="1629" cy="1036" r="51" fill="#07081a"/><rect x="1553" y="1071" width="152" height="664" rx="51" fill="#07081a"/><circle cx="1659" cy="1070" r="49" fill="#07081a"/><rect x="1585" y="1104" width="147" height="630" rx="49" fill="#07081a"/><path d="M 1610 1063 A 49 49 0 0 1 1705 1054" fill="none" stroke="#3a50c0" stroke-width="4.2" opacity="0.28"/><circle cx="1768" cy="1058" r="44" fill="#07081a"/><rect x="1703" y="1088" width="131" height="642" rx="44" fill="#07081a"/><circle cx="1897" cy="1075" r="40" fill="#07081a"/><rect x="1836" y="1103" width="121" height="625" rx="40" fill="#07081a"/><circle cx="2015" cy="1044" r="39" fill="#07081a"/><rect x="1957" y="1072" width="117" height="656" rx="39" fill="#07081a"/><path d="M 1978 1031 A 39 39 0 0 1 2053 1036" fill="none" stroke="#3a50c0" stroke-width="4.2" opacity="0.28"/><circle cx="2143" cy="1081" r="53" fill="#07081a"/><rect x="2063" y="1118" width="160" height="619" rx="53" fill="#07081a"/><circle cx="2182" cy="1039" r="48" fill="#07081a"/><rect x="2109" y="1073" width="145" height="661" rx="48" fill="#07081a"/><circle cx="2348" cy="1044" r="52" fill="#07081a"/><rect x="2271" y="1081" width="155" height="656" rx="52" fill="#07081a"/><path d="M 2301 1023 A 52 52 0 0 1 2397 1026" fill="none" stroke="#3a50c0" stroke-width="4.2" opacity="0.28"/><circle cx="2443" cy="1075" r="46" fill="#07081a"/><rect x="2373" y="1108" width="139" height="625" rx="46" fill="#07081a"/><path d="M 2398 1064 A 46 46 0 0 1 2487 1062" fill="none" stroke="#3a50c0" stroke-width="4.2" opacity="0.28"/><circle cx="2521" cy="1080" r="49" fill="#07081a"/><rect x="2447" y="1114" width="148" height="620" rx="49" fill="#07081a"/><path d="M 2472 1071 A 49 49 0 0 1 2567 1064" fill="none" stroke="#3a50c0" stroke-width="4.2" opacity="0.28"/><circle cx="-464" cy="1178" r="63" fill="#050612"/><rect x="-559" y="1223" width="190" height="522" rx="63" fill="#050612"/><path d="M -526 1168 A 63 63 0 0 1 -404 1158" fill="none" stroke="#3048a8" stroke-width="5.4" opacity="0.23"/><circle cx="-313" cy="1173" r="76" fill="#050612"/><rect x="-428" y="1226" width="229" height="527" rx="76" fill="#050612"/><path d="M -381 1138 A 76 76 0 0 1 -241 1148" fill="none" stroke="#3048a8" stroke-width="5.4" opacity="0.23"/><circle cx="-196" cy="1201" r="77" fill="#050612"/><rect x="-312" y="1256" width="232" height="499" rx="77" fill="#050612"/><circle cx="-86" cy="1176" r="81" fill="#050612"/><rect x="-207" y="1233" width="243" height="524" rx="81" fill="#050612"/><path d="M -164 1154 A 81 81 0 0 1 -9 1149" fill="none" stroke="#3048a8" stroke-width="5.4" opacity="0.23"/><circle cx="130" cy="1200" r="63" fill="#050612"/><rect x="36" y="1244" width="189" height="500" rx="63" fill="#050612"/><circle cx="224" cy="1205" r="82" fill="#050612"/><rect x="102" y="1263" width="245" height="495" rx="82" fill="#050612"/><circle cx="437" cy="1204" r="64" fill="#050612"/><rect x="340" y="1249" width="192" height="496" rx="64" fill="#050612"/><circle cx="569" cy="1214" r="83" fill="#050612"/><rect x="444" y="1272" width="250" height="486" rx="83" fill="#050612"/><path d="M 495 1175 A 83 83 0 0 1 643 1175" fill="none" stroke="#3048a8" stroke-width="5.4" opacity="0.23"/><circle cx="750" cy="1183" r="58" fill="#050612"/><rect x="663" y="1223" width="175" height="517" rx="58" fill="#050612"/><circle cx="878" cy="1197" r="79" fill="#050612"/><rect x="759" y="1253" width="237" height="503" rx="79" fill="#050612"/><path d="M 807 1161 A 79 79 0 0 1 953 1171" fill="none" stroke="#3048a8" stroke-width="5.4" opacity="0.23"/><circle cx="1061" cy="1215" r="64" fill="#050612"/><rect x="965" y="1260" width="191" height="485" rx="64" fill="#050612"/><circle cx="1198" cy="1209" r="79" fill="#050612"/><rect x="1080" y="1264" width="236" height="491" rx="79" fill="#050612"/><path d="M 1121 1195 A 79 79 0 0 1 1273 1186" fill="none" stroke="#3048a8" stroke-width="5.4" opacity="0.23"/><circle cx="1276" cy="1206" r="73" fill="#050612"/><rect x="1167" y="1257" width="219" height="494" rx="73" fill="#050612"/><path d="M 1205 1192 A 73 73 0 0 1 1349 1194" fill="none" stroke="#3048a8" stroke-width="5.4" opacity="0.23"/><circle cx="1456" cy="1166" r="74" fill="#050612"/><rect x="1344" y="1218" width="223" height="534" rx="74" fill="#050612"/><circle cx="1580" cy="1211" r="61" fill="#050612"/><rect x="1489" y="1254" width="183" height="489" rx="61" fill="#050612"/><circle cx="1812" cy="1171" r="72" fill="#050612"/><rect x="1704" y="1222" width="217" height="529" rx="72" fill="#050612"/><path d="M 1743 1150 A 72 72 0 0 1 1880 1145" fill="none" stroke="#3048a8" stroke-width="5.4" opacity="0.23"/><circle cx="1948" cy="1198" r="79" fill="#050612"/><rect x="1829" y="1253" width="237" height="502" rx="79" fill="#050612"/><path d="M 1872 1174 A 79 79 0 0 1 2023 1176" fill="none" stroke="#3048a8" stroke-width="5.4" opacity="0.23"/><circle cx="2064" cy="1192" r="65" fill="#050612"/><rect x="1966" y="1238" width="196" height="508" rx="65" fill="#050612"/><circle cx="2159" cy="1194" r="81" fill="#050612"/><rect x="2038" y="1251" width="243" height="506" rx="81" fill="#050612"/><circle cx="2393" cy="1215" r="78" fill="#050612"/><rect x="2276" y="1270" width="235" height="485" rx="78" fill="#050612"/><path d="M 2318 1192 A 78 78 0 0 1 2471 1203" fill="none" stroke="#3048a8" stroke-width="5.4" opacity="0.23"/><circle cx="2535" cy="1194" r="74" fill="#050612"/><rect x="2423" y="1246" width="223" height="506" rx="74" fill="#050612"/><circle cx="-506" cy="1372" r="98" fill="#03040c"/><rect x="-653" y="1440" width="294" height="328" rx="98" fill="#03040c"/><circle cx="-248" cy="1354" r="92" fill="#03040c"/><rect x="-386" y="1418" width="276" height="346" rx="92" fill="#03040c"/><circle cx="-35" cy="1354" r="106" fill="#03040c"/><rect x="-194" y="1429" width="318" height="346" rx="106" fill="#03040c"/><circle cx="192" cy="1378" r="114" fill="#03040c"/><rect x="20" y="1458" width="343" height="322" rx="114" fill="#03040c"/><circle cx="364" cy="1374" r="99" fill="#03040c"/><rect x="216" y="1443" width="296" height="326" rx="99" fill="#03040c"/><circle cx="667" cy="1377" r="97" fill="#03040c"/><rect x="521" y="1445" width="291" height="323" rx="97" fill="#03040c"/><circle cx="734" cy="1367" r="101" fill="#03040c"/><rect x="583" y="1437" width="302" height="333" rx="101" fill="#03040c"/><path d="M 643 1324 A 101 101 0 0 1 832 1342" fill="none" stroke="#2840a0" stroke-width="6.6" opacity="0.23"/><circle cx="1046" cy="1346" r="100" fill="#03040c"/><rect x="895" y="1416" width="301" height="354" rx="100" fill="#03040c"/><path d="M 951 1314 A 100 100 0 0 1 1138 1307" fill="none" stroke="#2840a0" stroke-width="6.6" opacity="0.23"/><circle cx="1178" cy="1352" r="114" fill="#03040c"/><rect x="1007" y="1432" width="342" height="348" rx="114" fill="#03040c"/><circle cx="1413" cy="1342" r="97" fill="#03040c"/><rect x="1268" y="1410" width="290" height="358" rx="97" fill="#03040c"/><path d="M 1323 1305 A 97 97 0 0 1 1505 1314" fill="none" stroke="#2840a0" stroke-width="6.6" opacity="0.23"/><circle cx="1582" cy="1368" r="121" fill="#03040c"/><rect x="1400" y="1452" width="362" height="332" rx="121" fill="#03040c"/><path d="M 1471 1320 A 121 121 0 0 1 1695 1325" fill="none" stroke="#2840a0" stroke-width="6.6" opacity="0.23"/><circle cx="1846" cy="1383" r="108" fill="#03040c"/><rect x="1684" y="1458" width="323" height="317" rx="108" fill="#03040c"/><path d="M 1745 1344 A 108 108 0 0 1 1946 1344" fill="none" stroke="#2840a0" stroke-width="6.6" opacity="0.23"/><circle cx="2042" cy="1373" r="102" fill="#03040c"/><rect x="1889" y="1444" width="306" height="327" rx="102" fill="#03040c"/><circle cx="2268" cy="1346" r="108" fill="#03040c"/><rect x="2106" y="1422" width="324" height="354" rx="108" fill="#03040c"/><circle cx="2404" cy="1358" r="113" fill="#03040c"/><rect x="2236" y="1437" width="338" height="342" rx="113" fill="#03040c"/><path d="M 2299 1319 A 113 113 0 0 1 2510 1319" fill="none" stroke="#2840a0" stroke-width="6.6" opacity="0.23"/><circle cx="-511" cy="1523" r="142" fill="#020308"/><rect x="-725" y="1623" width="426" height="177" rx="142" fill="#020308"/><circle cx="-170" cy="1526" r="135" fill="#020308"/><rect x="-372" y="1620" width="404" height="174" rx="135" fill="#020308"/><path d="M -302 1497 A 135 135 0 0 1 -38 1499" fill="none" stroke="#203890" stroke-width="7.8" opacity="0.23"/><circle cx="184" cy="1526" r="158" fill="#020308"/><rect x="-53" y="1637" width="474" height="174" rx="158" fill="#020308"/><path d="M 35 1474 A 158 158 0 0 1 340 1496" fill="none" stroke="#203890" stroke-width="7.8" opacity="0.23"/><circle cx="421" cy="1525" r="154" fill="#020308"/><rect x="189" y="1633" width="463" height="175" rx="154" fill="#020308"/><circle cx="738" cy="1527" r="124" fill="#020308"/><rect x="552" y="1614" width="371" height="173" rx="124" fill="#020308"/><circle cx="923" cy="1544" r="129" fill="#020308"/><rect x="729" y="1634" width="387" height="156" rx="129" fill="#020308"/><circle cx="1306" cy="1515" r="150" fill="#020308"/><rect x="1081" y="1620" width="450" height="185" rx="150" fill="#020308"/><path d="M 1161 1477 A 150 150 0 0 1 1440 1448" fill="none" stroke="#203890" stroke-width="7.8" opacity="0.23"/><circle cx="1555" cy="1517" r="155" fill="#020308"/><rect x="1322" y="1625" width="466" height="183" rx="155" fill="#020308"/><circle cx="1964" cy="1544" r="155" fill="#020308"/><rect x="1732" y="1652" width="464" height="156" rx="155" fill="#020308"/><path d="M 1826 1473 A 155 155 0 0 1 2116 1517" fill="none" stroke="#203890" stroke-width="7.8" opacity="0.23"/><circle cx="2267" cy="1551" r="155" fill="#020308"/><rect x="2035" y="1659" width="465" height="149" rx="155" fill="#020308"/><circle cx="2370" cy="1548" r="135" fill="#020308"/><rect x="2167" y="1643" width="406" height="152" rx="135" fill="#020308"/><g transform="rotate(-8 580 1050)"><path d="M 567 1110 L 571 890 Q 566 850 580 844 Q 594 850 589 890 L 595 1110 Z" fill="#0b0c1e"/></g><g transform="rotate(5 690 1040)"><path d="M 677 1100 L 681 880 Q 676 840 690 834 Q 704 840 699 880 L 705 1100 Z" fill="#0b0c1e"/></g><g transform="rotate(-5 860 1030)"><path d="M 847 1090 L 851 870 Q 846 830 860 824 Q 874 830 869 870 L 875 1090 Z" fill="#0b0c1e"/></g><g transform="rotate(8 1200 990)"><path d="M 1187 1050 L 1191 830 Q 1186 790 1200 784 Q 1214 790 1209 830 L 1215 1050 Z" fill="#0b0c1e"/></g><g transform="rotate(-10 1250 980)"><path d="M 1237 1040 L 1241 820 Q 1236 780 1250 774 Q 1264 780 1259 820 L 1265 1040 Z" fill="#0b0c1e"/></g><g transform="rotate(6 1420 1050)"><path d="M 1407 1110 L 1411 890 Q 1406 850 1420 844 Q 1434 850 1429 890 L 1435 1110 Z" fill="#0b0c1e"/></g><g transform="rotate(10 620 1120)"><path d="M 607 1180 L 611 960 Q 606 920 620 914 Q 634 920 629 960 L 635 1180 Z" fill="#0b0c1e"/></g><g transform="rotate(-6 1500 1080)"><path d="M 1487 1140 L 1491 920 Q 1486 880 1500 874 Q 1514 880 1509 920 L 1515 1140 Z" fill="#0b0c1e"/></g><g transform="rotate(4 1160 1080)"><path d="M 1147 1140 L 1151 920 Q 1146 880 1160 874 Q 1174 880 1169 920 L 1175 1140 Z" fill="#0b0c1e"/></g><g transform="rotate(-12 780 1100)"><path d="M 767 1160 L 771 940 Q 766 900 780 894 Q 794 900 789 940 L 795 1160 Z" fill="#0b0c1e"/></g><g transform="rotate(3 1080 1060)"><path d="M 1067 1120 L 1071 900 Q 1066 860 1080 854 Q 1094 860 1089 900 L 1095 1120 Z" fill="#0b0c1e"/></g><g transform="rotate(-4 1330 1100)"><path d="M 1317 1160 L 1321 940 Q 1316 900 1330 894 Q 1344 900 1339 940 L 1345 1160 Z" fill="#0b0c1e"/></g>
<g filter="url(#fb14)"><ellipse cx="1369" cy="1477" rx="120" ry="48" fill="#2c46b0" opacity="0.13"/><ellipse cx="2267" cy="999" rx="87" ry="48" fill="#2c46b0" opacity="0.12"/><ellipse cx="2203" cy="1056" rx="87" ry="24" fill="#2c46b0" opacity="0.11"/><ellipse cx="1222" cy="989" rx="62" ry="25" fill="#2c46b0" opacity="0.15"/><ellipse cx="1797" cy="1087" rx="120" ry="20" fill="#2c46b0" opacity="0.12"/><ellipse cx="-120" cy="981" rx="127" ry="22" fill="#2c46b0" opacity="0.08"/><ellipse cx="2447" cy="1565" rx="69" ry="49" fill="#2c46b0" opacity="0.11"/><ellipse cx="1533" cy="1117" rx="134" ry="39" fill="#2c46b0" opacity="0.16"/><ellipse cx="2181" cy="1180" rx="76" ry="21" fill="#2c46b0" opacity="0.07"/><ellipse cx="-305" cy="1182" rx="100" ry="15" fill="#2c46b0" opacity="0.13"/><ellipse cx="514" cy="1188" rx="122" ry="32" fill="#2c46b0" opacity="0.09"/><ellipse cx="944" cy="1452" rx="46" ry="49" fill="#2c46b0" opacity="0.06"/><ellipse cx="1749" cy="1546" rx="42" ry="43" fill="#2c46b0" opacity="0.10"/><ellipse cx="1236" cy="986" rx="45" ry="21" fill="#2c46b0" opacity="0.16"/><ellipse cx="90" cy="1486" rx="133" ry="48" fill="#2c46b0" opacity="0.09"/><ellipse cx="564" cy="1332" rx="118" ry="19" fill="#2c46b0" opacity="0.13"/><ellipse cx="1892" cy="1556" rx="44" ry="48" fill="#2c46b0" opacity="0.07"/><ellipse cx="522" cy="1389" rx="132" ry="27" fill="#2c46b0" opacity="0.15"/><ellipse cx="1135" cy="1189" rx="72" ry="21" fill="#2c46b0" opacity="0.07"/><ellipse cx="-53" cy="1442" rx="140" ry="21" fill="#2c46b0" opacity="0.06"/><ellipse cx="2460" cy="1337" rx="81" ry="23" fill="#2c46b0" opacity="0.12"/><ellipse cx="1979" cy="1285" rx="82" ry="17" fill="#2c46b0" opacity="0.15"/><ellipse cx="-402" cy="1311" rx="124" ry="20" fill="#2c46b0" opacity="0.13"/><ellipse cx="2349" cy="1402" rx="119" ry="19" fill="#2c46b0" opacity="0.10"/><ellipse cx="-52" cy="1546" rx="69" ry="31" fill="#2c46b0" opacity="0.16"/><ellipse cx="2057" cy="1634" rx="85" ry="32" fill="#2c46b0" opacity="0.13"/><ellipse cx="937" cy="1175" rx="80" ry="20" fill="#2c46b0" opacity="0.10"/><ellipse cx="2465" cy="1623" rx="103" ry="32" fill="#2c46b0" opacity="0.09"/><ellipse cx="-233" cy="1162" rx="118" ry="45" fill="#2c46b0" opacity="0.10"/><ellipse cx="1858" cy="1499" rx="109" ry="38" fill="#2c46b0" opacity="0.14"/><ellipse cx="590" cy="1452" rx="68" ry="32" fill="#2c46b0" opacity="0.14"/><ellipse cx="1573" cy="1177" rx="135" ry="38" fill="#2c46b0" opacity="0.12"/><ellipse cx="-465" cy="1346" rx="65" ry="39" fill="#2c46b0" opacity="0.11"/><ellipse cx="1950" cy="1414" rx="120" ry="27" fill="#2c46b0" opacity="0.12"/><ellipse cx="1713" cy="1535" rx="75" ry="45" fill="#2c46b0" opacity="0.15"/><ellipse cx="1565" cy="1634" rx="136" ry="33" fill="#2c46b0" opacity="0.11"/><ellipse cx="-1" cy="1541" rx="134" ry="32" fill="#2c46b0" opacity="0.13"/><ellipse cx="1659" cy="1469" rx="57" ry="42" fill="#2c46b0" opacity="0.12"/><ellipse cx="1497" cy="1262" rx="102" ry="42" fill="#2c46b0" opacity="0.12"/><ellipse cx="1661" cy="999" rx="56" ry="30" fill="#2c46b0" opacity="0.13"/></g>
<ellipse cx="-250" cy="1350" rx="300" ry="250" fill="#2036a0" opacity="0.1" filter="url(#fb14)"/>
<g filter="url(#fb2)"></g>
</g></symbol></defs>
 <g clip-path="url(#vclip)"><use href="#scene" x="0" y="0" width="1996" height="1131"/></g>
</svg>
<div class="t" style="left:618px;top:1793.0px;font-size:42.5px;color:#1f1f1f;">Ζωντανή συναυλία – Θεσσαλονίκη</div>

<!-- sidebar skeleton -->
<div class="a" style="left:496px;top:514px;width:2848px;height:1366px;overflow:hidden;"><div class="a" style="left:-496px;top:-514px;width:3840px;height:2160px;">
<div class="a" style="left:2648px;top:883px;width:287px;height:163.0px;border-radius:14px;background:#e6e7e9;"></div>
<div class="a" style="left:2648px;top:1063px;width:287px;height:165.0px;border-radius:14px;background:#e6e7e9;"></div>
<div class="a" style="left:2648px;top:1242.6px;width:287px;height:165.1px;border-radius:14px;background:#e6e7e9;"></div>
<div class="a" style="left:2648px;top:1422px;width:287px;height:170.0px;border-radius:14px;background:#e6e7e9;"></div>
<div class="a" style="left:2648px;top:1601px;width:287px;height:165.0px;border-radius:14px;background:#e6e7e9;"></div>
<div class="a" style="left:2648px;top:1777px;width:287px;height:183.0px;border-radius:14px;background:#e6e7e9;"></div>
<div class="a" style="left:2943px;top:1066.6px;width:286.5px;height:32px;border-radius:16.0px;background:#f0f0f0;"></div>
<div class="a" style="left:2943px;top:1104px;width:342.6px;height:32px;border-radius:16.0px;background:#f0f0f0;"></div>
<div class="a" style="left:2943px;top:1141.6px;width:152.0px;height:27px;border-radius:13.5px;background:#f0f0f0;"></div>
<div class="a" style="left:2943px;top:1172.6px;width:228.2px;height:26px;border-radius:13.0px;background:#f0f0f0;"></div>
<div class="a" style="left:2943px;top:1242px;width:286.5px;height:32px;border-radius:16.0px;background:#f0f0f0;"></div>
<div class="a" style="left:2943px;top:1279.5px;width:342.6px;height:32px;border-radius:16.0px;background:#f0f0f0;"></div>
<div class="a" style="left:2943px;top:1321px;width:152.0px;height:26px;border-radius:13.0px;background:#f0f0f0;"></div>
<div class="a" style="left:2943px;top:1354.4px;width:250.4px;height:26px;border-radius:13.0px;background:#f0f0f0;"></div>
<div class="a" style="left:2943px;top:1432px;width:286.3px;height:32px;border-radius:16.0px;background:#f0f0f0;"></div>
<div class="a" style="left:2943px;top:1469.3px;width:207.9px;height:26px;border-radius:13.0px;background:#f0f0f0;"></div>
<div class="a" style="left:2943px;top:1606.3px;width:355.0px;height:32px;border-radius:16.0px;background:#f0f0f0;"></div>
<div class="a" style="left:2943px;top:1644.2px;width:307.0px;height:32px;border-radius:16.0px;background:#f0f0f0;"></div>
<div class="a" style="left:2943px;top:1683.4px;width:152.0px;height:25px;border-radius:12.5px;background:#f0f0f0;"></div>
<div class="a" style="left:2943px;top:1713.9px;width:334.7px;height:25px;border-radius:12.5px;background:#f0f0f0;"></div>
<div class="a" style="left:2943px;top:1777px;width:334.7px;height:32px;border-radius:16.0px;background:#f0f0f0;"></div>
<div class="a" style="left:2943px;top:1815.3px;width:307.0px;height:32px;border-radius:16.0px;background:#f0f0f0;"></div>
<div class="a" style="left:2943px;top:1854px;width:152.0px;height:25px;border-radius:12.5px;background:#f0f0f0;"></div>
</div></div>

<!-- scrim -->
<div class="a" style="left:496px;top:280px;width:2848px;height:1600px;background:rgba(32,33,36,0.5);"></div>

<!-- highlighted media button -->
<div class="a" style="left:3116px;top:399px;width:114px;height:114px;border-radius:50%;background:#e8e9ec;"></div>
<svg style="left:0;top:0" width="3840" height="2160">
 <rect x="3146" y="441.5" width="34" height="5.4" fill="#000"/>
 <rect x="3146" y="453" width="34" height="5.4" fill="#000"/>
 <rect x="3146" y="464" width="22.7" height="5.4" fill="#000"/>
 <rect x="3186" y="441.5" width="5.4" height="32" fill="#000"/>
 <rect x="3186" y="441.5" width="14" height="5.4" fill="#000"/>
 <circle cx="3182.8" cy="472.4" r="8.6" fill="#000"/>
</svg>

<!-- cast chip -->
<div class="a" style="left:652px;top:1602px;width:947px;height:121px;border-radius:60.5px;background:#212226;"></div>
<svg style="left:0;top:0" width="3840" height="2160">
 <path d="M 720 1650 L 720 1647 A 4 4 0 0 1 724 1643 L 765 1643 A 4 4 0 0 1 769 1647 L 769 1678 A 4 4 0 0 1 765 1682 L 750 1682" fill="none" stroke="#fff" stroke-width="4.5"/>
 <path d="M 720 1657.5 A 25 25 0 0 1 745 1682.5" fill="none" stroke="#fff" stroke-width="4.5"/>
 <path d="M 720 1667 A 15.5 15.5 0 0 1 735.5 1682.5" fill="none" stroke="#fff" stroke-width="4.5"/>
 <path d="M 720 1675 A 8 8 0 0 1 728 1683 L 720 1683 Z" fill="#fff"/>
</svg>
<div class="t" style="left:805px;top:1643.3px;font-size:38px;color:#ffffff;letter-spacing:0.23px">Αναπαραγωγή στην τηλεόραση στο σαλόνι</div>

<!-- popup -->
<div class="a" style="left:2508px;top:557px;width:801px;height:471px;border-radius:16px;box-shadow:0 14px 56px rgba(0,0,0,0.4);"></div>
<div class="a" style="left:2508px;top:557px;width:801px;height:471px;border-radius:13px 16px 16px 16px;overflow:hidden;background:#ffffff;">
 <div class="a" style="left:0;top:0;width:801px;height:264px;background:#060913;"></div>
 <svg style="left:435px;top:0;overflow:hidden" width="366" height="264" viewBox="352 77 1280 923" preserveAspectRatio="none">
  <use href="#scene" x="0" y="0" width="1996" height="1131"/>
 </svg>
 <div class="a" style="left:0;top:369px;width:801px;height:1.5px;background:#7880c0;"></div>
</div>
<svg style="left:0;top:0" width="3840" height="2160">
 <g fill="#d0d3fa">
  <rect x="2549" y="596" width="57" height="16" rx="8"/>
  <rect x="2549" y="645" width="256" height="16" rx="8"/>
  <rect x="2549" y="673" width="134" height="17" rx="8.5"/>
  <path d="M 2557 760.5 L 2574 749 L 2574 772 Z M 2577 760.5 L 2595 749 L 2595 772 Z" stroke="#d0d3fa" stroke-width="2" stroke-linejoin="round"/>
  <path d="M 2646 747 L 2646 774.5 L 2670 760.7 Z" stroke="#d0d3fa" stroke-width="2" stroke-linejoin="round"/>
  <path d="M 2733 760.5 L 2716 749 L 2716 772 Z M 2753 760.5 L 2736 749 L 2736 772 Z" stroke="#d0d3fa" stroke-width="2" stroke-linejoin="round"/>
  <rect x="2784.2" y="735.5" width="4" height="50" rx="2"/>
  <rect x="2841.6" y="763" width="19.4" height="12.5"/>
 </g>
 <g fill="none" stroke="#d0d3fa" stroke-width="3.3">
  <path d="M 2835.7 741.6 L 2859.3 741.6 L 2859.3 759.7"/>
  <path d="M 2817.6 759.7 L 2817.6 773.8 L 2838 773.8"/>
  <path d="M 2816 740 L 2830 754 M 2816 753.4 L 2829.4 753.4 L 2829.4 740"/>
 </g>
 <!-- menu icons -->
 <g fill="none" stroke="#000" stroke-width="3.2">
  <rect x="2557.2" y="857.9" width="41.2" height="32.2" rx="3"/>
 </g>
 <g fill="#000">
  <rect x="2564.8" y="871" width="2.8" height="3.2"/><rect x="2570.6" y="871" width="20.7" height="3.2"/>
  <rect x="2564.8" y="878.2" width="19.2" height="3.2"/><rect x="2588" y="878.2" width="3.3" height="3.2"/>
 </g>
 <g transform="translate(2578 977.5)">
  <path d="M -4.5 -22 L 4.5 -22 L 5.5 -15.5 L 11 -12.5 L 17 -15 L 21.5 -7.5 L 16.5 -3.5 L 16.5 3.5 L 21.5 7.5 L 17 15 L 11 12.5 L 5.5 15.5 L 4.5 22 L -4.5 22 L -5.5 15.5 L -11 12.5 L -17 15 L -21.5 7.5 L -16.5 3.5 L -16.5 -3.5 L -21.5 -7.5 L -17 -15 L -11 -12.5 L -5.5 -15.5 Z" fill="none" stroke="#000" stroke-width="3.2" stroke-linejoin="miter"/>
  <circle cx="0" cy="0" r="7" fill="#000"/>
 </g>
 <rect x="3217.6" y="864" width="43.5" height="21.2" rx="10.6" fill="none" stroke="#000" stroke-width="5"/>
 <circle cx="3228" cy="874.8" r="7" fill="#000"/>
 <path d="M 3252 959.5 L 3236 959.5 L 3236 996 L 3272.6 996 L 3272.6 980" fill="none" stroke="#000" stroke-width="3.3"/>
 <path d="M 3256 959.5 L 3272.6 959.5 L 3272.6 970 M 3247 984 L 3271.6 959.5" fill="none" stroke="#000" stroke-width="3.3"/>
</svg>
<div class="t" style="left:2631px;top:855.9px;font-size:35px;color:#1f1f1f;letter-spacing:1.12px">Ζωντανοί υπότιτλοι</div>
<div class="t" style="left:2630px;top:959.4px;font-size:35px;color:#1f1f1f;letter-spacing:1.0px">Ρυθμίσεις υποτίτλων</div>

<!-- corner notches -->
<div class="a" style="left:496px;top:280px;width:8px;height:16px;background:#000;"></div>
<div class="a" style="left:3336px;top:280px;width:8px;height:16px;background:#000;"></div>
<div class="a" style="left:496px;top:1864px;width:8px;height:16px;background:#000;"></div>
<div class="a" style="left:504px;top:1872px;width:8px;height:8px;background:#000;"></div>
<div class="a" style="left:3336px;top:1864px;width:8px;height:16px;background:#000;"></div>
<div class="a" style="left:3328px;top:1872px;width:8px;height:8px;background:#000;"></div>
</body></html>
